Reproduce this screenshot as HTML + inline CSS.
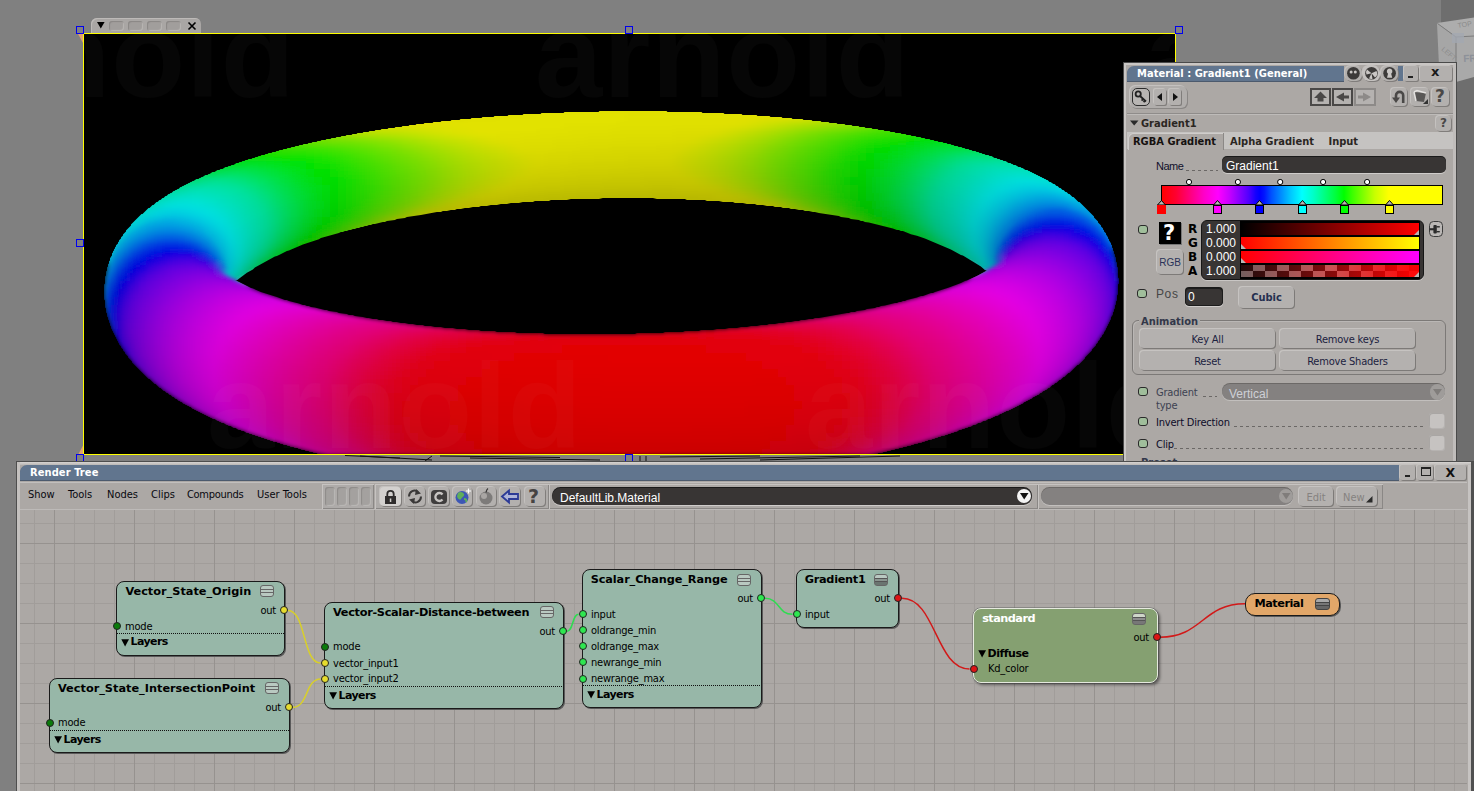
<!DOCTYPE html>
<html><head><meta charset="utf-8"><title>Render Tree</title>
<style>
*{box-sizing:border-box;margin:0;padding:0}
html,body{width:1474px;height:791px;overflow:hidden}
body{position:relative;background:#808080;font-family:"Liberation Sans",sans-serif;font-size:11px;color:#111}
.abs{position:absolute}
.hd{position:absolute;width:8px;height:8px;border:1px solid #0000f0;background:#808080}
/* property panel */
#pp{position:absolute;left:1123px;top:62px;width:334px;height:402px;background:#aca8a5;border:1px solid #4a4a4a;overflow:hidden}
#pp .in{position:absolute;left:0;top:0;right:0;bottom:0;border-left:2px solid #c9c6c4;border-top:2px solid #c9c6c4;border-right:3px solid #c0bdbb}
.ui{font-family:"DejaVu Sans Condensed","DejaVu Sans",sans-serif}
.btn{position:absolute;background:#b4b1af;border-radius:4px;box-shadow:1px 1px 0 #7d7a78,-1px -1px 0 #c6c3c1;text-align:center;color:#1c2140}
.ico{position:absolute;background:#b3b0ae;border-radius:4px;box-shadow:1px 1px 0 #807d7b,-1px -1px 0 #c4c1bf}
.fld{position:absolute;background:#383534;border-radius:5px;color:#fff;box-shadow:0 -1px 0 #1a1a1a,0 1px 0 #cfccca}
.an{position:absolute;width:10px;height:9px;background:#a0be9b;border:1px solid #2a2a2a;border-radius:3px}
.lbl{position:absolute;white-space:nowrap}
.dots{position:absolute;height:1px;background:repeating-linear-gradient(90deg,#6b6866 0 3px,transparent 3px 6px)}
/* render tree */
#rt{position:absolute;left:16px;top:461px;width:1458px;height:330px;background:#aca8a5;border-left:1px solid #505050;border-top:1px solid #505050}
#grid{position:absolute;left:20px;top:510px;width:1447px;height:281px;background-color:#aca8a5;
background-image:linear-gradient(90deg,#96928f 0 1px,transparent 1px),linear-gradient(#96928f 0 1px,transparent 1px),linear-gradient(90deg,#a19d9a 0 1px,transparent 1px),linear-gradient(#a19d9a 0 1px,transparent 1px);
background-size:80px 80px,80px 80px,20px 20px,20px 20px;background-position:34px 33px,34px 33px,14px 13px,14px 13px}
.node{position:absolute;border:1px solid #1a1a1a;border-radius:8px;background:#97b7a8;box-shadow:1px 1px 0 #5a5a5a}
.nt{position:absolute;font:bold 11.3px "DejaVu Sans",sans-serif;color:#000;white-space:nowrap;line-height:14px}
.pl{position:absolute;font:11px "DejaVu Sans Condensed","DejaVu Sans",sans-serif;color:#000;white-space:nowrap;line-height:13px;letter-spacing:-.2px}
.port{position:absolute;width:8px;height:8px;border-radius:50%;border:1px solid #222}
.dl{position:absolute;left:0;right:0;height:1px;background:repeating-linear-gradient(90deg,#111 0 1px,transparent 1px 2px)}
.mi{position:absolute;width:14px;height:12px;border:1px solid #666;border-radius:3px;background:linear-gradient(#b9c9c1 0 3px,#666 3px 4px,#b9c9c1 4px 6px,#666 6px 7px,#b9c9c1 7px)}
.menu span{position:absolute;top:0;font:11px "DejaVu Sans Condensed","DejaVu Sans",sans-serif;color:#08080f;white-space:nowrap}
</style></head><body>
<!-- viewport background pieces -->
<div class="abs" style="left:1441px;top:0;width:33px;height:462px;background:#6e6e6e"></div>
<svg class="abs" style="left:1430px;top:10px" width="44" height="80" viewBox="1430 10 44 80">
<polygon points="1437,23 1474,17.5 1474,40 1456,37" fill="#adadad"/>
<polygon points="1437,23 1456,37 1456,82 1439,66" fill="#a6a6a6"/>
<polygon points="1456,37 1474,36 1474,77 1456,82" fill="#a9a9a9"/>
<path d="M1437.5 23.5L1456 37L1474 36M1456 37V82" stroke="#7c7c7c" stroke-width="1" fill="none"/>
<rect x="1452" y="33" width="12" height="10" fill="#a3a8b0" opacity=".8"/>
<text x="1463.5" y="62" font-family="Liberation Sans,sans-serif" font-size="10" font-weight="bold" fill="#8d9199" transform="rotate(-3 1463 62)">FRONT</text>
<text x="1458" y="28" font-family="Liberation Sans,sans-serif" font-size="7" fill="#8b8b8b" transform="rotate(-9 1458 28)">TOP</text>
<text x="1441" y="50" font-family="Liberation Sans,sans-serif" font-size="7" fill="#8b8b8b" transform="rotate(40 1441 50)">LEFT</text>
</svg>
<!-- region tab -->
<div class="abs" style="left:91px;top:18px;width:110px;height:16px;background:#a9a6a4;border-radius:6px 6px 0 0;box-shadow:inset 1px 1px 0 #bdbab8"></div>
<svg class="abs" style="left:96px;top:21px" width="10" height="8"><polygon points="1,1 8.6,1 4.8,7.4" fill="#000"/></svg>
<div class="abs" style="left:109px;top:21px;width:15px;height:10px;border-radius:3px;background:#a19e9c;box-shadow:inset 1px 1px 1px #8a8785,inset -1px -1px 1px #b9b6b4"></div>
<div class="abs" style="left:128px;top:21px;width:15px;height:10px;border-radius:3px;background:#a19e9c;box-shadow:inset 1px 1px 1px #8a8785,inset -1px -1px 1px #b9b6b4"></div>
<div class="abs" style="left:147px;top:21px;width:15px;height:10px;border-radius:3px;background:#a19e9c;box-shadow:inset 1px 1px 1px #8a8785,inset -1px -1px 1px #b9b6b4"></div>
<div class="abs" style="left:166px;top:21px;width:15px;height:10px;border-radius:3px;background:#a19e9c;box-shadow:inset 1px 1px 1px #8a8785,inset -1px -1px 1px #b9b6b4"></div>
<svg class="abs" style="left:187px;top:21px" width="10" height="10"><path d="M1.5 1.5L8.5 8.5M8.5 1.5L1.5 8.5" stroke="#000" stroke-width="1.6"/></svg>
<!-- render region -->
<div class="abs" style="left:83px;top:33px;width:1093px;height:422px;background:#000;border:1px solid #ffff00"></div>
<svg class="abs" style="left:84px;top:34px" width="1091" height="420" viewBox="84 34 1091 420"><defs><clipPath id="tc"><path clip-rule="evenodd" d="M869.5 456.0L326.5 456.0L325.5 455.0L321.5 455.0L320.5 454.0L317.5 454.0L316.5 453.0L313.5 453.0L312.5 452.0L309.5 452.0L308.5 451.0L305.5 451.0L304.5 450.0L301.5 450.0L300.5 449.0L298.5 449.0L297.5 448.0L294.5 448.0L293.5 447.0L290.5 447.0L289.5 446.0L287.5 446.0L286.5 445.0L283.5 445.0L282.5 444.0L280.5 444.0L279.5 443.0L277.5 443.0L276.5 442.0L273.5 442.0L272.5 441.0L270.5 441.0L269.5 440.0L267.5 440.0L266.5 439.0L264.5 439.0L263.5 438.0L261.5 438.0L260.5 437.0L258.5 437.0L257.5 436.0L255.5 436.0L254.5 435.0L252.5 435.0L251.5 434.0L249.5 434.0L248.5 433.0L246.5 433.0L243.5 431.0L241.5 431.0L240.5 430.0L238.5 430.0L235.5 428.0L233.5 428.0L230.5 426.0L228.5 426.0L227.5 425.0L226.5 425.0L223.5 423.0L221.5 423.0L220.5 422.0L219.5 422.0L218.5 421.0L217.5 421.0L214.5 419.0L212.5 419.0L211.5 418.0L210.5 418.0L209.5 417.0L208.5 417.0L207.5 416.0L206.5 416.0L205.5 415.0L204.5 415.0L203.5 414.0L202.5 414.0L201.5 413.0L200.5 413.0L199.5 412.0L198.5 412.0L197.5 411.0L196.5 411.0L195.5 410.0L194.5 410.0L193.5 409.0L192.5 409.0L190.5 407.0L189.5 407.0L188.5 406.0L187.5 406.0L186.5 405.0L185.5 405.0L184.5 404.0L183.5 404.0L181.5 402.0L180.5 402.0L179.5 401.0L178.5 401.0L176.5 399.0L175.5 399.0L173.5 397.0L172.5 397.0L170.5 395.0L169.5 395.0L167.5 393.0L166.5 393.0L164.5 391.0L163.5 391.0L160.5 388.0L159.5 388.0L155.5 384.0L154.5 384.0L149.5 379.0L148.5 379.0L132 362.5L132 361.5L128 357.5L128 356.5L125 353.5L125 352.5L123 350.5L123 349.5L121 347.5L121 346.5L119 344.5L119 343.5L118 342.5L118 341.5L117 340.5L117 339.5L116 338.5L116 337.5L115 336.5L115 335.5L114 334.5L114 333.5L113 332.5L113 331.5L112 330.5L112 329.5L111 328.5L111 326.5L110 325.5L110 323.5L109 322.5L109 320.5L108 319.5L108 317.5L107 316.5L107 313.5L106 312.5L106 308.5L105 307.5L105 300.5L104 299.5L104 284.5L105 283.5L105 276.5L106 275.5L106 271.5L107 270.5L107 267.5L108 266.5L108 264.5L109 263.5L109 261.5L110 260.5L110 258.5L112 255.5L112 253.5L113 252.5L113 251.5L114 250.5L114 249.5L115 248.5L115 247.5L116 246.5L116 245.5L118 243.5L118 242.5L119 241.5L119 240.5L121 238.5L121 237.5L123 235.5L123 234.5L126 231.5L126 230.5L131 225.5L131 224.5L141.5 214.0L142.5 214.0L148.5 208.0L149.5 208.0L152.5 205.0L153.5 205.0L156.5 202.0L157.5 202.0L159.5 200.0L160.5 200.0L162.5 198.0L163.5 198.0L165.5 196.0L166.5 196.0L168.5 194.0L169.5 194.0L170.5 193.0L171.5 193.0L173.5 191.0L174.5 191.0L175.5 190.0L176.5 190.0L177.5 189.0L178.5 189.0L180.5 187.0L181.5 187.0L182.5 186.0L183.5 186.0L184.5 185.0L185.5 185.0L186.5 184.0L187.5 184.0L188.5 183.0L189.5 183.0L190.5 182.0L191.5 182.0L192.5 181.0L193.5 181.0L196.5 179.0L198.5 179.0L199.5 178.0L200.5 178.0L201.5 177.0L202.5 177.0L205.5 175.0L207.5 175.0L208.5 174.0L209.5 174.0L212.5 172.0L214.5 172.0L217.5 170.0L219.5 170.0L220.5 169.0L222.5 169.0L225.5 167.0L227.5 167.0L228.5 166.0L230.5 166.0L231.5 165.0L233.5 165.0L236.5 163.0L238.5 163.0L239.5 162.0L241.5 162.0L242.5 161.0L244.5 161.0L245.5 160.0L247.5 160.0L248.5 159.0L251.5 159.0L252.5 158.0L254.5 158.0L255.5 157.0L257.5 157.0L258.5 156.0L260.5 156.0L261.5 155.0L264.5 155.0L265.5 154.0L267.5 154.0L268.5 153.0L271.5 153.0L272.5 152.0L275.5 152.0L276.5 151.0L278.5 151.0L279.5 150.0L282.5 150.0L283.5 149.0L286.5 149.0L287.5 148.0L290.5 148.0L291.5 147.0L294.5 147.0L295.5 146.0L298.5 146.0L299.5 145.0L302.5 145.0L303.5 144.0L307.5 144.0L308.5 143.0L311.5 143.0L312.5 142.0L316.5 142.0L317.5 141.0L320.5 141.0L321.5 140.0L325.5 140.0L326.5 139.0L330.5 139.0L331.5 138.0L335.5 138.0L336.5 137.0L340.5 137.0L341.5 136.0L345.5 136.0L346.5 135.0L351.5 135.0L352.5 134.0L356.5 134.0L357.5 133.0L362.5 133.0L363.5 132.0L368.5 132.0L369.5 131.0L374.5 131.0L375.5 130.0L380.5 130.0L381.5 129.0L387.5 129.0L388.5 128.0L394.5 128.0L395.5 127.0L401.5 127.0L402.5 126.0L408.5 126.0L409.5 125.0L415.5 125.0L416.5 124.0L423.5 124.0L424.5 123.0L432.5 123.0L433.5 122.0L440.5 122.0L441.5 121.0L450.5 121.0L451.5 120.0L459.5 120.0L460.5 119.0L470.5 119.0L471.5 118.0L481.5 118.0L482.5 117.0L493.5 117.0L494.5 116.0L507.5 116.0L508.5 115.0L522.5 115.0L523.5 114.0L540.5 114.0L541.5 113.0L563.5 113.0L564.5 112.0L598.5 112.0L599.5 111.0L666.5 111.0L667.5 112.0L701.5 112.0L702.5 113.0L723.5 113.0L724.5 114.0L741.5 114.0L742.5 115.0L756.5 115.0L757.5 116.0L769.5 116.0L770.5 117.0L781.5 117.0L782.5 118.0L791.5 118.0L792.5 119.0L802.5 119.0L803.5 120.0L811.5 120.0L812.5 121.0L820.5 121.0L821.5 122.0L828.5 122.0L829.5 123.0L836.5 123.0L837.5 124.0L844.5 124.0L845.5 125.0L851.5 125.0L852.5 126.0L858.5 126.0L859.5 127.0L864.5 127.0L865.5 128.0L871.5 128.0L872.5 129.0L877.5 129.0L878.5 130.0L883.5 130.0L884.5 131.0L889.5 131.0L890.5 132.0L894.5 132.0L895.5 133.0L900.5 133.0L901.5 134.0L905.5 134.0L906.5 135.0L910.5 135.0L911.5 136.0L915.5 136.0L916.5 137.0L920.5 137.0L921.5 138.0L924.5 138.0L925.5 139.0L929.5 139.0L930.5 140.0L933.5 140.0L934.5 141.0L937.5 141.0L938.5 142.0L942.5 142.0L943.5 143.0L946.5 143.0L947.5 144.0L950.5 144.0L951.5 145.0L953.5 145.0L954.5 146.0L957.5 146.0L958.5 147.0L961.5 147.0L962.5 148.0L964.5 148.0L965.5 149.0L968.5 149.0L969.5 150.0L971.5 150.0L972.5 151.0L975.5 151.0L976.5 152.0L978.5 152.0L979.5 153.0L981.5 153.0L982.5 154.0L984.5 154.0L985.5 155.0L988.5 155.0L989.5 156.0L991.5 156.0L994.5 158.0L996.5 158.0L997.5 159.0L999.5 159.0L1000.5 160.0L1002.5 160.0L1003.5 161.0L1005.5 161.0L1008.5 163.0L1010.5 163.0L1011.5 164.0L1012.5 164.0L1013.5 165.0L1015.5 165.0L1018.5 167.0L1020.5 167.0L1021.5 168.0L1022.5 168.0L1025.5 170.0L1027.5 170.0L1028.5 171.0L1029.5 171.0L1030.5 172.0L1031.5 172.0L1032.5 173.0L1033.5 173.0L1034.5 174.0L1035.5 174.0L1036.5 175.0L1037.5 175.0L1038.5 176.0L1039.5 176.0L1040.5 177.0L1041.5 177.0L1042.5 178.0L1043.5 178.0L1044.5 179.0L1045.5 179.0L1046.5 180.0L1047.5 180.0L1049.5 182.0L1050.5 182.0L1053.5 184.0L1054.5 184.0L1056.5 186.0L1057.5 186.0L1059.5 188.0L1060.5 188.0L1062.5 190.0L1063.5 190.0L1065.5 192.0L1066.5 192.0L1068.5 194.0L1069.5 194.0L1072.5 197.0L1073.5 197.0L1078.5 202.0L1079.5 202.0L1094 216.5L1094 217.5L1098 221.5L1098 222.5L1101 225.5L1101 226.5L1103 228.5L1103 229.5L1104 230.5L1104 231.5L1106 233.5L1106 234.5L1108 237.5L1108 238.5L1109 239.5L1109 240.5L1111 243.5L1111 244.5L1112 245.5L1112 247.5L1113 248.5L1113 250.5L1114 251.5L1114 253.5L1115 254.5L1115 256.5L1116 257.5L1116 261.5L1117 262.5L1117 266.5L1118 267.5L1118 277.5L1119 278.5L1119 283.5L1118 284.5L1118 294.5L1117 295.5L1117 300.5L1116 301.5L1116 304.5L1115 305.5L1115 308.5L1114 309.5L1114 311.5L1113 312.5L1113 314.5L1111 317.5L1111 319.5L1110 320.5L1110 321.5L1109 322.5L1109 323.5L1108 324.5L1108 325.5L1107 326.5L1107 327.5L1106 328.5L1106 329.5L1104 332.5L1104 333.5L1102 335.5L1102 336.5L1100 338.5L1100 339.5L1098 341.5L1098 342.5L1096 344.5L1096 345.5L1092 349.5L1092 350.5L1085 357.5L1085 358.5L1078.5 365.0L1077.5 365.0L1069.5 373.0L1068.5 373.0L1064.5 377.0L1063.5 377.0L1060.5 380.0L1059.5 380.0L1056.5 383.0L1055.5 383.0L1053.5 385.0L1052.5 385.0L1049.5 388.0L1048.5 388.0L1046.5 390.0L1045.5 390.0L1044.5 391.0L1043.5 391.0L1041.5 393.0L1040.5 393.0L1038.5 395.0L1037.5 395.0L1036.5 396.0L1035.5 396.0L1034.5 397.0L1033.5 397.0L1031.5 399.0L1030.5 399.0L1029.5 400.0L1028.5 400.0L1027.5 401.0L1026.5 401.0L1025.5 402.0L1024.5 402.0L1022.5 404.0L1021.5 404.0L1020.5 405.0L1019.5 405.0L1018.5 406.0L1017.5 406.0L1016.5 407.0L1015.5 407.0L1014.5 408.0L1013.5 408.0L1012.5 409.0L1011.5 409.0L1010.5 410.0L1009.5 410.0L1008.5 411.0L1006.5 411.0L1005.5 412.0L1004.5 412.0L1003.5 413.0L1002.5 413.0L1001.5 414.0L1000.5 414.0L997.5 416.0L995.5 416.0L994.5 417.0L993.5 417.0L992.5 418.0L991.5 418.0L990.5 419.0L988.5 419.0L985.5 421.0L983.5 421.0L980.5 423.0L978.5 423.0L975.5 425.0L973.5 425.0L970.5 427.0L968.5 427.0L967.5 428.0L965.5 428.0L964.5 429.0L962.5 429.0L961.5 430.0L959.5 430.0L956.5 432.0L954.5 432.0L953.5 433.0L951.5 433.0L950.5 434.0L948.5 434.0L947.5 435.0L945.5 435.0L944.5 436.0L941.5 436.0L940.5 437.0L938.5 437.0L937.5 438.0L935.5 438.0L934.5 439.0L932.5 439.0L931.5 440.0L928.5 440.0L927.5 441.0L925.5 441.0L924.5 442.0L922.5 442.0L921.5 443.0L918.5 443.0L917.5 444.0L914.5 444.0L913.5 445.0L911.5 445.0L910.5 446.0L907.5 446.0L906.5 447.0L903.5 447.0L902.5 448.0L899.5 448.0L898.5 449.0L895.5 449.0L894.5 450.0L891.5 450.0L890.5 451.0L887.5 451.0L886.5 452.0L883.5 452.0L882.5 453.0L878.5 453.0L877.5 454.0L874.5 454.0L873.5 455.0L870.5 455.0L869.5 456.0ZM232.9 279.0L234.9 280.0L236.9 280.3L246.9 272.7L252.9 269.4L254.9 267.6L274.9 256.6L276.9 256.1L286.9 251.1L288.9 250.6L302.9 244.6L318.9 239.2L320.9 238.1L338.9 233.0L340.9 232.0L342.9 232.0L344.9 231.0L346.9 231.0L348.9 230.0L350.9 230.0L352.9 229.0L354.9 229.0L356.9 228.0L358.9 228.0L360.9 227.0L362.9 227.0L364.9 226.0L366.9 226.0L368.9 225.0L370.9 225.0L372.9 224.0L374.9 224.0L382.9 222.0L384.9 222.0L386.9 221.0L394.9 220.0L396.9 219.0L404.9 218.0L406.9 217.0L420.9 215.0L436.9 212.0L440.9 212.0L442.9 211.0L446.9 211.0L450.9 210.0L454.9 210.0L456.9 209.0L460.9 209.0L464.9 208.0L468.9 208.0L472.9 207.0L478.9 207.0L480.9 206.0L486.9 206.0L490.9 205.0L496.9 205.0L500.9 204.0L506.9 204.0L510.9 203.0L518.9 203.0L522.9 202.0L532.9 202.0L534.9 201.0L548.9 201.0L550.9 200.0L566.9 200.0L570.9 199.0L598.9 199.0L602.9 198.0L652.9 198.0L656.9 199.0L684.9 199.0L686.9 200.0L704.9 200.0L706.9 201.0L718.9 201.0L722.9 202.0L732.9 202.0L734.9 203.0L742.9 203.0L746.9 204.0L754.9 204.0L756.9 205.0L762.9 205.0L766.9 206.0L772.9 206.0L774.9 207.0L780.9 207.0L782.9 208.0L788.9 208.0L790.9 209.0L794.9 209.0L798.9 210.0L802.9 210.0L804.9 211.0L808.9 211.0L812.9 212.0L814.9 212.0L818.9 213.0L838.9 216.0L840.9 217.0L848.9 218.0L850.9 219.0L858.9 220.0L860.9 221.0L862.9 221.0L864.9 222.0L868.9 222.4L892.9 228.4L896.9 230.0L898.9 230.0L900.9 231.0L902.9 231.1L910.9 234.2L916.9 235.7L924.9 238.5L950.9 249.5L960.9 255.0L962.9 255.5L980.9 266.6L984.9 269.9L986.9 270.6L993 266.5L986.9 270.6L976.9 276.0L966.9 280.6L964.9 281.0L960.9 283.0L948.9 287.6L934.9 292.0L932.9 293.0L930.9 293.0L922.9 296.0L920.9 296.0L916.9 297.6L906.9 300.0L904.9 301.0L902.9 301.0L900.9 302.0L898.9 302.0L896.9 303.0L894.9 303.0L884.9 305.6L880.9 306.0L878.9 307.0L876.9 307.0L874.9 308.0L866.9 309.0L864.9 310.0L856.9 311.0L854.9 312.0L850.9 312.0L848.9 313.0L846.9 313.0L818.9 318.0L814.9 318.0L812.9 319.0L808.9 319.0L804.9 320.0L800.9 320.0L798.9 321.0L794.9 321.0L790.9 322.0L786.9 322.0L782.9 323.0L778.9 323.0L774.9 324.0L768.9 324.0L766.9 325.0L760.9 325.0L756.9 326.0L750.9 326.0L746.9 327.0L740.9 327.0L736.9 328.0L728.9 328.0L724.9 329.0L716.9 329.0L712.9 330.0L700.9 330.0L698.9 331.0L684.9 331.0L682.9 332.0L664.9 332.0L662.9 333.0L636.9 333.0L634.9 334.0L544.9 334.0L542.9 333.0L516.9 333.0L514.9 332.0L496.9 332.0L494.9 331.0L480.9 331.0L478.9 330.0L468.9 330.0L464.9 329.0L456.9 329.0L452.9 328.0L444.9 328.0L440.9 327.0L434.9 327.0L430.9 326.0L424.9 326.0L422.9 325.0L416.9 325.0L412.9 324.0L408.9 324.0L404.9 323.0L400.9 323.0L396.9 322.0L392.9 322.0L390.9 321.0L386.9 321.0L382.9 320.0L378.9 320.0L376.9 319.0L372.9 319.0L368.9 318.0L366.9 318.0L362.9 317.0L354.9 316.0L352.9 315.0L348.9 315.0L346.9 314.0L338.9 313.0L336.9 312.0L328.9 311.0L326.9 310.0L324.9 310.0L314.9 307.4L310.9 307.0L308.9 306.0L306.9 306.0L304.9 305.0L302.9 305.0L298.9 303.4L288.9 301.0L286.9 300.0L284.9 300.0L276.9 297.0L260.9 292.0L252.9 288.4L250.9 288.0L232.9 279.0Z"/></clipPath><filter id="tm" x="-2%" y="-5%" width="104%" height="110%"><feGaussianBlur stdDeviation="2"/></filter><mask id="tf" maskUnits="userSpaceOnUse" x="84" y="34" width="1091" height="420"><path fill="#fff" fill-rule="evenodd" filter="url(#tm)" d="M869.5 456.0L326.5 456.0L325.5 455.0L321.5 455.0L320.5 454.0L317.5 454.0L316.5 453.0L313.5 453.0L312.5 452.0L309.5 452.0L308.5 451.0L305.5 451.0L304.5 450.0L301.5 450.0L300.5 449.0L298.5 449.0L297.5 448.0L294.5 448.0L293.5 447.0L290.5 447.0L289.5 446.0L287.5 446.0L286.5 445.0L283.5 445.0L282.5 444.0L280.5 444.0L279.5 443.0L277.5 443.0L276.5 442.0L273.5 442.0L272.5 441.0L270.5 441.0L269.5 440.0L267.5 440.0L266.5 439.0L264.5 439.0L263.5 438.0L261.5 438.0L260.5 437.0L258.5 437.0L257.5 436.0L255.5 436.0L254.5 435.0L252.5 435.0L251.5 434.0L249.5 434.0L248.5 433.0L246.5 433.0L243.5 431.0L241.5 431.0L240.5 430.0L238.5 430.0L235.5 428.0L233.5 428.0L230.5 426.0L228.5 426.0L227.5 425.0L226.5 425.0L223.5 423.0L221.5 423.0L220.5 422.0L219.5 422.0L218.5 421.0L217.5 421.0L214.5 419.0L212.5 419.0L211.5 418.0L210.5 418.0L209.5 417.0L208.5 417.0L207.5 416.0L206.5 416.0L205.5 415.0L204.5 415.0L203.5 414.0L202.5 414.0L201.5 413.0L200.5 413.0L199.5 412.0L198.5 412.0L197.5 411.0L196.5 411.0L195.5 410.0L194.5 410.0L193.5 409.0L192.5 409.0L190.5 407.0L189.5 407.0L188.5 406.0L187.5 406.0L186.5 405.0L185.5 405.0L184.5 404.0L183.5 404.0L181.5 402.0L180.5 402.0L179.5 401.0L178.5 401.0L176.5 399.0L175.5 399.0L173.5 397.0L172.5 397.0L170.5 395.0L169.5 395.0L167.5 393.0L166.5 393.0L164.5 391.0L163.5 391.0L160.5 388.0L159.5 388.0L155.5 384.0L154.5 384.0L149.5 379.0L148.5 379.0L132 362.5L132 361.5L128 357.5L128 356.5L125 353.5L125 352.5L123 350.5L123 349.5L121 347.5L121 346.5L119 344.5L119 343.5L118 342.5L118 341.5L117 340.5L117 339.5L116 338.5L116 337.5L115 336.5L115 335.5L114 334.5L114 333.5L113 332.5L113 331.5L112 330.5L112 329.5L111 328.5L111 326.5L110 325.5L110 323.5L109 322.5L109 320.5L108 319.5L108 317.5L107 316.5L107 313.5L106 312.5L106 308.5L105 307.5L105 300.5L104 299.5L104 284.5L105 283.5L105 276.5L106 275.5L106 271.5L107 270.5L107 267.5L108 266.5L108 264.5L109 263.5L109 261.5L110 260.5L110 258.5L112 255.5L112 253.5L113 252.5L113 251.5L114 250.5L114 249.5L116 247.5L116 246.5L118 244.5L118 243.5L129.5 232.0L130.5 232.0L132.5 230.0L133.5 230.0L135.5 228.0L136.5 228.0L137.5 227.0L138.5 227.0L141.5 225.0L143.5 225.0L146.5 223.0L149.5 223.0L150.5 222.0L153.5 222.0L154.5 221.0L161.5 221.0L162.5 220.0L169.5 220.0L170.5 221.0L177.5 221.0L178.5 222.0L182.5 222.0L183.5 223.0L185.5 223.0L186.5 224.0L188.5 224.0L191.5 226.0L192.5 226.0L193.5 227.0L195.5 227.0L197.5 229.0L198.5 229.0L199.5 230.0L200.5 230.0L202.5 232.0L203.5 232.0L208.5 237.0L209.5 237.0L211 238.5L211 239.5L216 244.5L216 245.5L218 247.5L218 248.5L220 250.5L220 251.5L222 254.5L222 255.5L223 256.5L223 258.5L224 259.5L224 261.5L225 262.5L225 265.5L226 266.5L226 270.5L225.5 271.0L222.5 268.0L221.5 268.0L220.5 267.0L220 267.5L220 268.5L226.5 275.0L227.5 275.0L229.5 277.0L230.5 277.0L232.5 279.0L233.5 279.0L234.5 280.0L235.5 280.0L236.5 281.0L237.5 281.0L238.5 282.0L239.5 282.0L240.5 283.0L241.5 283.0L242.5 284.0L243.5 284.0L244.5 285.0L245.5 285.0L246.5 286.0L247.5 286.0L248.5 287.0L249.5 287.0L250.5 288.0L252.5 288.0L255.5 290.0L257.5 290.0L260.5 292.0L262.5 292.0L263.5 293.0L265.5 293.0L266.5 294.0L268.5 294.0L269.5 295.0L271.5 295.0L272.5 296.0L274.5 296.0L275.5 297.0L277.5 297.0L278.5 298.0L280.5 298.0L281.5 299.0L283.5 299.0L284.5 300.0L287.5 300.0L288.5 301.0L290.5 301.0L291.5 302.0L294.5 302.0L295.5 303.0L298.5 303.0L299.5 304.0L301.5 304.0L302.5 305.0L305.5 305.0L306.5 306.0L309.5 306.0L310.5 307.0L314.5 307.0L315.5 308.0L318.5 308.0L319.5 309.0L322.5 309.0L323.5 310.0L327.5 310.0L328.5 311.0L332.5 311.0L333.5 312.0L337.5 312.0L338.5 313.0L342.5 313.0L343.5 314.0L347.5 314.0L348.5 315.0L353.5 315.0L354.5 316.0L358.5 316.0L359.5 317.0L364.5 317.0L365.5 318.0L370.5 318.0L371.5 319.0L377.5 319.0L378.5 320.0L384.5 320.0L385.5 321.0L391.5 321.0L392.5 322.0L398.5 322.0L399.5 323.0L406.5 323.0L407.5 324.0L414.5 324.0L415.5 325.0L423.5 325.0L424.5 326.0L432.5 326.0L433.5 327.0L442.5 327.0L443.5 328.0L454.5 328.0L455.5 329.0L466.5 329.0L467.5 330.0L479.5 330.0L480.5 331.0L495.5 331.0L496.5 332.0L515.5 332.0L516.5 333.0L543.5 333.0L544.5 334.0L635.5 334.0L636.5 333.0L663.5 333.0L664.5 332.0L683.5 332.0L684.5 331.0L699.5 331.0L700.5 330.0L714.5 330.0L715.5 329.0L726.5 329.0L727.5 328.0L738.5 328.0L739.5 327.0L748.5 327.0L749.5 326.0L758.5 326.0L759.5 325.0L767.5 325.0L768.5 324.0L776.5 324.0L777.5 323.0L784.5 323.0L785.5 322.0L792.5 322.0L793.5 321.0L799.5 321.0L800.5 320.0L806.5 320.0L807.5 319.0L813.5 319.0L814.5 318.0L820.5 318.0L821.5 317.0L826.5 317.0L827.5 316.0L832.5 316.0L833.5 315.0L838.5 315.0L839.5 314.0L844.5 314.0L845.5 313.0L849.5 313.0L850.5 312.0L855.5 312.0L856.5 311.0L860.5 311.0L861.5 310.0L865.5 310.0L866.5 309.0L870.5 309.0L871.5 308.0L875.5 308.0L876.5 307.0L879.5 307.0L880.5 306.0L884.5 306.0L885.5 305.0L888.5 305.0L889.5 304.0L892.5 304.0L893.5 303.0L897.5 303.0L898.5 302.0L901.5 302.0L902.5 301.0L905.5 301.0L906.5 300.0L908.5 300.0L909.5 299.0L912.5 299.0L913.5 298.0L916.5 298.0L917.5 297.0L919.5 297.0L920.5 296.0L923.5 296.0L924.5 295.0L926.5 295.0L927.5 294.0L929.5 294.0L930.5 293.0L933.5 293.0L934.5 292.0L936.5 292.0L937.5 291.0L939.5 291.0L940.5 290.0L942.5 290.0L943.5 289.0L945.5 289.0L946.5 288.0L948.5 288.0L951.5 286.0L953.5 286.0L954.5 285.0L956.5 285.0L959.5 283.0L961.5 283.0L964.5 281.0L966.5 281.0L967.5 280.0L968.5 280.0L969.5 279.0L970.5 279.0L971.5 278.0L972.5 278.0L973.5 277.0L974.5 277.0L975.5 276.0L977.5 276.0L979.5 274.0L980.5 274.0L981.5 273.0L982.5 273.0L983.5 272.0L984.5 272.0L985.5 271.0L986.5 271.0L988.5 269.0L989.5 269.0L990.5 268.0L991.5 268.0L993.5 266.0L994.5 266.0L1002 258.5L1002 257.5L1001.5 257.0L1000.5 258.0L999.5 258.0L996.5 261.0L996 260.5L996 256.5L997 255.5L997 252.5L998 251.5L998 248.5L1000 245.5L1000 243.5L1002 240.5L1002 239.5L1004 237.5L1004 236.5L1006 234.5L1006 233.5L1009 230.5L1009 229.5L1009.5 229.0L1014.5 224.0L1015.5 224.0L1019.5 220.0L1020.5 220.0L1022.5 218.0L1023.5 218.0L1024.5 217.0L1025.5 217.0L1026.5 216.0L1027.5 216.0L1028.5 215.0L1029.5 215.0L1030.5 214.0L1031.5 214.0L1032.5 213.0L1034.5 213.0L1035.5 212.0L1037.5 212.0L1038.5 211.0L1040.5 211.0L1041.5 210.0L1045.5 210.0L1046.5 209.0L1066.5 209.0L1067.5 210.0L1070.5 210.0L1071.5 211.0L1074.5 211.0L1075.5 212.0L1077.5 212.0L1080.5 214.0L1082.5 214.0L1083.5 215.0L1084.5 215.0L1085.5 216.0L1086.5 216.0L1088.5 218.0L1089.5 218.0L1091.5 220.0L1092.5 220.0L1096.5 224.0L1097.5 224.0L1101 227.5L1101 228.5L1105 232.5L1105 233.5L1107 235.5L1107 236.5L1108 237.5L1108 238.5L1109 239.5L1109 240.5L1110 241.5L1110 242.5L1111 243.5L1111 244.5L1112 245.5L1112 247.5L1113 248.5L1113 250.5L1114 251.5L1114 253.5L1115 254.5L1115 256.5L1116 257.5L1116 261.5L1117 262.5L1117 266.5L1118 267.5L1118 277.5L1119 278.5L1119 283.5L1118 284.5L1118 294.5L1117 295.5L1117 300.5L1116 301.5L1116 304.5L1115 305.5L1115 308.5L1114 309.5L1114 311.5L1113 312.5L1113 314.5L1111 317.5L1111 319.5L1110 320.5L1110 321.5L1109 322.5L1109 323.5L1108 324.5L1108 325.5L1107 326.5L1107 327.5L1106 328.5L1106 329.5L1104 332.5L1104 333.5L1102 335.5L1102 336.5L1100 338.5L1100 339.5L1098 341.5L1098 342.5L1096 344.5L1096 345.5L1092 349.5L1092 350.5L1085 357.5L1085 358.5L1078.5 365.0L1077.5 365.0L1069.5 373.0L1068.5 373.0L1064.5 377.0L1063.5 377.0L1060.5 380.0L1059.5 380.0L1056.5 383.0L1055.5 383.0L1053.5 385.0L1052.5 385.0L1049.5 388.0L1048.5 388.0L1046.5 390.0L1045.5 390.0L1044.5 391.0L1043.5 391.0L1041.5 393.0L1040.5 393.0L1038.5 395.0L1037.5 395.0L1036.5 396.0L1035.5 396.0L1034.5 397.0L1033.5 397.0L1031.5 399.0L1030.5 399.0L1029.5 400.0L1028.5 400.0L1027.5 401.0L1026.5 401.0L1025.5 402.0L1024.5 402.0L1022.5 404.0L1021.5 404.0L1020.5 405.0L1019.5 405.0L1018.5 406.0L1017.5 406.0L1016.5 407.0L1015.5 407.0L1014.5 408.0L1013.5 408.0L1012.5 409.0L1011.5 409.0L1010.5 410.0L1009.5 410.0L1008.5 411.0L1006.5 411.0L1005.5 412.0L1004.5 412.0L1003.5 413.0L1002.5 413.0L1001.5 414.0L1000.5 414.0L997.5 416.0L995.5 416.0L994.5 417.0L993.5 417.0L992.5 418.0L991.5 418.0L990.5 419.0L988.5 419.0L985.5 421.0L983.5 421.0L980.5 423.0L978.5 423.0L975.5 425.0L973.5 425.0L970.5 427.0L968.5 427.0L967.5 428.0L965.5 428.0L964.5 429.0L962.5 429.0L961.5 430.0L959.5 430.0L956.5 432.0L954.5 432.0L953.5 433.0L951.5 433.0L950.5 434.0L948.5 434.0L947.5 435.0L945.5 435.0L944.5 436.0L941.5 436.0L940.5 437.0L938.5 437.0L937.5 438.0L935.5 438.0L934.5 439.0L932.5 439.0L931.5 440.0L928.5 440.0L927.5 441.0L925.5 441.0L924.5 442.0L922.5 442.0L921.5 443.0L918.5 443.0L917.5 444.0L914.5 444.0L913.5 445.0L911.5 445.0L910.5 446.0L907.5 446.0L906.5 447.0L903.5 447.0L902.5 448.0L899.5 448.0L898.5 449.0L895.5 449.0L894.5 450.0L891.5 450.0L890.5 451.0L887.5 451.0L886.5 452.0L883.5 452.0L882.5 453.0L878.5 453.0L877.5 454.0L874.5 454.0L873.5 455.0L870.5 455.0L869.5 456.0Z"/></mask><filter id="tb" x="-2%" y="-5%" width="104%" height="110%"><feGaussianBlur stdDeviation="3.2"/></filter></defs><g clip-path="url(#tc)"><g filter="url(#tb)"><rect x="490" y="97" width="9" height="9" fill="#dfdf00"/><rect x="498" y="97" width="9" height="9" fill="#e0e000"/><rect x="506" y="97" width="9" height="9" fill="#dfdf00"/><rect x="514" y="97" width="9" height="9" fill="#dfdf00"/><rect x="522" y="97" width="9" height="9" fill="#dfdf00"/><rect x="530" y="97" width="9" height="9" fill="#e0e000"/><rect x="538" y="97" width="9" height="9" fill="#dfdf00"/><rect x="546" y="97" width="9" height="9" fill="#e0e000"/><rect x="554" y="97" width="9" height="9" fill="#e0e000"/><rect x="562" y="97" width="9" height="9" fill="#dfdf00"/><rect x="570" y="97" width="9" height="9" fill="#e0e000"/><rect x="578" y="97" width="9" height="9" fill="#e0e000"/><rect x="586" y="97" width="9" height="9" fill="#e1e100"/><rect x="594" y="97" width="9" height="9" fill="#dfdf00"/><rect x="602" y="97" width="9" height="9" fill="#dfdf00"/><rect x="610" y="97" width="9" height="9" fill="#e0e000"/><rect x="618" y="97" width="9" height="9" fill="#e0e000"/><rect x="626" y="97" width="9" height="9" fill="#e0e000"/><rect x="634" y="97" width="9" height="9" fill="#e0e000"/><rect x="642" y="97" width="9" height="9" fill="#e0e000"/><rect x="650" y="97" width="9" height="9" fill="#e0e000"/><rect x="658" y="97" width="9" height="9" fill="#dfdf00"/><rect x="666" y="97" width="9" height="9" fill="#e0e000"/><rect x="674" y="97" width="9" height="9" fill="#e0e000"/><rect x="682" y="97" width="9" height="9" fill="#e0e000"/><rect x="690" y="97" width="9" height="9" fill="#e0e000"/><rect x="698" y="97" width="9" height="9" fill="#dfdf00"/><rect x="706" y="97" width="9" height="9" fill="#e0e000"/><rect x="714" y="97" width="9" height="9" fill="#e0e000"/><rect x="722" y="97" width="9" height="9" fill="#e0e000"/><rect x="730" y="97" width="9" height="9" fill="#e0e000"/><rect x="738" y="97" width="9" height="9" fill="#dfdf00"/><rect x="746" y="97" width="9" height="9" fill="#e0e000"/><rect x="754" y="97" width="9" height="9" fill="#dfdf00"/><rect x="762" y="97" width="9" height="9" fill="#e0e000"/><rect x="410" y="105" width="9" height="9" fill="#dede00"/><rect x="418" y="105" width="9" height="9" fill="#dede00"/><rect x="426" y="105" width="9" height="9" fill="#dfdf00"/><rect x="434" y="105" width="9" height="9" fill="#dfdf00"/><rect x="442" y="105" width="9" height="9" fill="#dfdf00"/><rect x="450" y="105" width="9" height="9" fill="#dfdf00"/><rect x="458" y="105" width="9" height="9" fill="#dfdf00"/><rect x="466" y="105" width="9" height="9" fill="#dfdf00"/><rect x="474" y="105" width="9" height="9" fill="#dfdf00"/><rect x="482" y="105" width="9" height="9" fill="#e0e000"/><rect x="490" y="105" width="9" height="9" fill="#dfdf00"/><rect x="498" y="105" width="9" height="9" fill="#e0e000"/><rect x="506" y="105" width="9" height="9" fill="#dfdf00"/><rect x="514" y="105" width="9" height="9" fill="#e0e000"/><rect x="522" y="105" width="9" height="9" fill="#dfdf00"/><rect x="530" y="105" width="9" height="9" fill="#e0e000"/><rect x="538" y="105" width="9" height="9" fill="#dfdf00"/><rect x="546" y="105" width="9" height="9" fill="#e0e000"/><rect x="554" y="105" width="9" height="9" fill="#e0e000"/><rect x="562" y="105" width="9" height="9" fill="#dfdf00"/><rect x="570" y="105" width="9" height="9" fill="#e0e000"/><rect x="578" y="105" width="9" height="9" fill="#e0e000"/><rect x="586" y="105" width="9" height="9" fill="#e1e100"/><rect x="594" y="105" width="9" height="9" fill="#e0e000"/><rect x="602" y="105" width="9" height="9" fill="#e0e000"/><rect x="610" y="105" width="9" height="9" fill="#e0e000"/><rect x="618" y="105" width="9" height="9" fill="#e0e000"/><rect x="626" y="105" width="9" height="9" fill="#e0e000"/><rect x="634" y="105" width="9" height="9" fill="#e0e000"/><rect x="642" y="105" width="9" height="9" fill="#e0e000"/><rect x="650" y="105" width="9" height="9" fill="#e0e000"/><rect x="658" y="105" width="9" height="9" fill="#e0e000"/><rect x="666" y="105" width="9" height="9" fill="#e0e000"/><rect x="674" y="105" width="9" height="9" fill="#e0e000"/><rect x="682" y="105" width="9" height="9" fill="#e0e000"/><rect x="690" y="105" width="9" height="9" fill="#e0e000"/><rect x="698" y="105" width="9" height="9" fill="#e0e000"/><rect x="706" y="105" width="9" height="9" fill="#e0e000"/><rect x="714" y="105" width="9" height="9" fill="#e0e000"/><rect x="722" y="105" width="9" height="9" fill="#e0e000"/><rect x="730" y="105" width="9" height="9" fill="#e0e000"/><rect x="738" y="105" width="9" height="9" fill="#e0e000"/><rect x="746" y="105" width="9" height="9" fill="#e0e000"/><rect x="754" y="105" width="9" height="9" fill="#e0e000"/><rect x="762" y="105" width="9" height="9" fill="#e0e000"/><rect x="770" y="105" width="9" height="9" fill="#e0e000"/><rect x="778" y="105" width="9" height="9" fill="#e0e000"/><rect x="786" y="105" width="9" height="9" fill="#e0e000"/><rect x="794" y="105" width="9" height="9" fill="#e0e000"/><rect x="802" y="105" width="9" height="9" fill="#dde000"/><rect x="810" y="105" width="9" height="9" fill="#dae000"/><rect x="818" y="105" width="9" height="9" fill="#cee000"/><rect x="826" y="105" width="9" height="9" fill="#c0e000"/><rect x="834" y="105" width="9" height="9" fill="#b4e000"/><rect x="842" y="105" width="9" height="9" fill="#a9e000"/><rect x="362" y="113" width="9" height="9" fill="#d1de00"/><rect x="370" y="113" width="9" height="9" fill="#dcde00"/><rect x="378" y="113" width="9" height="9" fill="#dede00"/><rect x="386" y="113" width="9" height="9" fill="#dfdf00"/><rect x="394" y="113" width="9" height="9" fill="#dfdf00"/><rect x="402" y="113" width="9" height="9" fill="#dfdf00"/><rect x="410" y="113" width="9" height="9" fill="#dfdf00"/><rect x="418" y="113" width="9" height="9" fill="#dfdf00"/><rect x="426" y="113" width="9" height="9" fill="#dfdf00"/><rect x="434" y="113" width="9" height="9" fill="#dfdf00"/><rect x="442" y="113" width="9" height="9" fill="#e0e000"/><rect x="450" y="113" width="9" height="9" fill="#dfdf00"/><rect x="458" y="113" width="9" height="9" fill="#dfdf00"/><rect x="466" y="113" width="9" height="9" fill="#e0e000"/><rect x="474" y="113" width="9" height="9" fill="#e0e000"/><rect x="482" y="113" width="9" height="9" fill="#e0e000"/><rect x="490" y="113" width="9" height="9" fill="#e0e000"/><rect x="498" y="113" width="9" height="9" fill="#e1e100"/><rect x="506" y="113" width="9" height="9" fill="#e1e100"/><rect x="514" y="113" width="9" height="9" fill="#e1e100"/><rect x="522" y="113" width="9" height="9" fill="#e1e100"/><rect x="530" y="113" width="9" height="9" fill="#e1e100"/><rect x="538" y="113" width="9" height="9" fill="#e2e200"/><rect x="546" y="113" width="9" height="9" fill="#e2e200"/><rect x="554" y="113" width="9" height="9" fill="#e2e200"/><rect x="562" y="113" width="9" height="9" fill="#e2e200"/><rect x="570" y="113" width="9" height="9" fill="#e2e200"/><rect x="578" y="113" width="9" height="9" fill="#e2e200"/><rect x="586" y="113" width="9" height="9" fill="#e2e200"/><rect x="594" y="113" width="9" height="9" fill="#e2e200"/><rect x="602" y="113" width="9" height="9" fill="#e2e200"/><rect x="610" y="113" width="9" height="9" fill="#e2e200"/><rect x="618" y="113" width="9" height="9" fill="#e2e200"/><rect x="626" y="113" width="9" height="9" fill="#e1e100"/><rect x="634" y="113" width="9" height="9" fill="#e1e100"/><rect x="642" y="113" width="9" height="9" fill="#e1e100"/><rect x="650" y="113" width="9" height="9" fill="#e1e100"/><rect x="658" y="113" width="9" height="9" fill="#e1e100"/><rect x="666" y="113" width="9" height="9" fill="#e1e100"/><rect x="674" y="113" width="9" height="9" fill="#e1e100"/><rect x="682" y="113" width="9" height="9" fill="#e1e100"/><rect x="690" y="113" width="9" height="9" fill="#e1e100"/><rect x="698" y="113" width="9" height="9" fill="#e1e100"/><rect x="706" y="113" width="9" height="9" fill="#e1e100"/><rect x="714" y="113" width="9" height="9" fill="#e1e100"/><rect x="722" y="113" width="9" height="9" fill="#e1e100"/><rect x="730" y="113" width="9" height="9" fill="#e1e100"/><rect x="738" y="113" width="9" height="9" fill="#e1e100"/><rect x="746" y="113" width="9" height="9" fill="#e1e100"/><rect x="754" y="113" width="9" height="9" fill="#e0e000"/><rect x="762" y="113" width="9" height="9" fill="#e0e000"/><rect x="770" y="113" width="9" height="9" fill="#e0e000"/><rect x="778" y="113" width="9" height="9" fill="#e0e000"/><rect x="786" y="113" width="9" height="9" fill="#dfe000"/><rect x="794" y="113" width="9" height="9" fill="#dfe000"/><rect x="802" y="113" width="9" height="9" fill="#dae000"/><rect x="810" y="113" width="9" height="9" fill="#d4e000"/><rect x="818" y="113" width="9" height="9" fill="#c9e000"/><rect x="826" y="113" width="9" height="9" fill="#bce000"/><rect x="834" y="113" width="9" height="9" fill="#b0e000"/><rect x="842" y="113" width="9" height="9" fill="#a5e000"/><rect x="850" y="113" width="9" height="9" fill="#95e000"/><rect x="858" y="113" width="9" height="9" fill="#87e000"/><rect x="866" y="113" width="9" height="9" fill="#77e000"/><rect x="874" y="113" width="9" height="9" fill="#6de000"/><rect x="882" y="113" width="9" height="9" fill="#5fe000"/><rect x="890" y="113" width="9" height="9" fill="#53e000"/><rect x="314" y="121" width="9" height="9" fill="#86de00"/><rect x="322" y="121" width="9" height="9" fill="#92de00"/><rect x="330" y="121" width="9" height="9" fill="#a0de00"/><rect x="338" y="121" width="9" height="9" fill="#afde00"/><rect x="346" y="121" width="9" height="9" fill="#b8de00"/><rect x="354" y="121" width="9" height="9" fill="#c5de00"/><rect x="362" y="121" width="9" height="9" fill="#cedf00"/><rect x="370" y="121" width="9" height="9" fill="#d7df00"/><rect x="378" y="121" width="9" height="9" fill="#dddf00"/><rect x="386" y="121" width="9" height="9" fill="#dfdf00"/><rect x="394" y="121" width="9" height="9" fill="#dfdf00"/><rect x="402" y="121" width="9" height="9" fill="#e0e000"/><rect x="410" y="121" width="9" height="9" fill="#e0e000"/><rect x="418" y="121" width="9" height="9" fill="#e1e100"/><rect x="426" y="121" width="9" height="9" fill="#e1e100"/><rect x="434" y="121" width="9" height="9" fill="#e1e100"/><rect x="442" y="121" width="9" height="9" fill="#e2e200"/><rect x="450" y="121" width="9" height="9" fill="#e2e200"/><rect x="458" y="121" width="9" height="9" fill="#e2e200"/><rect x="466" y="121" width="9" height="9" fill="#e2e200"/><rect x="474" y="121" width="9" height="9" fill="#e2e200"/><rect x="482" y="121" width="9" height="9" fill="#e2e200"/><rect x="490" y="121" width="9" height="9" fill="#e2e200"/><rect x="498" y="121" width="9" height="9" fill="#e2e200"/><rect x="506" y="121" width="9" height="9" fill="#e2e200"/><rect x="514" y="121" width="9" height="9" fill="#e2e200"/><rect x="522" y="121" width="9" height="9" fill="#e2e200"/><rect x="530" y="121" width="9" height="9" fill="#e2e200"/><rect x="538" y="121" width="9" height="9" fill="#e2e200"/><rect x="546" y="121" width="9" height="9" fill="#e2e200"/><rect x="554" y="121" width="9" height="9" fill="#e2e200"/><rect x="562" y="121" width="9" height="9" fill="#e1e100"/><rect x="570" y="121" width="9" height="9" fill="#e1e100"/><rect x="578" y="121" width="9" height="9" fill="#e1e100"/><rect x="586" y="121" width="9" height="9" fill="#e1e100"/><rect x="594" y="121" width="9" height="9" fill="#e1e100"/><rect x="602" y="121" width="9" height="9" fill="#e1e100"/><rect x="610" y="121" width="9" height="9" fill="#e1e100"/><rect x="618" y="121" width="9" height="9" fill="#e0e000"/><rect x="626" y="121" width="9" height="9" fill="#e0e000"/><rect x="634" y="121" width="9" height="9" fill="#e0e000"/><rect x="642" y="121" width="9" height="9" fill="#e0e000"/><rect x="650" y="121" width="9" height="9" fill="#e0e000"/><rect x="658" y="121" width="9" height="9" fill="#e0e000"/><rect x="666" y="121" width="9" height="9" fill="#e0e000"/><rect x="674" y="121" width="9" height="9" fill="#e0e000"/><rect x="682" y="121" width="9" height="9" fill="#e0e000"/><rect x="690" y="121" width="9" height="9" fill="#e0e000"/><rect x="698" y="121" width="9" height="9" fill="#e0e000"/><rect x="706" y="121" width="9" height="9" fill="#e0e000"/><rect x="714" y="121" width="9" height="9" fill="#e0e000"/><rect x="722" y="121" width="9" height="9" fill="#e0e000"/><rect x="730" y="121" width="9" height="9" fill="#dfe000"/><rect x="738" y="121" width="9" height="9" fill="#dde000"/><rect x="746" y="121" width="9" height="9" fill="#d9e000"/><rect x="754" y="121" width="9" height="9" fill="#d4e000"/><rect x="762" y="121" width="9" height="9" fill="#cee000"/><rect x="770" y="121" width="9" height="9" fill="#c8e000"/><rect x="778" y="121" width="9" height="9" fill="#c1e000"/><rect x="786" y="121" width="9" height="9" fill="#bae000"/><rect x="794" y="121" width="9" height="9" fill="#b3e000"/><rect x="802" y="121" width="9" height="9" fill="#ade000"/><rect x="810" y="121" width="9" height="9" fill="#a7e000"/><rect x="818" y="121" width="9" height="9" fill="#a2e000"/><rect x="826" y="121" width="9" height="9" fill="#9be000"/><rect x="834" y="121" width="9" height="9" fill="#95e000"/><rect x="842" y="121" width="9" height="9" fill="#8fe000"/><rect x="850" y="121" width="9" height="9" fill="#87e000"/><rect x="858" y="121" width="9" height="9" fill="#7ee000"/><rect x="866" y="121" width="9" height="9" fill="#72e000"/><rect x="874" y="121" width="9" height="9" fill="#66e000"/><rect x="882" y="121" width="9" height="9" fill="#5ae000"/><rect x="890" y="121" width="9" height="9" fill="#4fe000"/><rect x="898" y="121" width="9" height="9" fill="#42e000"/><rect x="906" y="121" width="9" height="9" fill="#34e000"/><rect x="914" y="121" width="9" height="9" fill="#28e000"/><rect x="922" y="121" width="9" height="9" fill="#1ae000"/><rect x="930" y="121" width="9" height="9" fill="#0ce000"/><rect x="282" y="129" width="9" height="9" fill="#4ede00"/><rect x="290" y="129" width="9" height="9" fill="#5cde00"/><rect x="298" y="129" width="9" height="9" fill="#69de00"/><rect x="306" y="129" width="9" height="9" fill="#73de00"/><rect x="314" y="129" width="9" height="9" fill="#81de00"/><rect x="322" y="129" width="9" height="9" fill="#8ede00"/><rect x="330" y="129" width="9" height="9" fill="#9ade00"/><rect x="338" y="129" width="9" height="9" fill="#a7df00"/><rect x="346" y="129" width="9" height="9" fill="#aedf00"/><rect x="354" y="129" width="9" height="9" fill="#b3e000"/><rect x="362" y="129" width="9" height="9" fill="#b7e000"/><rect x="370" y="129" width="9" height="9" fill="#b9e100"/><rect x="378" y="129" width="9" height="9" fill="#bae200"/><rect x="386" y="129" width="9" height="9" fill="#bce200"/><rect x="394" y="129" width="9" height="9" fill="#bfe200"/><rect x="402" y="129" width="9" height="9" fill="#c2e300"/><rect x="410" y="129" width="9" height="9" fill="#c6e300"/><rect x="418" y="129" width="9" height="9" fill="#cae300"/><rect x="426" y="129" width="9" height="9" fill="#cfe300"/><rect x="434" y="129" width="9" height="9" fill="#d3e300"/><rect x="442" y="129" width="9" height="9" fill="#d7e300"/><rect x="450" y="129" width="9" height="9" fill="#dbe200"/><rect x="458" y="129" width="9" height="9" fill="#dee200"/><rect x="466" y="129" width="9" height="9" fill="#e0e200"/><rect x="474" y="129" width="9" height="9" fill="#e2e200"/><rect x="482" y="129" width="9" height="9" fill="#e2e200"/><rect x="490" y="129" width="9" height="9" fill="#e2e200"/><rect x="498" y="129" width="9" height="9" fill="#e1e100"/><rect x="506" y="129" width="9" height="9" fill="#e1e100"/><rect x="514" y="129" width="9" height="9" fill="#e1e100"/><rect x="522" y="129" width="9" height="9" fill="#e1e100"/><rect x="530" y="129" width="9" height="9" fill="#e1e100"/><rect x="538" y="129" width="9" height="9" fill="#e0e000"/><rect x="546" y="129" width="9" height="9" fill="#e0e000"/><rect x="554" y="129" width="9" height="9" fill="#e0e000"/><rect x="562" y="129" width="9" height="9" fill="#e0e000"/><rect x="570" y="129" width="9" height="9" fill="#dfdf00"/><rect x="578" y="129" width="9" height="9" fill="#dfdf00"/><rect x="586" y="129" width="9" height="9" fill="#dfdf00"/><rect x="594" y="129" width="9" height="9" fill="#dfdf00"/><rect x="602" y="129" width="9" height="9" fill="#dfdf00"/><rect x="610" y="129" width="9" height="9" fill="#dede00"/><rect x="618" y="129" width="9" height="9" fill="#dede00"/><rect x="626" y="129" width="9" height="9" fill="#dede00"/><rect x="634" y="129" width="9" height="9" fill="#dede00"/><rect x="642" y="129" width="9" height="9" fill="#dede00"/><rect x="650" y="129" width="9" height="9" fill="#dede00"/><rect x="658" y="129" width="9" height="9" fill="#dede00"/><rect x="666" y="129" width="9" height="9" fill="#dede00"/><rect x="674" y="129" width="9" height="9" fill="#dddd00"/><rect x="682" y="129" width="9" height="9" fill="#dddd00"/><rect x="690" y="129" width="9" height="9" fill="#dddd00"/><rect x="698" y="129" width="9" height="9" fill="#dddd00"/><rect x="706" y="129" width="9" height="9" fill="#dcdd00"/><rect x="714" y="129" width="9" height="9" fill="#d9dd00"/><rect x="722" y="129" width="9" height="9" fill="#d3dd00"/><rect x="730" y="129" width="9" height="9" fill="#cddd00"/><rect x="738" y="129" width="9" height="9" fill="#c6dd00"/><rect x="746" y="129" width="9" height="9" fill="#bfdd00"/><rect x="754" y="129" width="9" height="9" fill="#b8dd00"/><rect x="762" y="129" width="9" height="9" fill="#b0dd00"/><rect x="770" y="129" width="9" height="9" fill="#a8dd00"/><rect x="778" y="129" width="9" height="9" fill="#9fde00"/><rect x="786" y="129" width="9" height="9" fill="#96de00"/><rect x="794" y="129" width="9" height="9" fill="#8cde00"/><rect x="802" y="129" width="9" height="9" fill="#83de00"/><rect x="810" y="129" width="9" height="9" fill="#7ade00"/><rect x="818" y="129" width="9" height="9" fill="#71de00"/><rect x="826" y="129" width="9" height="9" fill="#69df00"/><rect x="834" y="129" width="9" height="9" fill="#62df00"/><rect x="842" y="129" width="9" height="9" fill="#5adf00"/><rect x="850" y="129" width="9" height="9" fill="#53df00"/><rect x="858" y="129" width="9" height="9" fill="#4ce000"/><rect x="866" y="129" width="9" height="9" fill="#46e000"/><rect x="874" y="129" width="9" height="9" fill="#42e000"/><rect x="882" y="129" width="9" height="9" fill="#3ee000"/><rect x="890" y="129" width="9" height="9" fill="#39e000"/><rect x="898" y="129" width="9" height="9" fill="#34e000"/><rect x="906" y="129" width="9" height="9" fill="#2ce000"/><rect x="914" y="129" width="9" height="9" fill="#22e000"/><rect x="922" y="129" width="9" height="9" fill="#15e000"/><rect x="930" y="129" width="9" height="9" fill="#09e000"/><rect x="938" y="129" width="9" height="9" fill="#00e003"/><rect x="946" y="129" width="9" height="9" fill="#00e00b"/><rect x="954" y="129" width="9" height="9" fill="#00e11c"/><rect x="962" y="129" width="9" height="9" fill="#00e12a"/><rect x="258" y="137" width="9" height="9" fill="#28dd00"/><rect x="266" y="137" width="9" height="9" fill="#31de00"/><rect x="274" y="137" width="9" height="9" fill="#40dd00"/><rect x="282" y="137" width="9" height="9" fill="#4bde00"/><rect x="290" y="137" width="9" height="9" fill="#57de00"/><rect x="298" y="137" width="9" height="9" fill="#64de00"/><rect x="306" y="137" width="9" height="9" fill="#6adf00"/><rect x="314" y="137" width="9" height="9" fill="#6fdf00"/><rect x="322" y="137" width="9" height="9" fill="#71e000"/><rect x="330" y="137" width="9" height="9" fill="#73e100"/><rect x="338" y="137" width="9" height="9" fill="#73e200"/><rect x="346" y="137" width="9" height="9" fill="#75e200"/><rect x="354" y="137" width="9" height="9" fill="#79e300"/><rect x="362" y="137" width="9" height="9" fill="#7ee300"/><rect x="370" y="137" width="9" height="9" fill="#83e300"/><rect x="378" y="137" width="9" height="9" fill="#8ae300"/><rect x="386" y="137" width="9" height="9" fill="#90e300"/><rect x="394" y="137" width="9" height="9" fill="#98e300"/><rect x="402" y="137" width="9" height="9" fill="#9fe300"/><rect x="410" y="137" width="9" height="9" fill="#a6e200"/><rect x="418" y="137" width="9" height="9" fill="#ace200"/><rect x="426" y="137" width="9" height="9" fill="#b3e200"/><rect x="434" y="137" width="9" height="9" fill="#b9e200"/><rect x="442" y="137" width="9" height="9" fill="#bfe100"/><rect x="450" y="137" width="9" height="9" fill="#c4e100"/><rect x="458" y="137" width="9" height="9" fill="#c9e100"/><rect x="466" y="137" width="9" height="9" fill="#cee100"/><rect x="474" y="137" width="9" height="9" fill="#d3e000"/><rect x="482" y="137" width="9" height="9" fill="#d8e000"/><rect x="490" y="137" width="9" height="9" fill="#dce000"/><rect x="498" y="137" width="9" height="9" fill="#dedf00"/><rect x="506" y="137" width="9" height="9" fill="#dfdf00"/><rect x="514" y="137" width="9" height="9" fill="#dfdf00"/><rect x="522" y="137" width="9" height="9" fill="#dede00"/><rect x="530" y="137" width="9" height="9" fill="#dede00"/><rect x="538" y="137" width="9" height="9" fill="#dede00"/><rect x="546" y="137" width="9" height="9" fill="#dede00"/><rect x="554" y="137" width="9" height="9" fill="#dddd00"/><rect x="562" y="137" width="9" height="9" fill="#dddd00"/><rect x="570" y="137" width="9" height="9" fill="#dddd00"/><rect x="578" y="137" width="9" height="9" fill="#dddd00"/><rect x="586" y="137" width="9" height="9" fill="#dcdc00"/><rect x="594" y="137" width="9" height="9" fill="#dcdc00"/><rect x="602" y="137" width="9" height="9" fill="#dcdc00"/><rect x="610" y="137" width="9" height="9" fill="#dcdc00"/><rect x="618" y="137" width="9" height="9" fill="#dcdc00"/><rect x="626" y="137" width="9" height="9" fill="#dbdb00"/><rect x="634" y="137" width="9" height="9" fill="#dbdb00"/><rect x="642" y="137" width="9" height="9" fill="#dbdb00"/><rect x="650" y="137" width="9" height="9" fill="#dbdb00"/><rect x="658" y="137" width="9" height="9" fill="#dbdb00"/><rect x="666" y="137" width="9" height="9" fill="#dbdb00"/><rect x="674" y="137" width="9" height="9" fill="#dada00"/><rect x="682" y="137" width="9" height="9" fill="#dada00"/><rect x="690" y="137" width="9" height="9" fill="#d8da00"/><rect x="698" y="137" width="9" height="9" fill="#d3da00"/><rect x="706" y="137" width="9" height="9" fill="#cdda00"/><rect x="714" y="137" width="9" height="9" fill="#c7da00"/><rect x="722" y="137" width="9" height="9" fill="#c1da00"/><rect x="730" y="137" width="9" height="9" fill="#bbda00"/><rect x="738" y="137" width="9" height="9" fill="#b4da00"/><rect x="746" y="137" width="9" height="9" fill="#acda00"/><rect x="754" y="137" width="9" height="9" fill="#a4da00"/><rect x="762" y="137" width="9" height="9" fill="#9bda00"/><rect x="770" y="137" width="9" height="9" fill="#91db00"/><rect x="778" y="137" width="9" height="9" fill="#87db00"/><rect x="786" y="137" width="9" height="9" fill="#7ddb00"/><rect x="794" y="137" width="9" height="9" fill="#74db00"/><rect x="802" y="137" width="9" height="9" fill="#6bdb00"/><rect x="810" y="137" width="9" height="9" fill="#63db00"/><rect x="818" y="137" width="9" height="9" fill="#5adc00"/><rect x="826" y="137" width="9" height="9" fill="#50dc00"/><rect x="834" y="137" width="9" height="9" fill="#47dc00"/><rect x="842" y="137" width="9" height="9" fill="#3edc00"/><rect x="850" y="137" width="9" height="9" fill="#35dd00"/><rect x="858" y="137" width="9" height="9" fill="#2cdd00"/><rect x="866" y="137" width="9" height="9" fill="#23dd00"/><rect x="874" y="137" width="9" height="9" fill="#1bde00"/><rect x="882" y="137" width="9" height="9" fill="#13de00"/><rect x="890" y="137" width="9" height="9" fill="#0cdf00"/><rect x="898" y="137" width="9" height="9" fill="#07df02"/><rect x="906" y="137" width="9" height="9" fill="#05e004"/><rect x="914" y="137" width="9" height="9" fill="#05e007"/><rect x="922" y="137" width="9" height="9" fill="#04e00a"/><rect x="930" y="137" width="9" height="9" fill="#02e00a"/><rect x="938" y="137" width="9" height="9" fill="#00e10c"/><rect x="946" y="137" width="9" height="9" fill="#00e011"/><rect x="954" y="137" width="9" height="9" fill="#00e122"/><rect x="962" y="137" width="9" height="9" fill="#00e12f"/><rect x="970" y="137" width="9" height="9" fill="#00e13e"/><rect x="978" y="137" width="9" height="9" fill="#00e14c"/><rect x="986" y="137" width="9" height="9" fill="#00e15b"/><rect x="234" y="145" width="9" height="9" fill="#02dd01"/><rect x="242" y="145" width="9" height="9" fill="#0bdd00"/><rect x="250" y="145" width="9" height="9" fill="#14dd00"/><rect x="258" y="145" width="9" height="9" fill="#24dd00"/><rect x="266" y="145" width="9" height="9" fill="#2dde00"/><rect x="274" y="145" width="9" height="9" fill="#34de00"/><rect x="282" y="145" width="9" height="9" fill="#37df00"/><rect x="290" y="145" width="9" height="9" fill="#38e000"/><rect x="298" y="145" width="9" height="9" fill="#37e100"/><rect x="306" y="145" width="9" height="9" fill="#38e200"/><rect x="314" y="145" width="9" height="9" fill="#3be300"/><rect x="322" y="145" width="9" height="9" fill="#40e300"/><rect x="330" y="145" width="9" height="9" fill="#45e300"/><rect x="338" y="145" width="9" height="9" fill="#4be300"/><rect x="346" y="145" width="9" height="9" fill="#52e300"/><rect x="354" y="145" width="9" height="9" fill="#59e300"/><rect x="362" y="145" width="9" height="9" fill="#60e200"/><rect x="370" y="145" width="9" height="9" fill="#67e200"/><rect x="378" y="145" width="9" height="9" fill="#6fe200"/><rect x="386" y="145" width="9" height="9" fill="#76e200"/><rect x="394" y="145" width="9" height="9" fill="#7de100"/><rect x="402" y="145" width="9" height="9" fill="#85e100"/><rect x="410" y="145" width="9" height="9" fill="#8ee100"/><rect x="418" y="145" width="9" height="9" fill="#96e000"/><rect x="426" y="145" width="9" height="9" fill="#9ee000"/><rect x="434" y="145" width="9" height="9" fill="#a5e000"/><rect x="442" y="145" width="9" height="9" fill="#acdf00"/><rect x="450" y="145" width="9" height="9" fill="#b3df00"/><rect x="458" y="145" width="9" height="9" fill="#b9df00"/><rect x="466" y="145" width="9" height="9" fill="#bfde00"/><rect x="474" y="145" width="9" height="9" fill="#c4de00"/><rect x="482" y="145" width="9" height="9" fill="#c9dd00"/><rect x="490" y="145" width="9" height="9" fill="#cddd00"/><rect x="498" y="145" width="9" height="9" fill="#d1dd00"/><rect x="506" y="145" width="9" height="9" fill="#d6dc00"/><rect x="514" y="145" width="9" height="9" fill="#dadc00"/><rect x="522" y="145" width="9" height="9" fill="#dbdc00"/><rect x="530" y="145" width="9" height="9" fill="#dbdb00"/><rect x="538" y="145" width="9" height="9" fill="#dbdb00"/><rect x="546" y="145" width="9" height="9" fill="#dbdb00"/><rect x="554" y="145" width="9" height="9" fill="#dada00"/><rect x="562" y="145" width="9" height="9" fill="#dada00"/><rect x="570" y="145" width="9" height="9" fill="#dada00"/><rect x="578" y="145" width="9" height="9" fill="#d9d900"/><rect x="586" y="145" width="9" height="9" fill="#d9d900"/><rect x="594" y="145" width="9" height="9" fill="#d9d900"/><rect x="602" y="145" width="9" height="9" fill="#d9d900"/><rect x="610" y="145" width="9" height="9" fill="#d8d800"/><rect x="618" y="145" width="9" height="9" fill="#d8d800"/><rect x="626" y="145" width="9" height="9" fill="#d8d800"/><rect x="634" y="145" width="9" height="9" fill="#d8d800"/><rect x="642" y="145" width="9" height="9" fill="#d8d800"/><rect x="650" y="145" width="9" height="9" fill="#d8d800"/><rect x="658" y="145" width="9" height="9" fill="#d7d700"/><rect x="666" y="145" width="9" height="9" fill="#d7d700"/><rect x="674" y="145" width="9" height="9" fill="#d6d700"/><rect x="682" y="145" width="9" height="9" fill="#d2d700"/><rect x="690" y="145" width="9" height="9" fill="#ccd700"/><rect x="698" y="145" width="9" height="9" fill="#c7d700"/><rect x="706" y="145" width="9" height="9" fill="#c1d700"/><rect x="714" y="145" width="9" height="9" fill="#bbd700"/><rect x="722" y="145" width="9" height="9" fill="#b5d700"/><rect x="730" y="145" width="9" height="9" fill="#aed700"/><rect x="738" y="145" width="9" height="9" fill="#a6d700"/><rect x="746" y="145" width="9" height="9" fill="#9ed700"/><rect x="754" y="145" width="9" height="9" fill="#95d700"/><rect x="762" y="145" width="9" height="9" fill="#8bd700"/><rect x="770" y="145" width="9" height="9" fill="#81d700"/><rect x="778" y="145" width="9" height="9" fill="#77d700"/><rect x="786" y="145" width="9" height="9" fill="#6ed800"/><rect x="794" y="145" width="9" height="9" fill="#65d800"/><rect x="802" y="145" width="9" height="9" fill="#5cd800"/><rect x="810" y="145" width="9" height="9" fill="#53d800"/><rect x="818" y="145" width="9" height="9" fill="#49d800"/><rect x="826" y="145" width="9" height="9" fill="#3fd900"/><rect x="834" y="145" width="9" height="9" fill="#35d900"/><rect x="842" y="145" width="9" height="9" fill="#2cd900"/><rect x="850" y="145" width="9" height="9" fill="#22da00"/><rect x="858" y="145" width="9" height="9" fill="#18da00"/><rect x="866" y="145" width="9" height="9" fill="#0fda00"/><rect x="874" y="145" width="9" height="9" fill="#06db00"/><rect x="882" y="145" width="9" height="9" fill="#01db04"/><rect x="890" y="145" width="9" height="9" fill="#00dc0a"/><rect x="898" y="145" width="9" height="9" fill="#00dc13"/><rect x="906" y="145" width="9" height="9" fill="#00dd1b"/><rect x="914" y="145" width="9" height="9" fill="#00dd24"/><rect x="922" y="145" width="9" height="9" fill="#00de2c"/><rect x="930" y="145" width="9" height="9" fill="#00df34"/><rect x="938" y="145" width="9" height="9" fill="#00df3a"/><rect x="946" y="145" width="9" height="9" fill="#00e03e"/><rect x="954" y="145" width="9" height="9" fill="#00e040"/><rect x="962" y="145" width="9" height="9" fill="#00e142"/><rect x="970" y="145" width="9" height="9" fill="#00e147"/><rect x="978" y="145" width="9" height="9" fill="#00e154"/><rect x="986" y="145" width="9" height="9" fill="#00e15d"/><rect x="994" y="145" width="9" height="9" fill="#00e173"/><rect x="1002" y="145" width="9" height="9" fill="#00e185"/><rect x="1010" y="145" width="9" height="9" fill="#00e193"/><rect x="210" y="153" width="9" height="9" fill="#00dc28"/><rect x="218" y="153" width="9" height="9" fill="#00dd1d"/><rect x="226" y="153" width="9" height="9" fill="#00dd13"/><rect x="234" y="153" width="9" height="9" fill="#00dc03"/><rect x="242" y="153" width="9" height="9" fill="#07dd01"/><rect x="250" y="153" width="9" height="9" fill="#09de03"/><rect x="258" y="153" width="9" height="9" fill="#0cdf04"/><rect x="266" y="153" width="9" height="9" fill="#09e104"/><rect x="274" y="153" width="9" height="9" fill="#07e203"/><rect x="282" y="153" width="9" height="9" fill="#07e202"/><rect x="290" y="153" width="9" height="9" fill="#0ae300"/><rect x="298" y="153" width="9" height="9" fill="#0fe300"/><rect x="306" y="153" width="9" height="9" fill="#15e300"/><rect x="314" y="153" width="9" height="9" fill="#1ce300"/><rect x="322" y="153" width="9" height="9" fill="#23e300"/><rect x="330" y="153" width="9" height="9" fill="#2be200"/><rect x="338" y="153" width="9" height="9" fill="#33e200"/><rect x="346" y="153" width="9" height="9" fill="#3be200"/><rect x="354" y="153" width="9" height="9" fill="#44e100"/><rect x="362" y="153" width="9" height="9" fill="#4ce100"/><rect x="370" y="153" width="9" height="9" fill="#55e100"/><rect x="378" y="153" width="9" height="9" fill="#5de000"/><rect x="386" y="153" width="9" height="9" fill="#65e000"/><rect x="394" y="153" width="9" height="9" fill="#6ddf00"/><rect x="402" y="153" width="9" height="9" fill="#75df00"/><rect x="410" y="153" width="9" height="9" fill="#7ddf00"/><rect x="418" y="153" width="9" height="9" fill="#85de00"/><rect x="426" y="153" width="9" height="9" fill="#8ede00"/><rect x="434" y="153" width="9" height="9" fill="#97dd00"/><rect x="442" y="153" width="9" height="9" fill="#9fdd00"/><rect x="450" y="153" width="9" height="9" fill="#a6dc00"/><rect x="458" y="153" width="9" height="9" fill="#addc00"/><rect x="466" y="153" width="9" height="9" fill="#b3db00"/><rect x="474" y="153" width="9" height="9" fill="#b9db00"/><rect x="482" y="153" width="9" height="9" fill="#beda00"/><rect x="490" y="153" width="9" height="9" fill="#c3da00"/><rect x="498" y="153" width="9" height="9" fill="#c8da00"/><rect x="506" y="153" width="9" height="9" fill="#ccd900"/><rect x="514" y="153" width="9" height="9" fill="#d0d900"/><rect x="522" y="153" width="9" height="9" fill="#d4d800"/><rect x="530" y="153" width="9" height="9" fill="#d7d800"/><rect x="538" y="153" width="9" height="9" fill="#d8d800"/><rect x="546" y="153" width="9" height="9" fill="#d7d700"/><rect x="554" y="153" width="9" height="9" fill="#d7d700"/><rect x="562" y="153" width="9" height="9" fill="#d7d700"/><rect x="570" y="153" width="9" height="9" fill="#d6d600"/><rect x="578" y="153" width="9" height="9" fill="#d6d600"/><rect x="586" y="153" width="9" height="9" fill="#d6d600"/><rect x="594" y="153" width="9" height="9" fill="#d5d500"/><rect x="602" y="153" width="9" height="9" fill="#d5d500"/><rect x="610" y="153" width="9" height="9" fill="#d5d500"/><rect x="618" y="153" width="9" height="9" fill="#d5d500"/><rect x="626" y="153" width="9" height="9" fill="#d4d400"/><rect x="634" y="153" width="9" height="9" fill="#d4d400"/><rect x="642" y="153" width="9" height="9" fill="#d4d400"/><rect x="650" y="153" width="9" height="9" fill="#d4d400"/><rect x="658" y="153" width="9" height="9" fill="#d4d400"/><rect x="666" y="153" width="9" height="9" fill="#d3d400"/><rect x="674" y="153" width="9" height="9" fill="#cfd300"/><rect x="682" y="153" width="9" height="9" fill="#cad300"/><rect x="690" y="153" width="9" height="9" fill="#c4d300"/><rect x="698" y="153" width="9" height="9" fill="#bfd300"/><rect x="706" y="153" width="9" height="9" fill="#bad300"/><rect x="714" y="153" width="9" height="9" fill="#b3d300"/><rect x="722" y="153" width="9" height="9" fill="#acd300"/><rect x="730" y="153" width="9" height="9" fill="#a5d300"/><rect x="738" y="153" width="9" height="9" fill="#9dd300"/><rect x="746" y="153" width="9" height="9" fill="#94d300"/><rect x="754" y="153" width="9" height="9" fill="#8bd300"/><rect x="762" y="153" width="9" height="9" fill="#81d400"/><rect x="770" y="153" width="9" height="9" fill="#76d400"/><rect x="778" y="153" width="9" height="9" fill="#6ed400"/><rect x="786" y="153" width="9" height="9" fill="#65d400"/><rect x="794" y="153" width="9" height="9" fill="#5bd400"/><rect x="802" y="153" width="9" height="9" fill="#52d400"/><rect x="810" y="153" width="9" height="9" fill="#48d500"/><rect x="818" y="153" width="9" height="9" fill="#3ed500"/><rect x="826" y="153" width="9" height="9" fill="#34d500"/><rect x="834" y="153" width="9" height="9" fill="#29d600"/><rect x="842" y="153" width="9" height="9" fill="#1fd600"/><rect x="850" y="153" width="9" height="9" fill="#15d600"/><rect x="858" y="153" width="9" height="9" fill="#0bd700"/><rect x="866" y="153" width="9" height="9" fill="#03d701"/><rect x="874" y="153" width="9" height="9" fill="#00d807"/><rect x="882" y="153" width="9" height="9" fill="#00d810"/><rect x="890" y="153" width="9" height="9" fill="#00d91a"/><rect x="898" y="153" width="9" height="9" fill="#00d924"/><rect x="906" y="153" width="9" height="9" fill="#00da2f"/><rect x="914" y="153" width="9" height="9" fill="#00da3a"/><rect x="922" y="153" width="9" height="9" fill="#00db45"/><rect x="930" y="153" width="9" height="9" fill="#00dc50"/><rect x="938" y="153" width="9" height="9" fill="#00dd5b"/><rect x="946" y="153" width="9" height="9" fill="#00dd66"/><rect x="954" y="153" width="9" height="9" fill="#00de70"/><rect x="962" y="153" width="9" height="9" fill="#00df78"/><rect x="970" y="153" width="9" height="9" fill="#00e07d"/><rect x="978" y="153" width="9" height="9" fill="#00e07e"/><rect x="986" y="153" width="9" height="9" fill="#00e17a"/><rect x="994" y="153" width="9" height="9" fill="#00e182"/><rect x="1002" y="153" width="9" height="9" fill="#00e189"/><rect x="1010" y="153" width="9" height="9" fill="#00e19b"/><rect x="1018" y="153" width="9" height="9" fill="#00e1a4"/><rect x="1026" y="153" width="9" height="9" fill="#00e1ac"/><rect x="194" y="161" width="9" height="9" fill="#00dc4d"/><rect x="202" y="161" width="9" height="9" fill="#00dc3c"/><rect x="210" y="161" width="9" height="9" fill="#00dc2c"/><rect x="218" y="161" width="9" height="9" fill="#00dd25"/><rect x="226" y="161" width="9" height="9" fill="#00de22"/><rect x="234" y="161" width="9" height="9" fill="#00df23"/><rect x="242" y="161" width="9" height="9" fill="#00e128"/><rect x="250" y="161" width="9" height="9" fill="#00e229"/><rect x="258" y="161" width="9" height="9" fill="#00e226"/><rect x="266" y="161" width="9" height="9" fill="#00e322"/><rect x="274" y="161" width="9" height="9" fill="#00e31c"/><rect x="282" y="161" width="9" height="9" fill="#00e315"/><rect x="290" y="161" width="9" height="9" fill="#00e20e"/><rect x="298" y="161" width="9" height="9" fill="#00e207"/><rect x="306" y="161" width="9" height="9" fill="#02e202"/><rect x="314" y="161" width="9" height="9" fill="#08e200"/><rect x="322" y="161" width="9" height="9" fill="#10e100"/><rect x="330" y="161" width="9" height="9" fill="#19e100"/><rect x="338" y="161" width="9" height="9" fill="#22e000"/><rect x="346" y="161" width="9" height="9" fill="#2be000"/><rect x="354" y="161" width="9" height="9" fill="#35df00"/><rect x="362" y="161" width="9" height="9" fill="#3edf00"/><rect x="370" y="161" width="9" height="9" fill="#47de00"/><rect x="378" y="161" width="9" height="9" fill="#50de00"/><rect x="386" y="161" width="9" height="9" fill="#59dd00"/><rect x="394" y="161" width="9" height="9" fill="#62dd00"/><rect x="402" y="161" width="9" height="9" fill="#6adc00"/><rect x="410" y="161" width="9" height="9" fill="#72dc00"/><rect x="418" y="161" width="9" height="9" fill="#7adb00"/><rect x="426" y="161" width="9" height="9" fill="#84db00"/><rect x="434" y="161" width="9" height="9" fill="#8dda00"/><rect x="442" y="161" width="9" height="9" fill="#96da00"/><rect x="450" y="161" width="9" height="9" fill="#9ed900"/><rect x="458" y="161" width="9" height="9" fill="#a5d900"/><rect x="466" y="161" width="9" height="9" fill="#acd800"/><rect x="474" y="161" width="9" height="9" fill="#b2d800"/><rect x="482" y="161" width="9" height="9" fill="#b8d700"/><rect x="490" y="161" width="9" height="9" fill="#bdd600"/><rect x="498" y="161" width="9" height="9" fill="#c2d600"/><rect x="506" y="161" width="9" height="9" fill="#c6d600"/><rect x="514" y="161" width="9" height="9" fill="#cbd500"/><rect x="522" y="161" width="9" height="9" fill="#cfd500"/><rect x="530" y="161" width="9" height="9" fill="#d3d400"/><rect x="538" y="161" width="9" height="9" fill="#d4d400"/><rect x="546" y="161" width="9" height="9" fill="#d3d300"/><rect x="554" y="161" width="9" height="9" fill="#d3d300"/><rect x="562" y="161" width="9" height="9" fill="#d3d300"/><rect x="570" y="161" width="9" height="9" fill="#d2d200"/><rect x="578" y="161" width="9" height="9" fill="#d2d200"/><rect x="586" y="161" width="9" height="9" fill="#d2d200"/><rect x="594" y="161" width="9" height="9" fill="#d1d100"/><rect x="602" y="161" width="9" height="9" fill="#d1d100"/><rect x="610" y="161" width="9" height="9" fill="#d1d100"/><rect x="618" y="161" width="9" height="9" fill="#d1d100"/><rect x="626" y="161" width="9" height="9" fill="#d0d000"/><rect x="634" y="161" width="9" height="9" fill="#d0d000"/><rect x="642" y="161" width="9" height="9" fill="#d0d000"/><rect x="650" y="161" width="9" height="9" fill="#d0d000"/><rect x="658" y="161" width="9" height="9" fill="#d0d000"/><rect x="666" y="161" width="9" height="9" fill="#cfd000"/><rect x="674" y="161" width="9" height="9" fill="#cbcf00"/><rect x="682" y="161" width="9" height="9" fill="#c6cf00"/><rect x="690" y="161" width="9" height="9" fill="#c0cf00"/><rect x="698" y="161" width="9" height="9" fill="#bbcf00"/><rect x="706" y="161" width="9" height="9" fill="#b5cf00"/><rect x="714" y="161" width="9" height="9" fill="#afcf00"/><rect x="722" y="161" width="9" height="9" fill="#a8cf00"/><rect x="730" y="161" width="9" height="9" fill="#a0cf00"/><rect x="738" y="161" width="9" height="9" fill="#98cf00"/><rect x="746" y="161" width="9" height="9" fill="#8fd000"/><rect x="754" y="161" width="9" height="9" fill="#85d000"/><rect x="762" y="161" width="9" height="9" fill="#7bd000"/><rect x="770" y="161" width="9" height="9" fill="#71d000"/><rect x="778" y="161" width="9" height="9" fill="#68d000"/><rect x="786" y="161" width="9" height="9" fill="#5fd000"/><rect x="794" y="161" width="9" height="9" fill="#55d000"/><rect x="802" y="161" width="9" height="9" fill="#4bd100"/><rect x="810" y="161" width="9" height="9" fill="#41d100"/><rect x="818" y="161" width="9" height="9" fill="#37d100"/><rect x="826" y="161" width="9" height="9" fill="#2cd200"/><rect x="834" y="161" width="9" height="9" fill="#21d200"/><rect x="842" y="161" width="9" height="9" fill="#17d200"/><rect x="850" y="161" width="9" height="9" fill="#0dd300"/><rect x="858" y="161" width="9" height="9" fill="#03d300"/><rect x="866" y="161" width="9" height="9" fill="#00d406"/><rect x="874" y="161" width="9" height="9" fill="#00d410"/><rect x="882" y="161" width="9" height="9" fill="#00d51a"/><rect x="890" y="161" width="9" height="9" fill="#00d525"/><rect x="898" y="161" width="9" height="9" fill="#00d631"/><rect x="906" y="161" width="9" height="9" fill="#00d63d"/><rect x="914" y="161" width="9" height="9" fill="#00d74a"/><rect x="922" y="161" width="9" height="9" fill="#00d858"/><rect x="930" y="161" width="9" height="9" fill="#00d965"/><rect x="938" y="161" width="9" height="9" fill="#00d973"/><rect x="946" y="161" width="9" height="9" fill="#00da80"/><rect x="954" y="161" width="9" height="9" fill="#00db8d"/><rect x="962" y="161" width="9" height="9" fill="#00dc96"/><rect x="970" y="161" width="9" height="9" fill="#00dd9e"/><rect x="978" y="161" width="9" height="9" fill="#00dea3"/><rect x="986" y="161" width="9" height="9" fill="#00dfa8"/><rect x="994" y="161" width="9" height="9" fill="#00e0aa"/><rect x="1002" y="161" width="9" height="9" fill="#00e1a9"/><rect x="1010" y="161" width="9" height="9" fill="#00e1a7"/><rect x="1018" y="161" width="9" height="9" fill="#00e1a9"/><rect x="1026" y="161" width="9" height="9" fill="#00e1af"/><rect x="1034" y="161" width="9" height="9" fill="#00e1bb"/><rect x="1042" y="161" width="9" height="9" fill="#00e1c4"/><rect x="178" y="169" width="9" height="9" fill="#00db74"/><rect x="186" y="169" width="9" height="9" fill="#00db61"/><rect x="194" y="169" width="9" height="9" fill="#00dc56"/><rect x="202" y="169" width="9" height="9" fill="#00dd4b"/><rect x="210" y="169" width="9" height="9" fill="#00de4c"/><rect x="218" y="169" width="9" height="9" fill="#00e057"/><rect x="226" y="169" width="9" height="9" fill="#00e15c"/><rect x="234" y="169" width="9" height="9" fill="#00e25b"/><rect x="242" y="169" width="9" height="9" fill="#00e256"/><rect x="250" y="169" width="9" height="9" fill="#00e24f"/><rect x="258" y="169" width="9" height="9" fill="#00e246"/><rect x="266" y="169" width="9" height="9" fill="#00e23d"/><rect x="274" y="169" width="9" height="9" fill="#00e234"/><rect x="282" y="169" width="9" height="9" fill="#00e22a"/><rect x="290" y="169" width="9" height="9" fill="#00e120"/><rect x="298" y="169" width="9" height="9" fill="#00e117"/><rect x="306" y="169" width="9" height="9" fill="#00e00e"/><rect x="314" y="169" width="9" height="9" fill="#00e005"/><rect x="322" y="169" width="9" height="9" fill="#04df00"/><rect x="330" y="169" width="9" height="9" fill="#0ddf00"/><rect x="338" y="169" width="9" height="9" fill="#16de00"/><rect x="346" y="169" width="9" height="9" fill="#20de00"/><rect x="354" y="169" width="9" height="9" fill="#2add00"/><rect x="362" y="169" width="9" height="9" fill="#34dc00"/><rect x="370" y="169" width="9" height="9" fill="#3edc00"/><rect x="378" y="169" width="9" height="9" fill="#48db00"/><rect x="386" y="169" width="9" height="9" fill="#51db00"/><rect x="394" y="169" width="9" height="9" fill="#5bda00"/><rect x="402" y="169" width="9" height="9" fill="#64d900"/><rect x="410" y="169" width="9" height="9" fill="#6cd900"/><rect x="418" y="169" width="9" height="9" fill="#75d800"/><rect x="426" y="169" width="9" height="9" fill="#7ed700"/><rect x="434" y="169" width="9" height="9" fill="#87d700"/><rect x="442" y="169" width="9" height="9" fill="#91d600"/><rect x="450" y="169" width="9" height="9" fill="#99d500"/><rect x="458" y="169" width="9" height="9" fill="#a1d500"/><rect x="466" y="169" width="9" height="9" fill="#a8d400"/><rect x="474" y="169" width="9" height="9" fill="#afd400"/><rect x="482" y="169" width="9" height="9" fill="#b5d300"/><rect x="490" y="169" width="9" height="9" fill="#bbd200"/><rect x="498" y="169" width="9" height="9" fill="#c0d200"/><rect x="506" y="169" width="9" height="9" fill="#c4d100"/><rect x="514" y="169" width="9" height="9" fill="#c9d100"/><rect x="522" y="169" width="9" height="9" fill="#ced000"/><rect x="530" y="169" width="9" height="9" fill="#d0d000"/><rect x="538" y="169" width="9" height="9" fill="#cfcf00"/><rect x="546" y="169" width="9" height="9" fill="#cfcf00"/><rect x="554" y="169" width="9" height="9" fill="#cfcf00"/><rect x="562" y="169" width="9" height="9" fill="#cece00"/><rect x="570" y="169" width="9" height="9" fill="#cece00"/><rect x="578" y="169" width="9" height="9" fill="#cdcd00"/><rect x="586" y="169" width="9" height="9" fill="#cdcd00"/><rect x="594" y="169" width="9" height="9" fill="#cdcd00"/><rect x="602" y="169" width="9" height="9" fill="#cdcd00"/><rect x="610" y="169" width="9" height="9" fill="#cccc00"/><rect x="618" y="169" width="9" height="9" fill="#cccc00"/><rect x="626" y="169" width="9" height="9" fill="#cccc00"/><rect x="634" y="169" width="9" height="9" fill="#cccc00"/><rect x="642" y="169" width="9" height="9" fill="#cbcb00"/><rect x="650" y="169" width="9" height="9" fill="#cbcb00"/><rect x="658" y="169" width="9" height="9" fill="#cbcb00"/><rect x="666" y="169" width="9" height="9" fill="#cbcb00"/><rect x="674" y="169" width="9" height="9" fill="#cacb00"/><rect x="682" y="169" width="9" height="9" fill="#c6cb00"/><rect x="690" y="169" width="9" height="9" fill="#c0cb00"/><rect x="698" y="169" width="9" height="9" fill="#bbcb00"/><rect x="706" y="169" width="9" height="9" fill="#b5cb00"/><rect x="714" y="169" width="9" height="9" fill="#aecb00"/><rect x="722" y="169" width="9" height="9" fill="#a7cb00"/><rect x="730" y="169" width="9" height="9" fill="#9fcb00"/><rect x="738" y="169" width="9" height="9" fill="#97cb00"/><rect x="746" y="169" width="9" height="9" fill="#8ecb00"/><rect x="754" y="169" width="9" height="9" fill="#84cc00"/><rect x="762" y="169" width="9" height="9" fill="#79cc00"/><rect x="770" y="169" width="9" height="9" fill="#6fcc00"/><rect x="778" y="169" width="9" height="9" fill="#66cc00"/><rect x="786" y="169" width="9" height="9" fill="#5ccc00"/><rect x="794" y="169" width="9" height="9" fill="#52cd00"/><rect x="802" y="169" width="9" height="9" fill="#48cd00"/><rect x="810" y="169" width="9" height="9" fill="#3dcd00"/><rect x="818" y="169" width="9" height="9" fill="#33cd00"/><rect x="826" y="169" width="9" height="9" fill="#28ce00"/><rect x="834" y="169" width="9" height="9" fill="#1dce00"/><rect x="842" y="169" width="9" height="9" fill="#12cf00"/><rect x="850" y="169" width="9" height="9" fill="#08cf00"/><rect x="858" y="169" width="9" height="9" fill="#00cf02"/><rect x="866" y="169" width="9" height="9" fill="#00d00c"/><rect x="874" y="169" width="9" height="9" fill="#00d116"/><rect x="882" y="169" width="9" height="9" fill="#00d121"/><rect x="890" y="169" width="9" height="9" fill="#00d22e"/><rect x="898" y="169" width="9" height="9" fill="#00d23b"/><rect x="906" y="169" width="9" height="9" fill="#00d348"/><rect x="914" y="169" width="9" height="9" fill="#00d457"/><rect x="922" y="169" width="9" height="9" fill="#00d566"/><rect x="930" y="169" width="9" height="9" fill="#00d575"/><rect x="938" y="169" width="9" height="9" fill="#00d684"/><rect x="946" y="169" width="9" height="9" fill="#00d791"/><rect x="954" y="169" width="9" height="9" fill="#00d89b"/><rect x="962" y="169" width="9" height="9" fill="#00d9a3"/><rect x="970" y="169" width="9" height="9" fill="#00daab"/><rect x="978" y="169" width="9" height="9" fill="#00dbb2"/><rect x="986" y="169" width="9" height="9" fill="#00dcb9"/><rect x="994" y="169" width="9" height="9" fill="#00debf"/><rect x="1002" y="169" width="9" height="9" fill="#00dfc3"/><rect x="1010" y="169" width="9" height="9" fill="#00e0c6"/><rect x="1018" y="169" width="9" height="9" fill="#00e1c6"/><rect x="1026" y="169" width="9" height="9" fill="#00e1c1"/><rect x="1034" y="169" width="9" height="9" fill="#00e1c1"/><rect x="1042" y="169" width="9" height="9" fill="#00e1c7"/><rect x="1050" y="169" width="9" height="9" fill="#00e1ce"/><rect x="1058" y="169" width="9" height="9" fill="#00e1d3"/><rect x="162" y="177" width="9" height="9" fill="#00da97"/><rect x="170" y="177" width="9" height="9" fill="#00db88"/><rect x="178" y="177" width="9" height="9" fill="#00db79"/><rect x="186" y="177" width="9" height="9" fill="#00dc74"/><rect x="194" y="177" width="9" height="9" fill="#00de7d"/><rect x="202" y="177" width="9" height="9" fill="#00e08b"/><rect x="210" y="177" width="9" height="9" fill="#00e18f"/><rect x="218" y="177" width="9" height="9" fill="#00e28e"/><rect x="226" y="177" width="9" height="9" fill="#00e289"/><rect x="234" y="177" width="9" height="9" fill="#00e281"/><rect x="242" y="177" width="9" height="9" fill="#00e277"/><rect x="250" y="177" width="9" height="9" fill="#00e26c"/><rect x="258" y="177" width="9" height="9" fill="#00e260"/><rect x="266" y="177" width="9" height="9" fill="#00e154"/><rect x="274" y="177" width="9" height="9" fill="#00e147"/><rect x="282" y="177" width="9" height="9" fill="#00e03b"/><rect x="290" y="177" width="9" height="9" fill="#00e02f"/><rect x="298" y="177" width="9" height="9" fill="#00df24"/><rect x="306" y="177" width="9" height="9" fill="#00de19"/><rect x="314" y="177" width="9" height="9" fill="#00de0e"/><rect x="322" y="177" width="9" height="9" fill="#00dd05"/><rect x="330" y="177" width="9" height="9" fill="#04dc00"/><rect x="338" y="177" width="9" height="9" fill="#0edc00"/><rect x="346" y="177" width="9" height="9" fill="#19db00"/><rect x="354" y="177" width="9" height="9" fill="#23da00"/><rect x="362" y="177" width="9" height="9" fill="#2ed900"/><rect x="370" y="177" width="9" height="9" fill="#38d900"/><rect x="378" y="177" width="9" height="9" fill="#43d800"/><rect x="386" y="177" width="9" height="9" fill="#4dd700"/><rect x="394" y="177" width="9" height="9" fill="#57d600"/><rect x="402" y="177" width="9" height="9" fill="#60d600"/><rect x="410" y="177" width="9" height="9" fill="#6ad500"/><rect x="418" y="177" width="9" height="9" fill="#72d400"/><rect x="426" y="177" width="9" height="9" fill="#7cd300"/><rect x="434" y="177" width="9" height="9" fill="#86d300"/><rect x="442" y="177" width="9" height="9" fill="#90d200"/><rect x="450" y="177" width="9" height="9" fill="#99d100"/><rect x="458" y="177" width="9" height="9" fill="#a1d100"/><rect x="466" y="177" width="9" height="9" fill="#a9d000"/><rect x="474" y="177" width="9" height="9" fill="#b0cf00"/><rect x="482" y="177" width="9" height="9" fill="#b6ce00"/><rect x="490" y="177" width="9" height="9" fill="#bcce00"/><rect x="498" y="177" width="9" height="9" fill="#c1cd00"/><rect x="506" y="177" width="9" height="9" fill="#c7cd00"/><rect x="514" y="177" width="9" height="9" fill="#cbcc00"/><rect x="522" y="177" width="9" height="9" fill="#cbcc00"/><rect x="530" y="177" width="9" height="9" fill="#cbcb00"/><rect x="538" y="177" width="9" height="9" fill="#caca00"/><rect x="546" y="177" width="9" height="9" fill="#caca00"/><rect x="554" y="177" width="9" height="9" fill="#caca00"/><rect x="562" y="177" width="9" height="9" fill="#c9c900"/><rect x="570" y="177" width="9" height="9" fill="#c9c900"/><rect x="578" y="177" width="9" height="9" fill="#c8c800"/><rect x="586" y="177" width="9" height="9" fill="#c8c800"/><rect x="594" y="177" width="9" height="9" fill="#c8c800"/><rect x="602" y="177" width="9" height="9" fill="#c7c700"/><rect x="610" y="177" width="9" height="9" fill="#c7c700"/><rect x="618" y="177" width="9" height="9" fill="#c7c700"/><rect x="626" y="177" width="9" height="9" fill="#c7c700"/><rect x="634" y="177" width="9" height="9" fill="#c7c700"/><rect x="642" y="177" width="9" height="9" fill="#c6c600"/><rect x="650" y="177" width="9" height="9" fill="#c6c600"/><rect x="658" y="177" width="9" height="9" fill="#c6c600"/><rect x="666" y="177" width="9" height="9" fill="#c6c600"/><rect x="674" y="177" width="9" height="9" fill="#c6c600"/><rect x="682" y="177" width="9" height="9" fill="#c6c600"/><rect x="690" y="177" width="9" height="9" fill="#c4c600"/><rect x="698" y="177" width="9" height="9" fill="#bfc600"/><rect x="706" y="177" width="9" height="9" fill="#b8c600"/><rect x="714" y="177" width="9" height="9" fill="#b2c600"/><rect x="722" y="177" width="9" height="9" fill="#abc600"/><rect x="730" y="177" width="9" height="9" fill="#a3c700"/><rect x="738" y="177" width="9" height="9" fill="#9ac700"/><rect x="746" y="177" width="9" height="9" fill="#91c700"/><rect x="754" y="177" width="9" height="9" fill="#87c700"/><rect x="762" y="177" width="9" height="9" fill="#7cc700"/><rect x="770" y="177" width="9" height="9" fill="#71c800"/><rect x="778" y="177" width="9" height="9" fill="#67c800"/><rect x="786" y="177" width="9" height="9" fill="#5dc800"/><rect x="794" y="177" width="9" height="9" fill="#53c800"/><rect x="802" y="177" width="9" height="9" fill="#48c900"/><rect x="810" y="177" width="9" height="9" fill="#3dc900"/><rect x="818" y="177" width="9" height="9" fill="#32c900"/><rect x="826" y="177" width="9" height="9" fill="#27ca00"/><rect x="834" y="177" width="9" height="9" fill="#1cca00"/><rect x="842" y="177" width="9" height="9" fill="#11cb00"/><rect x="850" y="177" width="9" height="9" fill="#06cb00"/><rect x="858" y="177" width="9" height="9" fill="#00cc04"/><rect x="866" y="177" width="9" height="9" fill="#00cc0e"/><rect x="874" y="177" width="9" height="9" fill="#00cd1a"/><rect x="882" y="177" width="9" height="9" fill="#00cd26"/><rect x="890" y="177" width="9" height="9" fill="#00ce33"/><rect x="898" y="177" width="9" height="9" fill="#00cf41"/><rect x="906" y="177" width="9" height="9" fill="#00cf50"/><rect x="914" y="177" width="9" height="9" fill="#00d05f"/><rect x="922" y="177" width="9" height="9" fill="#00d16f"/><rect x="930" y="177" width="9" height="9" fill="#00d280"/><rect x="938" y="177" width="9" height="9" fill="#00d38f"/><rect x="946" y="177" width="9" height="9" fill="#00d499"/><rect x="954" y="177" width="9" height="9" fill="#00d5a2"/><rect x="962" y="177" width="9" height="9" fill="#00d6ab"/><rect x="970" y="177" width="9" height="9" fill="#00d7b4"/><rect x="978" y="177" width="9" height="9" fill="#00d8bc"/><rect x="986" y="177" width="9" height="9" fill="#00dac4"/><rect x="994" y="177" width="9" height="9" fill="#00dbcc"/><rect x="1002" y="177" width="9" height="9" fill="#00dcd3"/><rect x="1010" y="177" width="9" height="9" fill="#00ddd8"/><rect x="1018" y="177" width="9" height="9" fill="#00dedb"/><rect x="1026" y="177" width="9" height="9" fill="#00dedd"/><rect x="1034" y="177" width="9" height="9" fill="#00dfdb"/><rect x="1042" y="177" width="9" height="9" fill="#00e0d5"/><rect x="1050" y="177" width="9" height="9" fill="#00e1d4"/><rect x="1058" y="177" width="9" height="9" fill="#00e1db"/><rect x="1066" y="177" width="9" height="9" fill="#00dee1"/><rect x="154" y="185" width="9" height="9" fill="#00daa5"/><rect x="162" y="185" width="9" height="9" fill="#00da9d"/><rect x="170" y="185" width="9" height="9" fill="#00db99"/><rect x="178" y="185" width="9" height="9" fill="#00dd9d"/><rect x="186" y="185" width="9" height="9" fill="#00e0ab"/><rect x="194" y="185" width="9" height="9" fill="#00e1af"/><rect x="202" y="185" width="9" height="9" fill="#00e2af"/><rect x="210" y="185" width="9" height="9" fill="#00e2ac"/><rect x="218" y="185" width="9" height="9" fill="#00e2a8"/><rect x="226" y="185" width="9" height="9" fill="#00e2a3"/><rect x="234" y="185" width="9" height="9" fill="#00e29b"/><rect x="242" y="185" width="9" height="9" fill="#00e191"/><rect x="250" y="185" width="9" height="9" fill="#00e183"/><rect x="258" y="185" width="9" height="9" fill="#00e075"/><rect x="266" y="185" width="9" height="9" fill="#00e066"/><rect x="274" y="185" width="9" height="9" fill="#00df57"/><rect x="282" y="185" width="9" height="9" fill="#00de49"/><rect x="290" y="185" width="9" height="9" fill="#00dd3b"/><rect x="298" y="185" width="9" height="9" fill="#00dd2e"/><rect x="306" y="185" width="9" height="9" fill="#00dc21"/><rect x="314" y="185" width="9" height="9" fill="#00db15"/><rect x="322" y="185" width="9" height="9" fill="#00da0a"/><rect x="330" y="185" width="9" height="9" fill="#01d902"/><rect x="338" y="185" width="9" height="9" fill="#0ad900"/><rect x="346" y="185" width="9" height="9" fill="#15d800"/><rect x="354" y="185" width="9" height="9" fill="#20d700"/><rect x="362" y="185" width="9" height="9" fill="#2bd600"/><rect x="370" y="185" width="9" height="9" fill="#36d500"/><rect x="378" y="185" width="9" height="9" fill="#41d400"/><rect x="386" y="185" width="9" height="9" fill="#4cd300"/><rect x="394" y="185" width="9" height="9" fill="#57d200"/><rect x="402" y="185" width="9" height="9" fill="#61d100"/><rect x="410" y="185" width="9" height="9" fill="#6bd100"/><rect x="418" y="185" width="9" height="9" fill="#74d000"/><rect x="426" y="185" width="9" height="9" fill="#7fcf00"/><rect x="434" y="185" width="9" height="9" fill="#8ace00"/><rect x="442" y="185" width="9" height="9" fill="#94cd00"/><rect x="450" y="185" width="9" height="9" fill="#9dcc00"/><rect x="458" y="185" width="9" height="9" fill="#a6cc00"/><rect x="466" y="185" width="9" height="9" fill="#aecb00"/><rect x="474" y="185" width="9" height="9" fill="#b5ca00"/><rect x="482" y="185" width="9" height="9" fill="#bbc900"/><rect x="490" y="185" width="9" height="9" fill="#c2c900"/><rect x="498" y="185" width="9" height="9" fill="#c6c800"/><rect x="506" y="185" width="9" height="9" fill="#c7c700"/><rect x="514" y="185" width="9" height="9" fill="#c6c600"/><rect x="522" y="185" width="9" height="9" fill="#c6c600"/><rect x="530" y="185" width="9" height="9" fill="#c5c500"/><rect x="538" y="185" width="9" height="9" fill="#c5c500"/><rect x="546" y="185" width="9" height="9" fill="#c4c400"/><rect x="554" y="185" width="9" height="9" fill="#c4c400"/><rect x="562" y="185" width="9" height="9" fill="#c3c300"/><rect x="570" y="185" width="9" height="9" fill="#c3c300"/><rect x="578" y="185" width="9" height="9" fill="#c2c200"/><rect x="586" y="185" width="9" height="9" fill="#c2c200"/><rect x="594" y="185" width="9" height="9" fill="#c2c200"/><rect x="602" y="185" width="9" height="9" fill="#c1c100"/><rect x="610" y="185" width="9" height="9" fill="#c1c100"/><rect x="618" y="185" width="9" height="9" fill="#c1c100"/><rect x="626" y="185" width="9" height="9" fill="#c1c100"/><rect x="634" y="185" width="9" height="9" fill="#c1c100"/><rect x="642" y="185" width="9" height="9" fill="#c1c100"/><rect x="650" y="185" width="9" height="9" fill="#c0c000"/><rect x="658" y="185" width="9" height="9" fill="#c0c000"/><rect x="666" y="185" width="9" height="9" fill="#c0c000"/><rect x="674" y="185" width="9" height="9" fill="#c1c100"/><rect x="682" y="185" width="9" height="9" fill="#c1c100"/><rect x="690" y="185" width="9" height="9" fill="#c1c100"/><rect x="698" y="185" width="9" height="9" fill="#c1c100"/><rect x="706" y="185" width="9" height="9" fill="#bfc100"/><rect x="714" y="185" width="9" height="9" fill="#bbc100"/><rect x="722" y="185" width="9" height="9" fill="#b3c100"/><rect x="730" y="185" width="9" height="9" fill="#abc200"/><rect x="738" y="185" width="9" height="9" fill="#a3c200"/><rect x="746" y="185" width="9" height="9" fill="#9ac200"/><rect x="754" y="185" width="9" height="9" fill="#8fc200"/><rect x="762" y="185" width="9" height="9" fill="#84c300"/><rect x="770" y="185" width="9" height="9" fill="#79c300"/><rect x="778" y="185" width="9" height="9" fill="#6dc300"/><rect x="786" y="185" width="9" height="9" fill="#62c400"/><rect x="794" y="185" width="9" height="9" fill="#57c400"/><rect x="802" y="185" width="9" height="9" fill="#4cc400"/><rect x="810" y="185" width="9" height="9" fill="#41c500"/><rect x="818" y="185" width="9" height="9" fill="#35c500"/><rect x="826" y="185" width="9" height="9" fill="#29c600"/><rect x="834" y="185" width="9" height="9" fill="#1ec600"/><rect x="842" y="185" width="9" height="9" fill="#12c700"/><rect x="850" y="185" width="9" height="9" fill="#07c700"/><rect x="858" y="185" width="9" height="9" fill="#00c804"/><rect x="866" y="185" width="9" height="9" fill="#00c80f"/><rect x="874" y="185" width="9" height="9" fill="#00c91a"/><rect x="882" y="185" width="9" height="9" fill="#00ca27"/><rect x="890" y="185" width="9" height="9" fill="#00ca35"/><rect x="898" y="185" width="9" height="9" fill="#00cb44"/><rect x="906" y="185" width="9" height="9" fill="#00cc54"/><rect x="914" y="185" width="9" height="9" fill="#00cd65"/><rect x="922" y="185" width="9" height="9" fill="#00ce76"/><rect x="930" y="185" width="9" height="9" fill="#00ce87"/><rect x="938" y="185" width="9" height="9" fill="#00cf94"/><rect x="946" y="185" width="9" height="9" fill="#00d19d"/><rect x="954" y="185" width="9" height="9" fill="#00d2a7"/><rect x="962" y="185" width="9" height="9" fill="#00d3b1"/><rect x="970" y="185" width="9" height="9" fill="#00d4bb"/><rect x="978" y="185" width="9" height="9" fill="#00d5c4"/><rect x="986" y="185" width="9" height="9" fill="#00d7cd"/><rect x="994" y="185" width="9" height="9" fill="#00d8d5"/><rect x="1002" y="185" width="9" height="9" fill="#00d5da"/><rect x="1010" y="185" width="9" height="9" fill="#00d1db"/><rect x="1018" y="185" width="9" height="9" fill="#00cddd"/><rect x="1026" y="185" width="9" height="9" fill="#00cade"/><rect x="1034" y="185" width="9" height="9" fill="#00c9e0"/><rect x="1042" y="185" width="9" height="9" fill="#00cbe1"/><rect x="1050" y="185" width="9" height="9" fill="#00d1e1"/><rect x="1058" y="185" width="9" height="9" fill="#00dae1"/><rect x="1066" y="185" width="9" height="9" fill="#00dbe1"/><rect x="1074" y="185" width="9" height="9" fill="#00d6e1"/><rect x="138" y="193" width="9" height="9" fill="#00d8b6"/><rect x="146" y="193" width="9" height="9" fill="#00d9b1"/><rect x="154" y="193" width="9" height="9" fill="#00daac"/><rect x="162" y="193" width="9" height="9" fill="#00dcb1"/><rect x="170" y="193" width="9" height="9" fill="#00dfbf"/><rect x="178" y="193" width="9" height="9" fill="#00e1c6"/><rect x="186" y="193" width="9" height="9" fill="#00e1c8"/><rect x="194" y="193" width="9" height="9" fill="#00e2c7"/><rect x="202" y="193" width="9" height="9" fill="#00e2c3"/><rect x="210" y="193" width="9" height="9" fill="#00e2be"/><rect x="218" y="193" width="9" height="9" fill="#00e1b8"/><rect x="226" y="193" width="9" height="9" fill="#00e1b1"/><rect x="234" y="193" width="9" height="9" fill="#00e0a9"/><rect x="242" y="193" width="9" height="9" fill="#00e0a0"/><rect x="250" y="193" width="9" height="9" fill="#00df95"/><rect x="258" y="193" width="9" height="9" fill="#00de85"/><rect x="266" y="193" width="9" height="9" fill="#00de74"/><rect x="274" y="193" width="9" height="9" fill="#00dd64"/><rect x="282" y="193" width="9" height="9" fill="#00dc53"/><rect x="290" y="193" width="9" height="9" fill="#00db43"/><rect x="298" y="193" width="9" height="9" fill="#00da34"/><rect x="306" y="193" width="9" height="9" fill="#00d926"/><rect x="314" y="193" width="9" height="9" fill="#00d819"/><rect x="322" y="193" width="9" height="9" fill="#00d70d"/><rect x="330" y="193" width="9" height="9" fill="#00d603"/><rect x="338" y="193" width="9" height="9" fill="#08d500"/><rect x="346" y="193" width="9" height="9" fill="#14d400"/><rect x="354" y="193" width="9" height="9" fill="#20d300"/><rect x="362" y="193" width="9" height="9" fill="#2cd200"/><rect x="370" y="193" width="9" height="9" fill="#38d100"/><rect x="378" y="193" width="9" height="9" fill="#44d000"/><rect x="386" y="193" width="9" height="9" fill="#4fcf00"/><rect x="394" y="193" width="9" height="9" fill="#5ace00"/><rect x="402" y="193" width="9" height="9" fill="#65cd00"/><rect x="410" y="193" width="9" height="9" fill="#70cc00"/><rect x="418" y="193" width="9" height="9" fill="#7ccb00"/><rect x="426" y="193" width="9" height="9" fill="#88ca00"/><rect x="434" y="193" width="9" height="9" fill="#93c900"/><rect x="442" y="193" width="9" height="9" fill="#9ec800"/><rect x="450" y="193" width="9" height="9" fill="#a7c700"/><rect x="458" y="193" width="9" height="9" fill="#b0c600"/><rect x="466" y="193" width="9" height="9" fill="#b8c500"/><rect x="474" y="193" width="9" height="9" fill="#bfc400"/><rect x="482" y="193" width="9" height="9" fill="#c2c300"/><rect x="490" y="193" width="9" height="9" fill="#c2c200"/><rect x="498" y="193" width="9" height="9" fill="#c1c100"/><rect x="506" y="193" width="9" height="9" fill="#c0c000"/><rect x="514" y="193" width="9" height="9" fill="#bfbf00"/><rect x="522" y="193" width="9" height="9" fill="#bebe00"/><rect x="530" y="193" width="9" height="9" fill="#bebe00"/><rect x="538" y="193" width="9" height="9" fill="#bdbd00"/><rect x="546" y="193" width="9" height="9" fill="#bcbc00"/><rect x="554" y="193" width="9" height="9" fill="#bcbc00"/><rect x="562" y="193" width="9" height="9" fill="#bbbb00"/><rect x="570" y="193" width="9" height="9" fill="#bbbb00"/><rect x="578" y="193" width="9" height="9" fill="#baba00"/><rect x="586" y="193" width="9" height="9" fill="#baba00"/><rect x="594" y="193" width="9" height="9" fill="#b9b900"/><rect x="602" y="193" width="9" height="9" fill="#baba00"/><rect x="610" y="193" width="9" height="9" fill="#baba00"/><rect x="618" y="193" width="9" height="9" fill="#b9b900"/><rect x="626" y="193" width="9" height="9" fill="#b9b900"/><rect x="634" y="193" width="9" height="9" fill="#b9b900"/><rect x="642" y="193" width="9" height="9" fill="#b9b900"/><rect x="650" y="193" width="9" height="9" fill="#b9b900"/><rect x="658" y="193" width="9" height="9" fill="#b9b900"/><rect x="666" y="193" width="9" height="9" fill="#b9b900"/><rect x="674" y="193" width="9" height="9" fill="#b9b900"/><rect x="682" y="193" width="9" height="9" fill="#b9b900"/><rect x="690" y="193" width="9" height="9" fill="#b9b900"/><rect x="698" y="193" width="9" height="9" fill="#baba00"/><rect x="706" y="193" width="9" height="9" fill="#baba00"/><rect x="714" y="193" width="9" height="9" fill="#bbbb00"/><rect x="722" y="193" width="9" height="9" fill="#bbbb00"/><rect x="730" y="193" width="9" height="9" fill="#b8bb00"/><rect x="738" y="193" width="9" height="9" fill="#b3bc00"/><rect x="746" y="193" width="9" height="9" fill="#aabc00"/><rect x="754" y="193" width="9" height="9" fill="#a0bd00"/><rect x="762" y="193" width="9" height="9" fill="#94bd00"/><rect x="770" y="193" width="9" height="9" fill="#88be00"/><rect x="778" y="193" width="9" height="9" fill="#7bbe00"/><rect x="786" y="193" width="9" height="9" fill="#6dbf00"/><rect x="794" y="193" width="9" height="9" fill="#61bf00"/><rect x="802" y="193" width="9" height="9" fill="#55c000"/><rect x="810" y="193" width="9" height="9" fill="#49c000"/><rect x="818" y="193" width="9" height="9" fill="#3dc100"/><rect x="826" y="193" width="9" height="9" fill="#30c100"/><rect x="834" y="193" width="9" height="9" fill="#23c200"/><rect x="842" y="193" width="9" height="9" fill="#17c300"/><rect x="850" y="193" width="9" height="9" fill="#0bc300"/><rect x="858" y="193" width="9" height="9" fill="#01c402"/><rect x="866" y="193" width="9" height="9" fill="#00c40c"/><rect x="874" y="193" width="9" height="9" fill="#00c518"/><rect x="882" y="193" width="9" height="9" fill="#00c626"/><rect x="890" y="193" width="9" height="9" fill="#00c734"/><rect x="898" y="193" width="9" height="9" fill="#00c744"/><rect x="906" y="193" width="9" height="9" fill="#00c855"/><rect x="914" y="193" width="9" height="9" fill="#00c966"/><rect x="922" y="193" width="9" height="9" fill="#00ca79"/><rect x="930" y="193" width="9" height="9" fill="#00cb8a"/><rect x="938" y="193" width="9" height="9" fill="#00cc95"/><rect x="946" y="193" width="9" height="9" fill="#00cda0"/><rect x="954" y="193" width="9" height="9" fill="#00ceaa"/><rect x="962" y="193" width="9" height="9" fill="#00d0b5"/><rect x="970" y="193" width="9" height="9" fill="#00d1bf"/><rect x="978" y="193" width="9" height="9" fill="#00d3ca"/><rect x="986" y="193" width="9" height="9" fill="#00d3d3"/><rect x="994" y="193" width="9" height="9" fill="#00cdd6"/><rect x="1002" y="193" width="9" height="9" fill="#00c6d7"/><rect x="1010" y="193" width="9" height="9" fill="#00bfd9"/><rect x="1018" y="193" width="9" height="9" fill="#00b7db"/><rect x="1026" y="193" width="9" height="9" fill="#00b0dd"/><rect x="1034" y="193" width="9" height="9" fill="#00abde"/><rect x="1042" y="193" width="9" height="9" fill="#00a9e0"/><rect x="1050" y="193" width="9" height="9" fill="#00abe1"/><rect x="1058" y="193" width="9" height="9" fill="#00b3e2"/><rect x="1066" y="193" width="9" height="9" fill="#00c4e1"/><rect x="1074" y="193" width="9" height="9" fill="#00cde1"/><rect x="1082" y="193" width="9" height="9" fill="#00c6e1"/><rect x="130" y="201" width="9" height="9" fill="#00d7c1"/><rect x="138" y="201" width="9" height="9" fill="#00d8be"/><rect x="146" y="201" width="9" height="9" fill="#00d9bb"/><rect x="154" y="201" width="9" height="9" fill="#00ddc9"/><rect x="162" y="201" width="9" height="9" fill="#00dfd6"/><rect x="170" y="201" width="9" height="9" fill="#00e0db"/><rect x="178" y="201" width="9" height="9" fill="#00e0dd"/><rect x="186" y="201" width="9" height="9" fill="#00e1dc"/><rect x="194" y="201" width="9" height="9" fill="#00e2d9"/><rect x="202" y="201" width="9" height="9" fill="#00e1d4"/><rect x="210" y="201" width="9" height="9" fill="#00e1cd"/><rect x="218" y="201" width="9" height="9" fill="#00e0c5"/><rect x="226" y="201" width="9" height="9" fill="#00e0bc"/><rect x="234" y="201" width="9" height="9" fill="#00dfb3"/><rect x="242" y="201" width="9" height="9" fill="#00dea9"/><rect x="250" y="201" width="9" height="9" fill="#00dd9e"/><rect x="258" y="201" width="9" height="9" fill="#00dc92"/><rect x="266" y="201" width="9" height="9" fill="#00db7f"/><rect x="274" y="201" width="9" height="9" fill="#00da6c"/><rect x="282" y="201" width="9" height="9" fill="#00d95a"/><rect x="290" y="201" width="9" height="9" fill="#00d848"/><rect x="298" y="201" width="9" height="9" fill="#00d738"/><rect x="306" y="201" width="9" height="9" fill="#00d628"/><rect x="314" y="201" width="9" height="9" fill="#00d51a"/><rect x="322" y="201" width="9" height="9" fill="#00d30d"/><rect x="330" y="201" width="9" height="9" fill="#01d202"/><rect x="338" y="201" width="9" height="9" fill="#0ad100"/><rect x="346" y="201" width="9" height="9" fill="#17d000"/><rect x="354" y="201" width="9" height="9" fill="#24cf00"/><rect x="362" y="201" width="9" height="9" fill="#31cd00"/><rect x="370" y="201" width="9" height="9" fill="#3ecc00"/><rect x="378" y="201" width="9" height="9" fill="#4bcb00"/><rect x="386" y="201" width="9" height="9" fill="#57ca00"/><rect x="394" y="201" width="9" height="9" fill="#63c800"/><rect x="402" y="201" width="9" height="9" fill="#70c700"/><rect x="410" y="201" width="9" height="9" fill="#7dc600"/><rect x="418" y="201" width="9" height="9" fill="#8bc400"/><rect x="426" y="201" width="9" height="9" fill="#98c300"/><rect x="434" y="201" width="9" height="9" fill="#a4c200"/><rect x="442" y="201" width="9" height="9" fill="#afc000"/><rect x="450" y="201" width="9" height="9" fill="#b7bf00"/><rect x="458" y="201" width="9" height="9" fill="#bcbd00"/><rect x="466" y="201" width="9" height="9" fill="#bcbc00"/><rect x="474" y="201" width="9" height="9" fill="#bbbb00"/><rect x="482" y="201" width="9" height="9" fill="#baba00"/><rect x="490" y="201" width="9" height="9" fill="#b9b900"/><rect x="498" y="201" width="9" height="9" fill="#b9b900"/><rect x="506" y="201" width="9" height="9" fill="#b8b800"/><rect x="514" y="201" width="9" height="9" fill="#b7b700"/><rect x="522" y="201" width="9" height="9" fill="#b8b800"/><rect x="530" y="201" width="9" height="9" fill="#b7b700"/><rect x="538" y="201" width="9" height="9" fill="#b8b800"/><rect x="546" y="201" width="9" height="9" fill="#b6b600"/><rect x="554" y="201" width="9" height="9" fill="#b8b800"/><rect x="562" y="201" width="9" height="9" fill="#b6b600"/><rect x="570" y="201" width="9" height="9" fill="#b8b800"/><rect x="578" y="201" width="9" height="9" fill="#b7b700"/><rect x="586" y="201" width="9" height="9" fill="#b7b700"/><rect x="594" y="201" width="9" height="9" fill="#b6b600"/><rect x="602" y="201" width="9" height="9" fill="#b7b700"/><rect x="610" y="201" width="9" height="9" fill="#b8b800"/><rect x="618" y="201" width="9" height="9" fill="#b8b800"/><rect x="626" y="201" width="9" height="9" fill="#b7b700"/><rect x="634" y="201" width="9" height="9" fill="#b7b700"/><rect x="642" y="201" width="9" height="9" fill="#b8b800"/><rect x="650" y="201" width="9" height="9" fill="#b6b600"/><rect x="658" y="201" width="9" height="9" fill="#b6b600"/><rect x="666" y="201" width="9" height="9" fill="#b6b600"/><rect x="674" y="201" width="9" height="9" fill="#b7b700"/><rect x="682" y="201" width="9" height="9" fill="#b5b500"/><rect x="690" y="201" width="9" height="9" fill="#b6b600"/><rect x="698" y="201" width="9" height="9" fill="#b6b600"/><rect x="706" y="201" width="9" height="9" fill="#b6b600"/><rect x="714" y="201" width="9" height="9" fill="#b6b600"/><rect x="722" y="201" width="9" height="9" fill="#b6b600"/><rect x="730" y="201" width="9" height="9" fill="#b6b600"/><rect x="738" y="201" width="9" height="9" fill="#b6b600"/><rect x="746" y="201" width="9" height="9" fill="#b6b600"/><rect x="754" y="201" width="9" height="9" fill="#b4b600"/><rect x="762" y="201" width="9" height="9" fill="#b0b700"/><rect x="770" y="201" width="9" height="9" fill="#a7b700"/><rect x="778" y="201" width="9" height="9" fill="#9ab800"/><rect x="786" y="201" width="9" height="9" fill="#8ab900"/><rect x="794" y="201" width="9" height="9" fill="#79b900"/><rect x="802" y="201" width="9" height="9" fill="#68ba00"/><rect x="810" y="201" width="9" height="9" fill="#5abb00"/><rect x="818" y="201" width="9" height="9" fill="#4bbc00"/><rect x="826" y="201" width="9" height="9" fill="#3dbc00"/><rect x="834" y="201" width="9" height="9" fill="#2fbd00"/><rect x="842" y="201" width="9" height="9" fill="#21be00"/><rect x="850" y="201" width="9" height="9" fill="#13bf00"/><rect x="858" y="201" width="9" height="9" fill="#06bf00"/><rect x="866" y="201" width="9" height="9" fill="#00c006"/><rect x="874" y="201" width="9" height="9" fill="#00c113"/><rect x="882" y="201" width="9" height="9" fill="#00c221"/><rect x="890" y="201" width="9" height="9" fill="#00c330"/><rect x="898" y="201" width="9" height="9" fill="#00c340"/><rect x="906" y="201" width="9" height="9" fill="#00c452"/><rect x="914" y="201" width="9" height="9" fill="#00c565"/><rect x="922" y="201" width="9" height="9" fill="#00c678"/><rect x="930" y="201" width="9" height="9" fill="#00c78a"/><rect x="938" y="201" width="9" height="9" fill="#00c895"/><rect x="946" y="201" width="9" height="9" fill="#00caa0"/><rect x="954" y="201" width="9" height="9" fill="#00cbac"/><rect x="962" y="201" width="9" height="9" fill="#00ccb7"/><rect x="970" y="201" width="9" height="9" fill="#00cec3"/><rect x="978" y="201" width="9" height="9" fill="#00cfcd"/><rect x="986" y="201" width="9" height="9" fill="#00c9d1"/><rect x="994" y="201" width="9" height="9" fill="#00c0d3"/><rect x="1002" y="201" width="9" height="9" fill="#00b6d5"/><rect x="1010" y="201" width="9" height="9" fill="#00a9d7"/><rect x="1018" y="201" width="9" height="9" fill="#009dd9"/><rect x="1026" y="201" width="9" height="9" fill="#0093db"/><rect x="1034" y="201" width="9" height="9" fill="#008bdd"/><rect x="1042" y="201" width="9" height="9" fill="#0087df"/><rect x="1050" y="201" width="9" height="9" fill="#0086e0"/><rect x="1058" y="201" width="9" height="9" fill="#008ae1"/><rect x="1066" y="201" width="9" height="9" fill="#0093e2"/><rect x="1074" y="201" width="9" height="9" fill="#00a9e2"/><rect x="1082" y="201" width="9" height="9" fill="#00b8e1"/><rect x="1090" y="201" width="9" height="9" fill="#00aee0"/><rect x="122" y="209" width="9" height="9" fill="#00d6cd"/><rect x="130" y="209" width="9" height="9" fill="#00d7c8"/><rect x="138" y="209" width="9" height="9" fill="#00d8c9"/><rect x="146" y="209" width="9" height="9" fill="#00d8d8"/><rect x="154" y="209" width="9" height="9" fill="#00d3df"/><rect x="162" y="209" width="9" height="9" fill="#00d0e0"/><rect x="170" y="209" width="9" height="9" fill="#00cee1"/><rect x="178" y="209" width="9" height="9" fill="#00d0e1"/><rect x="186" y="209" width="9" height="9" fill="#00d4e1"/><rect x="194" y="209" width="9" height="9" fill="#00d9e1"/><rect x="202" y="209" width="9" height="9" fill="#00dedf"/><rect x="210" y="209" width="9" height="9" fill="#00e0da"/><rect x="218" y="209" width="9" height="9" fill="#00dfd0"/><rect x="226" y="209" width="9" height="9" fill="#00dec6"/><rect x="234" y="209" width="9" height="9" fill="#00ddbb"/><rect x="242" y="209" width="9" height="9" fill="#00dcaf"/><rect x="250" y="209" width="9" height="9" fill="#00dba4"/><rect x="258" y="209" width="9" height="9" fill="#00da98"/><rect x="266" y="209" width="9" height="9" fill="#00d886"/><rect x="274" y="209" width="9" height="9" fill="#00d771"/><rect x="282" y="209" width="9" height="9" fill="#00d65d"/><rect x="290" y="209" width="9" height="9" fill="#00d54a"/><rect x="298" y="209" width="9" height="9" fill="#00d338"/><rect x="306" y="209" width="9" height="9" fill="#00d227"/><rect x="314" y="209" width="9" height="9" fill="#00d118"/><rect x="322" y="209" width="9" height="9" fill="#00cf0a"/><rect x="330" y="209" width="9" height="9" fill="#03ce01"/><rect x="338" y="209" width="9" height="9" fill="#10cc00"/><rect x="346" y="209" width="9" height="9" fill="#1ecb00"/><rect x="354" y="209" width="9" height="9" fill="#2dc900"/><rect x="362" y="209" width="9" height="9" fill="#3bc800"/><rect x="370" y="209" width="9" height="9" fill="#4ac600"/><rect x="378" y="209" width="9" height="9" fill="#58c500"/><rect x="386" y="209" width="9" height="9" fill="#67c300"/><rect x="394" y="209" width="9" height="9" fill="#77c100"/><rect x="402" y="209" width="9" height="9" fill="#8abf00"/><rect x="410" y="209" width="9" height="9" fill="#9bbd00"/><rect x="418" y="209" width="9" height="9" fill="#a9bc00"/><rect x="426" y="209" width="9" height="9" fill="#b3ba00"/><rect x="434" y="209" width="9" height="9" fill="#b8b900"/><rect x="442" y="209" width="9" height="9" fill="#b8b800"/><rect x="450" y="209" width="9" height="9" fill="#b8b800"/><rect x="458" y="209" width="9" height="9" fill="#b8b800"/><rect x="466" y="209" width="9" height="9" fill="#b8b800"/><rect x="474" y="209" width="9" height="9" fill="#b7b700"/><rect x="482" y="209" width="9" height="9" fill="#b7b700"/><rect x="490" y="209" width="9" height="9" fill="#b7b700"/><rect x="498" y="209" width="9" height="9" fill="#b7b700"/><rect x="506" y="209" width="9" height="9" fill="#b7b700"/><rect x="514" y="209" width="9" height="9" fill="#b7b700"/><rect x="522" y="209" width="9" height="9" fill="#b7b700"/><rect x="530" y="209" width="9" height="9" fill="#b6b600"/><rect x="538" y="209" width="9" height="9" fill="#b8b800"/><rect x="546" y="209" width="9" height="9" fill="#b6b600"/><rect x="554" y="209" width="9" height="9" fill="#b8b800"/><rect x="562" y="209" width="9" height="9" fill="#b6b600"/><rect x="570" y="209" width="9" height="9" fill="#b7b700"/><rect x="578" y="209" width="9" height="9" fill="#b7b700"/><rect x="586" y="209" width="9" height="9" fill="#b7b700"/><rect x="594" y="209" width="9" height="9" fill="#b6b600"/><rect x="650" y="209" width="9" height="9" fill="#b5b500"/><rect x="658" y="209" width="9" height="9" fill="#b6b600"/><rect x="666" y="209" width="9" height="9" fill="#b6b600"/><rect x="674" y="209" width="9" height="9" fill="#b7b700"/><rect x="682" y="209" width="9" height="9" fill="#b5b500"/><rect x="690" y="209" width="9" height="9" fill="#b6b600"/><rect x="698" y="209" width="9" height="9" fill="#b6b600"/><rect x="706" y="209" width="9" height="9" fill="#b6b600"/><rect x="714" y="209" width="9" height="9" fill="#b5b500"/><rect x="722" y="209" width="9" height="9" fill="#b6b600"/><rect x="730" y="209" width="9" height="9" fill="#b5b500"/><rect x="738" y="209" width="9" height="9" fill="#b5b500"/><rect x="746" y="209" width="9" height="9" fill="#b5b500"/><rect x="754" y="209" width="9" height="9" fill="#b5b500"/><rect x="762" y="209" width="9" height="9" fill="#b5b500"/><rect x="770" y="209" width="9" height="9" fill="#b4b500"/><rect x="778" y="209" width="9" height="9" fill="#aeb500"/><rect x="786" y="209" width="9" height="9" fill="#a3b500"/><rect x="794" y="209" width="9" height="9" fill="#99b500"/><rect x="802" y="209" width="9" height="9" fill="#8cb500"/><rect x="810" y="209" width="9" height="9" fill="#7db500"/><rect x="818" y="209" width="9" height="9" fill="#6cb600"/><rect x="826" y="209" width="9" height="9" fill="#5ab700"/><rect x="834" y="209" width="9" height="9" fill="#49b800"/><rect x="842" y="209" width="9" height="9" fill="#36b900"/><rect x="850" y="209" width="9" height="9" fill="#24ba00"/><rect x="858" y="209" width="9" height="9" fill="#14bb00"/><rect x="866" y="209" width="9" height="9" fill="#06bc01"/><rect x="874" y="209" width="9" height="9" fill="#00bd09"/><rect x="882" y="209" width="9" height="9" fill="#00bd17"/><rect x="890" y="209" width="9" height="9" fill="#00be27"/><rect x="898" y="209" width="9" height="9" fill="#00bf39"/><rect x="906" y="209" width="9" height="9" fill="#00c04b"/><rect x="914" y="209" width="9" height="9" fill="#00c15f"/><rect x="922" y="209" width="9" height="9" fill="#00c274"/><rect x="930" y="209" width="9" height="9" fill="#00c487"/><rect x="938" y="209" width="9" height="9" fill="#00c593"/><rect x="946" y="209" width="9" height="9" fill="#00c69f"/><rect x="954" y="209" width="9" height="9" fill="#00c8ac"/><rect x="962" y="209" width="9" height="9" fill="#00c9b8"/><rect x="970" y="209" width="9" height="9" fill="#00cbc4"/><rect x="978" y="209" width="9" height="9" fill="#00c8cc"/><rect x="986" y="209" width="9" height="9" fill="#00bece"/><rect x="994" y="209" width="9" height="9" fill="#00b2d1"/><rect x="1002" y="209" width="9" height="9" fill="#00a2d3"/><rect x="1010" y="209" width="9" height="9" fill="#0092d5"/><rect x="1018" y="209" width="9" height="9" fill="#0083d8"/><rect x="1026" y="209" width="9" height="9" fill="#0073da"/><rect x="1034" y="209" width="9" height="9" fill="#0064dc"/><rect x="1042" y="209" width="9" height="9" fill="#005ade"/><rect x="1050" y="209" width="9" height="9" fill="#0057e0"/><rect x="1058" y="209" width="9" height="9" fill="#005fe1"/><rect x="1066" y="209" width="9" height="9" fill="#0078e2"/><rect x="1074" y="209" width="9" height="9" fill="#007fe2"/><rect x="1082" y="209" width="9" height="9" fill="#0092e2"/><rect x="1090" y="209" width="9" height="9" fill="#00a7e0"/><rect x="1098" y="209" width="9" height="9" fill="#00a2df"/><rect x="114" y="217" width="9" height="9" fill="#00d4d3"/><rect x="122" y="217" width="9" height="9" fill="#00d4ce"/><rect x="130" y="217" width="9" height="9" fill="#00d5d0"/><rect x="138" y="217" width="9" height="9" fill="#00cbdb"/><rect x="146" y="217" width="9" height="9" fill="#00c0de"/><rect x="154" y="217" width="9" height="9" fill="#00bbe0"/><rect x="162" y="217" width="9" height="9" fill="#00b3e1"/><rect x="170" y="217" width="9" height="9" fill="#00b1e1"/><rect x="178" y="217" width="9" height="9" fill="#00b5e1"/><rect x="186" y="217" width="9" height="9" fill="#00bce1"/><rect x="194" y="217" width="9" height="9" fill="#00c5e1"/><rect x="202" y="217" width="9" height="9" fill="#00cfe0"/><rect x="210" y="217" width="9" height="9" fill="#00d8df"/><rect x="218" y="217" width="9" height="9" fill="#00ddda"/><rect x="226" y="217" width="9" height="9" fill="#00dcce"/><rect x="234" y="217" width="9" height="9" fill="#00dbc1"/><rect x="242" y="217" width="9" height="9" fill="#00dab4"/><rect x="250" y="217" width="9" height="9" fill="#00d8a7"/><rect x="258" y="217" width="9" height="9" fill="#00d79a"/><rect x="266" y="217" width="9" height="9" fill="#00d589"/><rect x="274" y="217" width="9" height="9" fill="#00d472"/><rect x="282" y="217" width="9" height="9" fill="#00d25c"/><rect x="290" y="217" width="9" height="9" fill="#00d147"/><rect x="298" y="217" width="9" height="9" fill="#00cf33"/><rect x="306" y="217" width="9" height="9" fill="#00ce21"/><rect x="314" y="217" width="9" height="9" fill="#00cc11"/><rect x="322" y="217" width="9" height="9" fill="#01ca04"/><rect x="330" y="217" width="9" height="9" fill="#0cc800"/><rect x="338" y="217" width="9" height="9" fill="#1cc700"/><rect x="346" y="217" width="9" height="9" fill="#2dc500"/><rect x="354" y="217" width="9" height="9" fill="#3ec300"/><rect x="362" y="217" width="9" height="9" fill="#51c000"/><rect x="370" y="217" width="9" height="9" fill="#66be00"/><rect x="378" y="217" width="9" height="9" fill="#7abc00"/><rect x="386" y="217" width="9" height="9" fill="#8dba00"/><rect x="394" y="217" width="9" height="9" fill="#9eb800"/><rect x="402" y="217" width="9" height="9" fill="#a7b800"/><rect x="410" y="217" width="9" height="9" fill="#b0b800"/><rect x="418" y="217" width="9" height="9" fill="#b7b800"/><rect x="426" y="217" width="9" height="9" fill="#b8b800"/><rect x="434" y="217" width="9" height="9" fill="#b8b800"/><rect x="442" y="217" width="9" height="9" fill="#b7b700"/><rect x="450" y="217" width="9" height="9" fill="#b7b700"/><rect x="458" y="217" width="9" height="9" fill="#b7b700"/><rect x="466" y="217" width="9" height="9" fill="#b7b700"/><rect x="474" y="217" width="9" height="9" fill="#b7b700"/><rect x="770" y="217" width="9" height="9" fill="#b4b500"/><rect x="778" y="217" width="9" height="9" fill="#afb500"/><rect x="786" y="217" width="9" height="9" fill="#a5b500"/><rect x="794" y="217" width="9" height="9" fill="#9cb400"/><rect x="802" y="217" width="9" height="9" fill="#90b400"/><rect x="810" y="217" width="9" height="9" fill="#85b400"/><rect x="818" y="217" width="9" height="9" fill="#78b400"/><rect x="826" y="217" width="9" height="9" fill="#69b400"/><rect x="834" y="217" width="9" height="9" fill="#5eb400"/><rect x="842" y="217" width="9" height="9" fill="#52b400"/><rect x="850" y="217" width="9" height="9" fill="#44b500"/><rect x="858" y="217" width="9" height="9" fill="#33b500"/><rect x="866" y="217" width="9" height="9" fill="#1fb600"/><rect x="874" y="217" width="9" height="9" fill="#0cb700"/><rect x="882" y="217" width="9" height="9" fill="#01b908"/><rect x="890" y="217" width="9" height="9" fill="#00ba18"/><rect x="898" y="217" width="9" height="9" fill="#00bb2a"/><rect x="906" y="217" width="9" height="9" fill="#00bc3f"/><rect x="914" y="217" width="9" height="9" fill="#00bd54"/><rect x="922" y="217" width="9" height="9" fill="#00bf6a"/><rect x="930" y="217" width="9" height="9" fill="#00c080"/><rect x="938" y="217" width="9" height="9" fill="#00c18f"/><rect x="946" y="217" width="9" height="9" fill="#00c39c"/><rect x="954" y="217" width="9" height="9" fill="#00c4a9"/><rect x="962" y="217" width="9" height="9" fill="#00c6b7"/><rect x="970" y="217" width="9" height="9" fill="#00c7c4"/><rect x="978" y="217" width="9" height="9" fill="#00c0c9"/><rect x="986" y="217" width="9" height="9" fill="#00b4cc"/><rect x="994" y="217" width="9" height="9" fill="#00a2ce"/><rect x="1002" y="217" width="9" height="9" fill="#008ed1"/><rect x="1010" y="217" width="9" height="9" fill="#0079d3"/><rect x="1018" y="217" width="9" height="9" fill="#0063d6"/><rect x="1026" y="217" width="9" height="9" fill="#0044d9"/><rect x="1034" y="217" width="9" height="9" fill="#0031dc"/><rect x="1042" y="217" width="9" height="9" fill="#0026de"/><rect x="1050" y="217" width="9" height="9" fill="#0021df"/><rect x="1058" y="217" width="9" height="9" fill="#001ee1"/><rect x="1066" y="217" width="9" height="9" fill="#001de1"/><rect x="1074" y="217" width="9" height="9" fill="#015be2"/><rect x="1082" y="217" width="9" height="9" fill="#007ce2"/><rect x="1090" y="217" width="9" height="9" fill="#0087e1"/><rect x="1098" y="217" width="9" height="9" fill="#0096df"/><rect x="1106" y="217" width="9" height="9" fill="#0092de"/><rect x="106" y="225" width="9" height="9" fill="#00cad3"/><rect x="114" y="225" width="9" height="9" fill="#00cfd3"/><rect x="122" y="225" width="9" height="9" fill="#00cfd5"/><rect x="130" y="225" width="9" height="9" fill="#00c1da"/><rect x="138" y="225" width="9" height="9" fill="#00bbdc"/><rect x="146" y="225" width="9" height="9" fill="#00a2df"/><rect x="154" y="225" width="9" height="9" fill="#008de0"/><rect x="162" y="225" width="9" height="9" fill="#008ce1"/><rect x="170" y="225" width="9" height="9" fill="#008fe1"/><rect x="178" y="225" width="9" height="9" fill="#0094e1"/><rect x="186" y="225" width="9" height="9" fill="#009de1"/><rect x="194" y="225" width="9" height="9" fill="#00aae0"/><rect x="202" y="225" width="9" height="9" fill="#00badf"/><rect x="210" y="225" width="9" height="9" fill="#00c9dd"/><rect x="218" y="225" width="9" height="9" fill="#00d5dc"/><rect x="226" y="225" width="9" height="9" fill="#00dad4"/><rect x="234" y="225" width="9" height="9" fill="#00d9c6"/><rect x="242" y="225" width="9" height="9" fill="#00d7b7"/><rect x="250" y="225" width="9" height="9" fill="#00d5a8"/><rect x="258" y="225" width="9" height="9" fill="#00d49a"/><rect x="266" y="225" width="9" height="9" fill="#00d287"/><rect x="274" y="225" width="9" height="9" fill="#00d06e"/><rect x="282" y="225" width="9" height="9" fill="#00ce56"/><rect x="290" y="225" width="9" height="9" fill="#00cc3f"/><rect x="298" y="225" width="9" height="9" fill="#00ca2a"/><rect x="306" y="225" width="9" height="9" fill="#00c817"/><rect x="314" y="225" width="9" height="9" fill="#01c606"/><rect x="322" y="225" width="9" height="9" fill="#0cc400"/><rect x="330" y="225" width="9" height="9" fill="#20c100"/><rect x="338" y="225" width="9" height="9" fill="#37be00"/><rect x="346" y="225" width="9" height="9" fill="#4ebb00"/><rect x="354" y="225" width="9" height="9" fill="#63b900"/><rect x="362" y="225" width="9" height="9" fill="#73b800"/><rect x="370" y="225" width="9" height="9" fill="#7fb800"/><rect x="378" y="225" width="9" height="9" fill="#8bb800"/><rect x="386" y="225" width="9" height="9" fill="#97b800"/><rect x="394" y="225" width="9" height="9" fill="#a2b700"/><rect x="402" y="225" width="9" height="9" fill="#a9b700"/><rect x="410" y="225" width="9" height="9" fill="#b0b800"/><rect x="418" y="225" width="9" height="9" fill="#b7b700"/><rect x="426" y="225" width="9" height="9" fill="#b7b700"/><rect x="818" y="225" width="9" height="9" fill="#78b400"/><rect x="826" y="225" width="9" height="9" fill="#69b400"/><rect x="834" y="225" width="9" height="9" fill="#5db400"/><rect x="842" y="225" width="9" height="9" fill="#54b400"/><rect x="850" y="225" width="9" height="9" fill="#47b400"/><rect x="858" y="225" width="9" height="9" fill="#3cb400"/><rect x="866" y="225" width="9" height="9" fill="#2eb400"/><rect x="874" y="225" width="9" height="9" fill="#24b400"/><rect x="882" y="225" width="9" height="9" fill="#15b400"/><rect x="890" y="225" width="9" height="9" fill="#06b503"/><rect x="898" y="225" width="9" height="9" fill="#00b610"/><rect x="906" y="225" width="9" height="9" fill="#00b727"/><rect x="914" y="225" width="9" height="9" fill="#00b940"/><rect x="922" y="225" width="9" height="9" fill="#00ba5a"/><rect x="930" y="225" width="9" height="9" fill="#00bc74"/><rect x="938" y="225" width="9" height="9" fill="#00bd88"/><rect x="946" y="225" width="9" height="9" fill="#00bf96"/><rect x="954" y="225" width="9" height="9" fill="#00c0a5"/><rect x="962" y="225" width="9" height="9" fill="#00c2b4"/><rect x="970" y="225" width="9" height="9" fill="#00c3c2"/><rect x="978" y="225" width="9" height="9" fill="#00b9c6"/><rect x="986" y="225" width="9" height="9" fill="#00a9c9"/><rect x="994" y="225" width="9" height="9" fill="#0092cc"/><rect x="1002" y="225" width="9" height="9" fill="#0079cf"/><rect x="1010" y="225" width="9" height="9" fill="#006dd1"/><rect x="1018" y="225" width="9" height="9" fill="#004ad6"/><rect x="1026" y="225" width="9" height="9" fill="#0018d9"/><rect x="1074" y="225" width="9" height="9" fill="#1402e2"/><rect x="1082" y="225" width="9" height="9" fill="#0c56e2"/><rect x="1090" y="225" width="9" height="9" fill="#007ee0"/><rect x="1098" y="225" width="9" height="9" fill="#0085df"/><rect x="1106" y="225" width="9" height="9" fill="#0084de"/><rect x="1114" y="225" width="9" height="9" fill="#0082de"/><rect x="106" y="233" width="9" height="9" fill="#00c3d2"/><rect x="114" y="233" width="9" height="9" fill="#00c7d3"/><rect x="122" y="233" width="9" height="9" fill="#00bed6"/><rect x="130" y="233" width="9" height="9" fill="#00bbd9"/><rect x="138" y="233" width="9" height="9" fill="#0080dd"/><rect x="146" y="233" width="9" height="9" fill="#0062e0"/><rect x="178" y="233" width="9" height="9" fill="#0068e1"/><rect x="186" y="233" width="9" height="9" fill="#0077e0"/><rect x="194" y="233" width="9" height="9" fill="#0092e0"/><rect x="202" y="233" width="9" height="9" fill="#00a9de"/><rect x="210" y="233" width="9" height="9" fill="#00b5dc"/><rect x="218" y="233" width="9" height="9" fill="#00c8da"/><rect x="226" y="233" width="9" height="9" fill="#00d6d7"/><rect x="234" y="233" width="9" height="9" fill="#00d6c9"/><rect x="242" y="233" width="9" height="9" fill="#00d4b8"/><rect x="250" y="233" width="9" height="9" fill="#00d2a7"/><rect x="258" y="233" width="9" height="9" fill="#00d096"/><rect x="266" y="233" width="9" height="9" fill="#00ce81"/><rect x="274" y="233" width="9" height="9" fill="#00cc64"/><rect x="282" y="233" width="9" height="9" fill="#00c949"/><rect x="290" y="233" width="9" height="9" fill="#00c730"/><rect x="298" y="233" width="9" height="9" fill="#00c418"/><rect x="306" y="233" width="9" height="9" fill="#04c106"/><rect x="314" y="233" width="9" height="9" fill="#16be00"/><rect x="322" y="233" width="9" height="9" fill="#2fbb00"/><rect x="330" y="233" width="9" height="9" fill="#40b900"/><rect x="338" y="233" width="9" height="9" fill="#4db900"/><rect x="346" y="233" width="9" height="9" fill="#5cb800"/><rect x="354" y="233" width="9" height="9" fill="#6bb700"/><rect x="362" y="233" width="9" height="9" fill="#75b800"/><rect x="370" y="233" width="9" height="9" fill="#7db800"/><rect x="378" y="233" width="9" height="9" fill="#8ab800"/><rect x="866" y="233" width="9" height="9" fill="#2cb400"/><rect x="874" y="233" width="9" height="9" fill="#22b400"/><rect x="882" y="233" width="9" height="9" fill="#15b400"/><rect x="890" y="233" width="9" height="9" fill="#0bb400"/><rect x="898" y="233" width="9" height="9" fill="#01b404"/><rect x="906" y="233" width="9" height="9" fill="#00b40b"/><rect x="914" y="233" width="9" height="9" fill="#00b420"/><rect x="922" y="233" width="9" height="9" fill="#00b539"/><rect x="930" y="233" width="9" height="9" fill="#00b758"/><rect x="938" y="233" width="9" height="9" fill="#00b978"/><rect x="946" y="233" width="9" height="9" fill="#00bb8d"/><rect x="954" y="233" width="9" height="9" fill="#00bc9d"/><rect x="962" y="233" width="9" height="9" fill="#00beae"/><rect x="970" y="233" width="9" height="9" fill="#00bfbe"/><rect x="978" y="233" width="9" height="9" fill="#00b4c3"/><rect x="986" y="233" width="9" height="9" fill="#00a0c6"/><rect x="994" y="233" width="9" height="9" fill="#0083c9"/><rect x="1002" y="233" width="9" height="9" fill="#006bcc"/><rect x="1010" y="233" width="9" height="9" fill="#0069cf"/><rect x="1090" y="233" width="9" height="9" fill="#0d6be0"/><rect x="1098" y="233" width="9" height="9" fill="#0082de"/><rect x="1106" y="233" width="9" height="9" fill="#0082de"/><rect x="1114" y="233" width="9" height="9" fill="#0082de"/><rect x="98" y="241" width="9" height="9" fill="#00bcd1"/><rect x="106" y="241" width="9" height="9" fill="#00bdd1"/><rect x="114" y="241" width="9" height="9" fill="#00bed2"/><rect x="122" y="241" width="9" height="9" fill="#00bcd4"/><rect x="130" y="241" width="9" height="9" fill="#0078da"/><rect x="194" y="241" width="9" height="9" fill="#0075e0"/><rect x="202" y="241" width="9" height="9" fill="#00a6dc"/><rect x="210" y="241" width="9" height="9" fill="#00a6db"/><rect x="218" y="241" width="9" height="9" fill="#00b9d9"/><rect x="226" y="241" width="9" height="9" fill="#00ced6"/><rect x="234" y="241" width="9" height="9" fill="#00d4ca"/><rect x="242" y="241" width="9" height="9" fill="#00d1b6"/><rect x="250" y="241" width="9" height="9" fill="#00cea3"/><rect x="258" y="241" width="9" height="9" fill="#00cc8f"/><rect x="266" y="241" width="9" height="9" fill="#00c972"/><rect x="274" y="241" width="9" height="9" fill="#00c651"/><rect x="282" y="241" width="9" height="9" fill="#00c331"/><rect x="290" y="241" width="9" height="9" fill="#01be12"/><rect x="298" y="241" width="9" height="9" fill="#08bb02"/><rect x="306" y="241" width="9" height="9" fill="#1ab900"/><rect x="314" y="241" width="9" height="9" fill="#27b900"/><rect x="322" y="241" width="9" height="9" fill="#35b900"/><rect x="330" y="241" width="9" height="9" fill="#3fb900"/><rect x="338" y="241" width="9" height="9" fill="#4bb900"/><rect x="346" y="241" width="9" height="9" fill="#58b800"/><rect x="890" y="241" width="9" height="9" fill="#09b400"/><rect x="898" y="241" width="9" height="9" fill="#00b406"/><rect x="906" y="241" width="9" height="9" fill="#00b30d"/><rect x="914" y="241" width="9" height="9" fill="#00b41f"/><rect x="922" y="241" width="9" height="9" fill="#00b42c"/><rect x="930" y="241" width="9" height="9" fill="#00b439"/><rect x="938" y="241" width="9" height="9" fill="#00b451"/><rect x="946" y="241" width="9" height="9" fill="#00b674"/><rect x="954" y="241" width="9" height="9" fill="#00b88f"/><rect x="962" y="241" width="9" height="9" fill="#00baa4"/><rect x="970" y="241" width="9" height="9" fill="#00bcb8"/><rect x="978" y="241" width="9" height="9" fill="#00b2c0"/><rect x="986" y="241" width="9" height="9" fill="#0098c3"/><rect x="994" y="241" width="9" height="9" fill="#0075c7"/><rect x="1002" y="241" width="9" height="9" fill="#006ac9"/><rect x="1010" y="241" width="9" height="9" fill="#0069cb"/><rect x="1098" y="241" width="9" height="9" fill="#0280de"/><rect x="1106" y="241" width="9" height="9" fill="#0082de"/><rect x="98" y="249" width="9" height="9" fill="#00bcd1"/><rect x="106" y="249" width="9" height="9" fill="#00bcd1"/><rect x="114" y="249" width="9" height="9" fill="#00bcd1"/><rect x="122" y="249" width="9" height="9" fill="#00a0d3"/><rect x="202" y="249" width="9" height="9" fill="#00a4da"/><rect x="210" y="249" width="9" height="9" fill="#00a3d9"/><rect x="218" y="249" width="9" height="9" fill="#00aad7"/><rect x="226" y="249" width="9" height="9" fill="#00c6d4"/><rect x="234" y="249" width="9" height="9" fill="#00d0c8"/><rect x="242" y="249" width="9" height="9" fill="#00cdb1"/><rect x="250" y="249" width="9" height="9" fill="#00ca99"/><rect x="258" y="249" width="9" height="9" fill="#00c67d"/><rect x="266" y="249" width="9" height="9" fill="#00c253"/><rect x="274" y="249" width="9" height="9" fill="#00be2b"/><rect x="282" y="249" width="9" height="9" fill="#00bb10"/><rect x="290" y="249" width="9" height="9" fill="#01ba03"/><rect x="298" y="249" width="9" height="9" fill="#0aba00"/><rect x="306" y="249" width="9" height="9" fill="#17b900"/><rect x="314" y="249" width="9" height="9" fill="#24b900"/><rect x="922" y="249" width="9" height="9" fill="#00b32e"/><rect x="930" y="249" width="9" height="9" fill="#00b33c"/><rect x="938" y="249" width="9" height="9" fill="#00b34b"/><rect x="946" y="249" width="9" height="9" fill="#00b461"/><rect x="954" y="249" width="9" height="9" fill="#00b475"/><rect x="962" y="249" width="9" height="9" fill="#00b690"/><rect x="970" y="249" width="9" height="9" fill="#00b8ab"/><rect x="978" y="249" width="9" height="9" fill="#00b3bb"/><rect x="986" y="249" width="9" height="9" fill="#0095c0"/><rect x="994" y="249" width="9" height="9" fill="#006ec4"/><rect x="1002" y="249" width="9" height="9" fill="#0069c6"/><rect x="106" y="257" width="9" height="9" fill="#00bcd1"/><rect x="114" y="257" width="9" height="9" fill="#00b9d1"/><rect x="210" y="257" width="9" height="9" fill="#00a2d6"/><rect x="218" y="257" width="9" height="9" fill="#00a3d4"/><rect x="226" y="257" width="9" height="9" fill="#00bfd1"/><rect x="234" y="257" width="9" height="9" fill="#00ccc2"/><rect x="242" y="257" width="9" height="9" fill="#00c8a5"/><rect x="250" y="257" width="9" height="9" fill="#00c382"/><rect x="258" y="257" width="9" height="9" fill="#00be51"/><rect x="266" y="257" width="9" height="9" fill="#00bb32"/><rect x="274" y="257" width="9" height="9" fill="#00bb21"/><rect x="282" y="257" width="9" height="9" fill="#00ba13"/><rect x="290" y="257" width="9" height="9" fill="#00ba06"/><rect x="298" y="257" width="9" height="9" fill="#07b900"/><rect x="938" y="257" width="9" height="9" fill="#00b351"/><rect x="946" y="257" width="9" height="9" fill="#00b369"/><rect x="954" y="257" width="9" height="9" fill="#00b376"/><rect x="962" y="257" width="9" height="9" fill="#00b385"/><rect x="970" y="257" width="9" height="9" fill="#00b495"/><rect x="978" y="257" width="9" height="9" fill="#00b5af"/><rect x="986" y="257" width="9" height="9" fill="#0099bc"/><rect x="994" y="257" width="9" height="9" fill="#0070c1"/><rect x="1002" y="257" width="9" height="9" fill="#006bc1"/><rect x="210" y="265" width="9" height="9" fill="#029ed2"/><rect x="218" y="265" width="9" height="9" fill="#00a1d1"/><rect x="226" y="265" width="9" height="9" fill="#00bbcd"/><rect x="234" y="265" width="9" height="9" fill="#00c7b3"/><rect x="242" y="265" width="9" height="9" fill="#00c089"/><rect x="250" y="265" width="9" height="9" fill="#00bc5e"/><rect x="258" y="265" width="9" height="9" fill="#00bc4b"/><rect x="266" y="265" width="9" height="9" fill="#00bb38"/><rect x="274" y="265" width="9" height="9" fill="#00bb28"/><rect x="962" y="265" width="9" height="9" fill="#6951b5"/><rect x="970" y="265" width="9" height="9" fill="#1e98a2"/><rect x="978" y="265" width="9" height="9" fill="#00b4a6"/><rect x="986" y="265" width="9" height="9" fill="#00abb6"/><rect x="994" y="265" width="9" height="9" fill="#008abc"/><rect x="1002" y="265" width="9" height="9" fill="#4847cc"/><rect x="210" y="273" width="9" height="9" fill="#435dd7"/><rect x="218" y="273" width="9" height="9" fill="#00a8cf"/><rect x="226" y="273" width="9" height="9" fill="#00c1c3"/><rect x="234" y="273" width="9" height="9" fill="#00c09a"/><rect x="242" y="273" width="9" height="9" fill="#03ba83"/><rect x="250" y="273" width="9" height="9" fill="#35818d"/><rect x="258" y="273" width="9" height="9" fill="#546196"/><rect x="970" y="273" width="9" height="9" fill="#c108d9"/><rect x="978" y="273" width="9" height="9" fill="#566ec2"/><rect x="986" y="273" width="9" height="9" fill="#04afb6"/><rect x="994" y="273" width="9" height="9" fill="#5861ca"/><rect x="218" y="281" width="9" height="9" fill="#417ad2"/><rect x="226" y="281" width="9" height="9" fill="#00c3b0"/><rect x="234" y="281" width="9" height="9" fill="#16aba7"/><rect x="242" y="281" width="9" height="9" fill="#8932ca"/><rect x="234" y="289" width="9" height="9" fill="#c506df"/></g><g mask="url(#tf)"><g filter="url(#tb)"><rect x="1034" y="193" width="9" height="9" fill="#00a1dd"/><rect x="1042" y="193" width="9" height="9" fill="#008bdd"/><rect x="1050" y="193" width="9" height="9" fill="#006ee0"/><rect x="1058" y="193" width="9" height="9" fill="#0071e1"/><rect x="1066" y="193" width="9" height="9" fill="#0076e2"/><rect x="1074" y="193" width="9" height="9" fill="#0077e2"/><rect x="162" y="201" width="9" height="9" fill="#00b4e1"/><rect x="1018" y="201" width="9" height="9" fill="#009dd9"/><rect x="1026" y="201" width="9" height="9" fill="#0093db"/><rect x="1034" y="201" width="9" height="9" fill="#008add"/><rect x="1042" y="201" width="9" height="9" fill="#0078de"/><rect x="1050" y="201" width="9" height="9" fill="#006ee0"/><rect x="1058" y="201" width="9" height="9" fill="#0071e1"/><rect x="1066" y="201" width="9" height="9" fill="#0076e2"/><rect x="1074" y="201" width="9" height="9" fill="#0077e2"/><rect x="1082" y="201" width="9" height="9" fill="#0079e2"/><rect x="1090" y="201" width="9" height="9" fill="#007ae2"/><rect x="130" y="209" width="9" height="9" fill="#00b9dc"/><rect x="138" y="209" width="9" height="9" fill="#00b8de"/><rect x="146" y="209" width="9" height="9" fill="#00b7df"/><rect x="154" y="209" width="9" height="9" fill="#00b5e0"/><rect x="162" y="209" width="9" height="9" fill="#00b4e1"/><rect x="170" y="209" width="9" height="9" fill="#00bae1"/><rect x="178" y="209" width="9" height="9" fill="#00c7e1"/><rect x="186" y="209" width="9" height="9" fill="#00d3e1"/><rect x="194" y="209" width="9" height="9" fill="#00d9e1"/><rect x="1010" y="209" width="9" height="9" fill="#0094d5"/><rect x="1018" y="209" width="9" height="9" fill="#0083d8"/><rect x="1026" y="209" width="9" height="9" fill="#0073da"/><rect x="1034" y="209" width="9" height="9" fill="#0064dc"/><rect x="1042" y="209" width="9" height="9" fill="#005ade"/><rect x="1050" y="209" width="9" height="9" fill="#0055e0"/><rect x="1058" y="209" width="9" height="9" fill="#0058e1"/><rect x="1066" y="209" width="9" height="9" fill="#0061e2"/><rect x="1074" y="209" width="9" height="9" fill="#006ee2"/><rect x="1082" y="209" width="9" height="9" fill="#0079e2"/><rect x="1090" y="209" width="9" height="9" fill="#007ae2"/><rect x="1098" y="209" width="9" height="9" fill="#007be1"/><rect x="122" y="217" width="9" height="9" fill="#00b9da"/><rect x="130" y="217" width="9" height="9" fill="#00b9dc"/><rect x="138" y="217" width="9" height="9" fill="#00b8dd"/><rect x="146" y="217" width="9" height="9" fill="#00b5df"/><rect x="154" y="217" width="9" height="9" fill="#00b0e0"/><rect x="162" y="217" width="9" height="9" fill="#00aee1"/><rect x="170" y="217" width="9" height="9" fill="#00ade1"/><rect x="178" y="217" width="9" height="9" fill="#00b5e1"/><rect x="186" y="217" width="9" height="9" fill="#00bce1"/><rect x="194" y="217" width="9" height="9" fill="#00c5e1"/><rect x="202" y="217" width="9" height="9" fill="#00cfe0"/><rect x="1002" y="217" width="9" height="9" fill="#0093d1"/><rect x="1010" y="217" width="9" height="9" fill="#0072d4"/><rect x="1018" y="217" width="9" height="9" fill="#005ed6"/><rect x="1026" y="217" width="9" height="9" fill="#0044d9"/><rect x="1034" y="217" width="9" height="9" fill="#0031dc"/><rect x="1042" y="217" width="9" height="9" fill="#0026de"/><rect x="1050" y="217" width="9" height="9" fill="#0021df"/><rect x="1058" y="217" width="9" height="9" fill="#0023e1"/><rect x="1066" y="217" width="9" height="9" fill="#002ae2"/><rect x="1074" y="217" width="9" height="9" fill="#003ae2"/><rect x="1082" y="217" width="9" height="9" fill="#0054e2"/><rect x="1090" y="217" width="9" height="9" fill="#0072e1"/><rect x="1098" y="217" width="9" height="9" fill="#007ce0"/><rect x="1106" y="217" width="9" height="9" fill="#007ce0"/><rect x="114" y="225" width="9" height="9" fill="#00b6d7"/><rect x="122" y="225" width="9" height="9" fill="#00b9d9"/><rect x="130" y="225" width="9" height="9" fill="#00b5db"/><rect x="138" y="225" width="9" height="9" fill="#00a7dd"/><rect x="146" y="225" width="9" height="9" fill="#009adf"/><rect x="154" y="225" width="9" height="9" fill="#0092e0"/><rect x="162" y="225" width="9" height="9" fill="#008ee1"/><rect x="170" y="225" width="9" height="9" fill="#008fe1"/><rect x="178" y="225" width="9" height="9" fill="#0094e1"/><rect x="186" y="225" width="9" height="9" fill="#009de1"/><rect x="194" y="225" width="9" height="9" fill="#00aae0"/><rect x="202" y="225" width="9" height="9" fill="#00b6df"/><rect x="210" y="225" width="9" height="9" fill="#00cdde"/><rect x="994" y="225" width="9" height="9" fill="#009acc"/><rect x="1002" y="225" width="9" height="9" fill="#006acf"/><rect x="1010" y="225" width="9" height="9" fill="#0052d2"/><rect x="1018" y="225" width="9" height="9" fill="#002ed6"/><rect x="1026" y="225" width="9" height="9" fill="#0113d9"/><rect x="1034" y="225" width="9" height="9" fill="#0607dc"/><rect x="1042" y="225" width="9" height="9" fill="#0d02de"/><rect x="1050" y="225" width="9" height="9" fill="#0f01e0"/><rect x="1058" y="225" width="9" height="9" fill="#0d02e1"/><rect x="1066" y="225" width="9" height="9" fill="#0704e2"/><rect x="1074" y="225" width="9" height="9" fill="#020ce2"/><rect x="1082" y="225" width="9" height="9" fill="#001ee2"/><rect x="1090" y="225" width="9" height="9" fill="#003ee2"/><rect x="1098" y="225" width="9" height="9" fill="#006ee0"/><rect x="1106" y="225" width="9" height="9" fill="#007adf"/><rect x="1114" y="225" width="9" height="9" fill="#007ade"/><rect x="106" y="233" width="9" height="9" fill="#00b8d4"/><rect x="114" y="233" width="9" height="9" fill="#00b6d5"/><rect x="122" y="233" width="9" height="9" fill="#00add8"/><rect x="130" y="233" width="9" height="9" fill="#0096dc"/><rect x="138" y="233" width="9" height="9" fill="#0084de"/><rect x="146" y="233" width="9" height="9" fill="#0074df"/><rect x="154" y="233" width="9" height="9" fill="#0068e0"/><rect x="162" y="233" width="9" height="9" fill="#0062e1"/><rect x="170" y="233" width="9" height="9" fill="#0061e1"/><rect x="178" y="233" width="9" height="9" fill="#0068e1"/><rect x="186" y="233" width="9" height="9" fill="#0076e0"/><rect x="194" y="233" width="9" height="9" fill="#0089df"/><rect x="202" y="233" width="9" height="9" fill="#009dde"/><rect x="210" y="233" width="9" height="9" fill="#00a8dd"/><rect x="218" y="233" width="9" height="9" fill="#00ccda"/><rect x="986" y="233" width="9" height="9" fill="#00a7c7"/><rect x="994" y="233" width="9" height="9" fill="#0070cb"/><rect x="1002" y="233" width="9" height="9" fill="#0056cd"/><rect x="1010" y="233" width="9" height="9" fill="#0023d2"/><rect x="1018" y="233" width="9" height="9" fill="#0d05d7"/><rect x="1026" y="233" width="9" height="9" fill="#2900da"/><rect x="1034" y="233" width="9" height="9" fill="#3d00dd"/><rect x="1042" y="233" width="9" height="9" fill="#4600df"/><rect x="1050" y="233" width="9" height="9" fill="#4800e0"/><rect x="1058" y="233" width="9" height="9" fill="#4200e1"/><rect x="1066" y="233" width="9" height="9" fill="#3600e2"/><rect x="1074" y="233" width="9" height="9" fill="#2400e2"/><rect x="1082" y="233" width="9" height="9" fill="#0f01e2"/><rect x="1090" y="233" width="9" height="9" fill="#010fe2"/><rect x="1098" y="233" width="9" height="9" fill="#0039e0"/><rect x="1106" y="233" width="9" height="9" fill="#006fde"/><rect x="1114" y="233" width="9" height="9" fill="#006ddd"/><rect x="98" y="241" width="9" height="9" fill="#00b7d0"/><rect x="106" y="241" width="9" height="9" fill="#00b8d1"/><rect x="114" y="241" width="9" height="9" fill="#00add4"/><rect x="122" y="241" width="9" height="9" fill="#008cd9"/><rect x="130" y="241" width="9" height="9" fill="#0071dc"/><rect x="138" y="241" width="9" height="9" fill="#0057de"/><rect x="146" y="241" width="9" height="9" fill="#0043df"/><rect x="154" y="241" width="9" height="9" fill="#0034e0"/><rect x="162" y="241" width="9" height="9" fill="#002ce1"/><rect x="170" y="241" width="9" height="9" fill="#0029e1"/><rect x="178" y="241" width="9" height="9" fill="#002de1"/><rect x="186" y="241" width="9" height="9" fill="#003ae0"/><rect x="194" y="241" width="9" height="9" fill="#0055df"/><rect x="202" y="241" width="9" height="9" fill="#0079dd"/><rect x="210" y="241" width="9" height="9" fill="#0099db"/><rect x="218" y="241" width="9" height="9" fill="#00a8d9"/><rect x="226" y="241" width="9" height="9" fill="#00d3d6"/><rect x="986" y="241" width="9" height="9" fill="#0072c7"/><rect x="994" y="241" width="9" height="9" fill="#0063c8"/><rect x="1002" y="241" width="9" height="9" fill="#012bcd"/><rect x="1010" y="241" width="9" height="9" fill="#2302d4"/><rect x="1018" y="241" width="9" height="9" fill="#5100d9"/><rect x="1026" y="241" width="9" height="9" fill="#6300dc"/><rect x="1034" y="241" width="9" height="9" fill="#6900de"/><rect x="1042" y="241" width="9" height="9" fill="#6b00e0"/><rect x="1050" y="241" width="9" height="9" fill="#6900e1"/><rect x="1058" y="241" width="9" height="9" fill="#6600e2"/><rect x="1066" y="241" width="9" height="9" fill="#5f00e2"/><rect x="1074" y="241" width="9" height="9" fill="#5300e3"/><rect x="1082" y="241" width="9" height="9" fill="#3c00e3"/><rect x="1090" y="241" width="9" height="9" fill="#1c00e2"/><rect x="1098" y="241" width="9" height="9" fill="#030ce1"/><rect x="1106" y="241" width="9" height="9" fill="#0048de"/><rect x="1114" y="241" width="9" height="9" fill="#0064dc"/><rect x="1122" y="241" width="9" height="9" fill="#005adc"/><rect x="98" y="249" width="9" height="9" fill="#00aecf"/><rect x="106" y="249" width="9" height="9" fill="#00b0d0"/><rect x="114" y="249" width="9" height="9" fill="#008cd5"/><rect x="122" y="249" width="9" height="9" fill="#0067d9"/><rect x="130" y="249" width="9" height="9" fill="#0045dc"/><rect x="138" y="249" width="9" height="9" fill="#002bdd"/><rect x="146" y="249" width="9" height="9" fill="#0018df"/><rect x="154" y="249" width="9" height="9" fill="#010be0"/><rect x="162" y="249" width="9" height="9" fill="#0605e0"/><rect x="170" y="249" width="9" height="9" fill="#0b03e1"/><rect x="178" y="249" width="9" height="9" fill="#0c03e1"/><rect x="186" y="249" width="9" height="9" fill="#0906e0"/><rect x="194" y="249" width="9" height="9" fill="#0313df"/><rect x="202" y="249" width="9" height="9" fill="#0037de"/><rect x="210" y="249" width="9" height="9" fill="#0075db"/><rect x="218" y="249" width="9" height="9" fill="#009dd8"/><rect x="226" y="249" width="9" height="9" fill="#00abd6"/><rect x="234" y="249" width="9" height="9" fill="#00cdcd"/><rect x="978" y="249" width="9" height="9" fill="#105dc5"/><rect x="986" y="249" width="9" height="9" fill="#0066c4"/><rect x="994" y="249" width="9" height="9" fill="#0050c6"/><rect x="1002" y="249" width="9" height="9" fill="#2f06d0"/><rect x="1010" y="249" width="9" height="9" fill="#6c00d8"/><rect x="1018" y="249" width="9" height="9" fill="#7c00dc"/><rect x="1026" y="249" width="9" height="9" fill="#8100df"/><rect x="1034" y="249" width="9" height="9" fill="#8300e0"/><rect x="1042" y="249" width="9" height="9" fill="#8200e1"/><rect x="1050" y="249" width="9" height="9" fill="#7e00e2"/><rect x="1058" y="249" width="9" height="9" fill="#7900e2"/><rect x="1066" y="249" width="9" height="9" fill="#7200e3"/><rect x="1074" y="249" width="9" height="9" fill="#6a00e3"/><rect x="1082" y="249" width="9" height="9" fill="#5e00e2"/><rect x="1090" y="249" width="9" height="9" fill="#4700e2"/><rect x="1098" y="249" width="9" height="9" fill="#1e00e1"/><rect x="1106" y="249" width="9" height="9" fill="#0119de"/><rect x="1114" y="249" width="9" height="9" fill="#004bdb"/><rect x="1122" y="249" width="9" height="9" fill="#004cda"/><rect x="90" y="257" width="9" height="9" fill="#00a1cd"/><rect x="98" y="257" width="9" height="9" fill="#00a2ce"/><rect x="106" y="257" width="9" height="9" fill="#0099d0"/><rect x="114" y="257" width="9" height="9" fill="#0069d6"/><rect x="122" y="257" width="9" height="9" fill="#003ed9"/><rect x="130" y="257" width="9" height="9" fill="#001fdb"/><rect x="138" y="257" width="9" height="9" fill="#0209dd"/><rect x="146" y="257" width="9" height="9" fill="#0e01de"/><rect x="154" y="257" width="9" height="9" fill="#2000df"/><rect x="162" y="257" width="9" height="9" fill="#3200e0"/><rect x="170" y="257" width="9" height="9" fill="#3f00e0"/><rect x="178" y="257" width="9" height="9" fill="#4700e1"/><rect x="186" y="257" width="9" height="9" fill="#4800e1"/><rect x="194" y="257" width="9" height="9" fill="#3f00e0"/><rect x="202" y="257" width="9" height="9" fill="#2502df"/><rect x="210" y="257" width="9" height="9" fill="#0629dc"/><rect x="218" y="257" width="9" height="9" fill="#0089d6"/><rect x="226" y="257" width="9" height="9" fill="#009ed4"/><rect x="234" y="257" width="9" height="9" fill="#00a0d3"/><rect x="970" y="257" width="9" height="9" fill="#a300d7"/><rect x="978" y="257" width="9" height="9" fill="#8e05d5"/><rect x="986" y="257" width="9" height="9" fill="#492fcd"/><rect x="994" y="257" width="9" height="9" fill="#4027cd"/><rect x="1002" y="257" width="9" height="9" fill="#8900da"/><rect x="1010" y="257" width="9" height="9" fill="#9600dd"/><rect x="1018" y="257" width="9" height="9" fill="#9a00df"/><rect x="1026" y="257" width="9" height="9" fill="#9a00e1"/><rect x="1034" y="257" width="9" height="9" fill="#9900e1"/><rect x="1042" y="257" width="9" height="9" fill="#9500e2"/><rect x="1050" y="257" width="9" height="9" fill="#9000e3"/><rect x="1058" y="257" width="9" height="9" fill="#8a00e3"/><rect x="1066" y="257" width="9" height="9" fill="#8200e3"/><rect x="1074" y="257" width="9" height="9" fill="#7900e3"/><rect x="1082" y="257" width="9" height="9" fill="#6e00e2"/><rect x="1090" y="257" width="9" height="9" fill="#6100e1"/><rect x="1098" y="257" width="9" height="9" fill="#4300e0"/><rect x="1106" y="257" width="9" height="9" fill="#1003de"/><rect x="1114" y="257" width="9" height="9" fill="#0031da"/><rect x="1122" y="257" width="9" height="9" fill="#0038d9"/><rect x="90" y="265" width="9" height="9" fill="#009acb"/><rect x="98" y="265" width="9" height="9" fill="#009bcc"/><rect x="106" y="265" width="9" height="9" fill="#007dd0"/><rect x="114" y="265" width="9" height="9" fill="#0044d5"/><rect x="122" y="265" width="9" height="9" fill="#001dd8"/><rect x="130" y="265" width="9" height="9" fill="#0405da"/><rect x="138" y="265" width="9" height="9" fill="#1900dc"/><rect x="146" y="265" width="9" height="9" fill="#3400dd"/><rect x="154" y="265" width="9" height="9" fill="#4c00de"/><rect x="162" y="265" width="9" height="9" fill="#5a00df"/><rect x="170" y="265" width="9" height="9" fill="#6300e0"/><rect x="178" y="265" width="9" height="9" fill="#6800e0"/><rect x="186" y="265" width="9" height="9" fill="#6c00e1"/><rect x="194" y="265" width="9" height="9" fill="#6e00e1"/><rect x="202" y="265" width="9" height="9" fill="#6c00e0"/><rect x="210" y="265" width="9" height="9" fill="#5a00df"/><rect x="218" y="265" width="9" height="9" fill="#233bd9"/><rect x="226" y="265" width="9" height="9" fill="#147dd4"/><rect x="234" y="265" width="9" height="9" fill="#5531da"/><rect x="242" y="265" width="9" height="9" fill="#8900de"/><rect x="954" y="265" width="9" height="9" fill="#c100d9"/><rect x="962" y="265" width="9" height="9" fill="#b800d9"/><rect x="970" y="265" width="9" height="9" fill="#a900d7"/><rect x="978" y="265" width="9" height="9" fill="#a000d7"/><rect x="986" y="265" width="9" height="9" fill="#9f00d9"/><rect x="994" y="265" width="9" height="9" fill="#aa00dc"/><rect x="1002" y="265" width="9" height="9" fill="#b000df"/><rect x="1010" y="265" width="9" height="9" fill="#b100e0"/><rect x="1018" y="265" width="9" height="9" fill="#b000e1"/><rect x="1026" y="265" width="9" height="9" fill="#ae00e2"/><rect x="1034" y="265" width="9" height="9" fill="#aa00e2"/><rect x="1042" y="265" width="9" height="9" fill="#a500e3"/><rect x="1050" y="265" width="9" height="9" fill="#9f00e3"/><rect x="1058" y="265" width="9" height="9" fill="#9800e3"/><rect x="1066" y="265" width="9" height="9" fill="#9000e3"/><rect x="1074" y="265" width="9" height="9" fill="#8600e2"/><rect x="1082" y="265" width="9" height="9" fill="#7b00e2"/><rect x="1090" y="265" width="9" height="9" fill="#6e00e1"/><rect x="1098" y="265" width="9" height="9" fill="#5c00e0"/><rect x="1106" y="265" width="9" height="9" fill="#2e00dd"/><rect x="1114" y="265" width="9" height="9" fill="#0119d9"/><rect x="1122" y="265" width="9" height="9" fill="#0025d8"/><rect x="90" y="273" width="9" height="9" fill="#008eca"/><rect x="98" y="273" width="9" height="9" fill="#008ccb"/><rect x="106" y="273" width="9" height="9" fill="#005ed0"/><rect x="114" y="273" width="9" height="9" fill="#0027d4"/><rect x="122" y="273" width="9" height="9" fill="#0307d7"/><rect x="130" y="273" width="9" height="9" fill="#1c00d9"/><rect x="138" y="273" width="9" height="9" fill="#3c00db"/><rect x="146" y="273" width="9" height="9" fill="#5500dc"/><rect x="154" y="273" width="9" height="9" fill="#6200dd"/><rect x="162" y="273" width="9" height="9" fill="#6b00de"/><rect x="170" y="273" width="9" height="9" fill="#7400df"/><rect x="178" y="273" width="9" height="9" fill="#7b00e0"/><rect x="186" y="273" width="9" height="9" fill="#8100e0"/><rect x="194" y="273" width="9" height="9" fill="#8600e0"/><rect x="202" y="273" width="9" height="9" fill="#8900e1"/><rect x="210" y="273" width="9" height="9" fill="#8900e0"/><rect x="218" y="273" width="9" height="9" fill="#8400e0"/><rect x="226" y="273" width="9" height="9" fill="#7b00de"/><rect x="234" y="273" width="9" height="9" fill="#8300de"/><rect x="242" y="273" width="9" height="9" fill="#9000de"/><rect x="250" y="273" width="9" height="9" fill="#a000de"/><rect x="258" y="273" width="9" height="9" fill="#aa00de"/><rect x="930" y="273" width="9" height="9" fill="#da00d9"/><rect x="938" y="273" width="9" height="9" fill="#d500da"/><rect x="946" y="273" width="9" height="9" fill="#cc00d9"/><rect x="954" y="273" width="9" height="9" fill="#c500d9"/><rect x="962" y="273" width="9" height="9" fill="#be00d9"/><rect x="970" y="273" width="9" height="9" fill="#ba00da"/><rect x="978" y="273" width="9" height="9" fill="#bf00dc"/><rect x="986" y="273" width="9" height="9" fill="#c500df"/><rect x="994" y="273" width="9" height="9" fill="#c600e0"/><rect x="1002" y="273" width="9" height="9" fill="#c600e1"/><rect x="1010" y="273" width="9" height="9" fill="#c300e2"/><rect x="1018" y="273" width="9" height="9" fill="#c000e2"/><rect x="1026" y="273" width="9" height="9" fill="#bc00e3"/><rect x="1034" y="273" width="9" height="9" fill="#b800e3"/><rect x="1042" y="273" width="9" height="9" fill="#b200e3"/><rect x="1050" y="273" width="9" height="9" fill="#ab00e3"/><rect x="1058" y="273" width="9" height="9" fill="#a400e3"/><rect x="1066" y="273" width="9" height="9" fill="#9b00e2"/><rect x="1074" y="273" width="9" height="9" fill="#9100e2"/><rect x="1082" y="273" width="9" height="9" fill="#8600e1"/><rect x="1090" y="273" width="9" height="9" fill="#7800e0"/><rect x="1098" y="273" width="9" height="9" fill="#6700df"/><rect x="1106" y="273" width="9" height="9" fill="#4800dc"/><rect x="1114" y="273" width="9" height="9" fill="#080bd8"/><rect x="1122" y="273" width="9" height="9" fill="#0019d6"/><rect x="1130" y="273" width="9" height="9" fill="#001cd6"/><rect x="90" y="281" width="9" height="9" fill="#0083c9"/><rect x="98" y="281" width="9" height="9" fill="#0080c9"/><rect x="106" y="281" width="9" height="9" fill="#0044cf"/><rect x="114" y="281" width="9" height="9" fill="#0011d3"/><rect x="122" y="281" width="9" height="9" fill="#1300d6"/><rect x="130" y="281" width="9" height="9" fill="#3800d8"/><rect x="138" y="281" width="9" height="9" fill="#5600da"/><rect x="146" y="281" width="9" height="9" fill="#6300db"/><rect x="154" y="281" width="9" height="9" fill="#6f00dc"/><rect x="162" y="281" width="9" height="9" fill="#7900dd"/><rect x="170" y="281" width="9" height="9" fill="#8200de"/><rect x="178" y="281" width="9" height="9" fill="#8a00df"/><rect x="186" y="281" width="9" height="9" fill="#9100df"/><rect x="194" y="281" width="9" height="9" fill="#9700e0"/><rect x="202" y="281" width="9" height="9" fill="#9d00e0"/><rect x="210" y="281" width="9" height="9" fill="#a100e0"/><rect x="218" y="281" width="9" height="9" fill="#a400e0"/><rect x="226" y="281" width="9" height="9" fill="#a500e0"/><rect x="234" y="281" width="9" height="9" fill="#a000df"/><rect x="242" y="281" width="9" height="9" fill="#9e00df"/><rect x="250" y="281" width="9" height="9" fill="#a600de"/><rect x="258" y="281" width="9" height="9" fill="#b000de"/><rect x="266" y="281" width="9" height="9" fill="#b800de"/><rect x="274" y="281" width="9" height="9" fill="#c000de"/><rect x="282" y="281" width="9" height="9" fill="#ca00de"/><rect x="906" y="281" width="9" height="9" fill="#db00c2"/><rect x="914" y="281" width="9" height="9" fill="#db00c9"/><rect x="922" y="281" width="9" height="9" fill="#da00d1"/><rect x="930" y="281" width="9" height="9" fill="#db00d7"/><rect x="938" y="281" width="9" height="9" fill="#d800da"/><rect x="946" y="281" width="9" height="9" fill="#d200da"/><rect x="954" y="281" width="9" height="9" fill="#d300dc"/><rect x="962" y="281" width="9" height="9" fill="#d600de"/><rect x="970" y="281" width="9" height="9" fill="#d900df"/><rect x="978" y="281" width="9" height="9" fill="#da00e1"/><rect x="986" y="281" width="9" height="9" fill="#d900e1"/><rect x="994" y="281" width="9" height="9" fill="#d700e2"/><rect x="1002" y="281" width="9" height="9" fill="#d400e2"/><rect x="1010" y="281" width="9" height="9" fill="#d100e3"/><rect x="1018" y="281" width="9" height="9" fill="#cd00e3"/><rect x="1026" y="281" width="9" height="9" fill="#c800e3"/><rect x="1034" y="281" width="9" height="9" fill="#c200e3"/><rect x="1042" y="281" width="9" height="9" fill="#bc00e3"/><rect x="1050" y="281" width="9" height="9" fill="#b500e3"/><rect x="1058" y="281" width="9" height="9" fill="#ad00e2"/><rect x="1066" y="281" width="9" height="9" fill="#a400e2"/><rect x="1074" y="281" width="9" height="9" fill="#9a00e1"/><rect x="1082" y="281" width="9" height="9" fill="#8e00e0"/><rect x="1090" y="281" width="9" height="9" fill="#8100df"/><rect x="1098" y="281" width="9" height="9" fill="#7000de"/><rect x="1106" y="281" width="9" height="9" fill="#5700db"/><rect x="1114" y="281" width="9" height="9" fill="#1305d7"/><rect x="1122" y="281" width="9" height="9" fill="#0310d5"/><rect x="1130" y="281" width="9" height="9" fill="#0013d5"/><rect x="90" y="289" width="9" height="9" fill="#0072c8"/><rect x="98" y="289" width="9" height="9" fill="#006fc8"/><rect x="106" y="289" width="9" height="9" fill="#002fce"/><rect x="114" y="289" width="9" height="9" fill="#0505d2"/><rect x="122" y="289" width="9" height="9" fill="#2900d4"/><rect x="130" y="289" width="9" height="9" fill="#4f00d6"/><rect x="138" y="289" width="9" height="9" fill="#6100d8"/><rect x="146" y="289" width="9" height="9" fill="#6d00da"/><rect x="154" y="289" width="9" height="9" fill="#7900db"/><rect x="162" y="289" width="9" height="9" fill="#8300dc"/><rect x="170" y="289" width="9" height="9" fill="#8d00dd"/><rect x="178" y="289" width="9" height="9" fill="#9500de"/><rect x="186" y="289" width="9" height="9" fill="#9d00de"/><rect x="194" y="289" width="9" height="9" fill="#a500df"/><rect x="202" y="289" width="9" height="9" fill="#ab00e0"/><rect x="210" y="289" width="9" height="9" fill="#b100e0"/><rect x="218" y="289" width="9" height="9" fill="#b600e0"/><rect x="226" y="289" width="9" height="9" fill="#ba00e0"/><rect x="234" y="289" width="9" height="9" fill="#bd00e0"/><rect x="242" y="289" width="9" height="9" fill="#bf00e0"/><rect x="250" y="289" width="9" height="9" fill="#be00e0"/><rect x="258" y="289" width="9" height="9" fill="#bd00df"/><rect x="266" y="289" width="9" height="9" fill="#be00de"/><rect x="274" y="289" width="9" height="9" fill="#c400de"/><rect x="282" y="289" width="9" height="9" fill="#cd00de"/><rect x="290" y="289" width="9" height="9" fill="#d300de"/><rect x="298" y="289" width="9" height="9" fill="#d800de"/><rect x="306" y="289" width="9" height="9" fill="#de00db"/><rect x="314" y="289" width="9" height="9" fill="#de00d6"/><rect x="866" y="289" width="9" height="9" fill="#dc009d"/><rect x="874" y="289" width="9" height="9" fill="#db00a5"/><rect x="882" y="289" width="9" height="9" fill="#db00ab"/><rect x="890" y="289" width="9" height="9" fill="#db00b2"/><rect x="898" y="289" width="9" height="9" fill="#dc00b7"/><rect x="906" y="289" width="9" height="9" fill="#db00c0"/><rect x="914" y="289" width="9" height="9" fill="#db00c6"/><rect x="922" y="289" width="9" height="9" fill="#db00cc"/><rect x="930" y="289" width="9" height="9" fill="#dc00ce"/><rect x="938" y="289" width="9" height="9" fill="#de00cf"/><rect x="946" y="289" width="9" height="9" fill="#e000d0"/><rect x="954" y="289" width="9" height="9" fill="#e100d2"/><rect x="962" y="289" width="9" height="9" fill="#e100d4"/><rect x="970" y="289" width="9" height="9" fill="#e200d8"/><rect x="978" y="289" width="9" height="9" fill="#e200dc"/><rect x="986" y="289" width="9" height="9" fill="#e200df"/><rect x="994" y="289" width="9" height="9" fill="#e100e2"/><rect x="1002" y="289" width="9" height="9" fill="#de00e3"/><rect x="1010" y="289" width="9" height="9" fill="#da00e3"/><rect x="1018" y="289" width="9" height="9" fill="#d600e3"/><rect x="1026" y="289" width="9" height="9" fill="#d000e3"/><rect x="1034" y="289" width="9" height="9" fill="#cb00e3"/><rect x="1042" y="289" width="9" height="9" fill="#c400e2"/><rect x="1050" y="289" width="9" height="9" fill="#bd00e2"/><rect x="1058" y="289" width="9" height="9" fill="#b500e2"/><rect x="1066" y="289" width="9" height="9" fill="#ac00e1"/><rect x="1074" y="289" width="9" height="9" fill="#a100e0"/><rect x="1082" y="289" width="9" height="9" fill="#9500df"/><rect x="1090" y="289" width="9" height="9" fill="#8700de"/><rect x="1098" y="289" width="9" height="9" fill="#7600dc"/><rect x="1106" y="289" width="9" height="9" fill="#5e00da"/><rect x="1114" y="289" width="9" height="9" fill="#1a00d5"/><rect x="1122" y="289" width="9" height="9" fill="#0a00d4"/><rect x="90" y="297" width="9" height="9" fill="#006ec6"/><rect x="98" y="297" width="9" height="9" fill="#0064c6"/><rect x="106" y="297" width="9" height="9" fill="#0023cc"/><rect x="114" y="297" width="9" height="9" fill="#1001d0"/><rect x="122" y="297" width="9" height="9" fill="#3d00d3"/><rect x="130" y="297" width="9" height="9" fill="#5a00d5"/><rect x="138" y="297" width="9" height="9" fill="#6900d7"/><rect x="146" y="297" width="9" height="9" fill="#7600d8"/><rect x="154" y="297" width="9" height="9" fill="#8100d9"/><rect x="162" y="297" width="9" height="9" fill="#8c00db"/><rect x="170" y="297" width="9" height="9" fill="#9600dc"/><rect x="178" y="297" width="9" height="9" fill="#9f00dc"/><rect x="186" y="297" width="9" height="9" fill="#a700dd"/><rect x="194" y="297" width="9" height="9" fill="#af00de"/><rect x="202" y="297" width="9" height="9" fill="#b500df"/><rect x="210" y="297" width="9" height="9" fill="#bc00df"/><rect x="218" y="297" width="9" height="9" fill="#c200e0"/><rect x="226" y="297" width="9" height="9" fill="#c700e0"/><rect x="234" y="297" width="9" height="9" fill="#cb00e0"/><rect x="242" y="297" width="9" height="9" fill="#cf00e0"/><rect x="250" y="297" width="9" height="9" fill="#d300e0"/><rect x="258" y="297" width="9" height="9" fill="#d500e0"/><rect x="266" y="297" width="9" height="9" fill="#d700e0"/><rect x="274" y="297" width="9" height="9" fill="#d600e0"/><rect x="282" y="297" width="9" height="9" fill="#d600df"/><rect x="290" y="297" width="9" height="9" fill="#d800de"/><rect x="298" y="297" width="9" height="9" fill="#db00de"/><rect x="306" y="297" width="9" height="9" fill="#de00d9"/><rect x="314" y="297" width="9" height="9" fill="#de00d4"/><rect x="322" y="297" width="9" height="9" fill="#de00cb"/><rect x="330" y="297" width="9" height="9" fill="#de00c5"/><rect x="338" y="297" width="9" height="9" fill="#de00be"/><rect x="346" y="297" width="9" height="9" fill="#de00b6"/><rect x="354" y="297" width="9" height="9" fill="#de00b0"/><rect x="826" y="297" width="9" height="9" fill="#dc0081"/><rect x="834" y="297" width="9" height="9" fill="#dc0086"/><rect x="842" y="297" width="9" height="9" fill="#dc008c"/><rect x="850" y="297" width="9" height="9" fill="#dc0090"/><rect x="858" y="297" width="9" height="9" fill="#dc0096"/><rect x="866" y="297" width="9" height="9" fill="#dc009c"/><rect x="874" y="297" width="9" height="9" fill="#dc00a3"/><rect x="882" y="297" width="9" height="9" fill="#dc00a8"/><rect x="890" y="297" width="9" height="9" fill="#dc00ae"/><rect x="898" y="297" width="9" height="9" fill="#dd00b1"/><rect x="906" y="297" width="9" height="9" fill="#de00b4"/><rect x="914" y="297" width="9" height="9" fill="#df00b4"/><rect x="922" y="297" width="9" height="9" fill="#e000b5"/><rect x="930" y="297" width="9" height="9" fill="#e100b7"/><rect x="938" y="297" width="9" height="9" fill="#e100ba"/><rect x="946" y="297" width="9" height="9" fill="#e200be"/><rect x="954" y="297" width="9" height="9" fill="#e200c2"/><rect x="962" y="297" width="9" height="9" fill="#e200c6"/><rect x="970" y="297" width="9" height="9" fill="#e300cb"/><rect x="978" y="297" width="9" height="9" fill="#e300d0"/><rect x="986" y="297" width="9" height="9" fill="#e300d5"/><rect x="994" y="297" width="9" height="9" fill="#e300da"/><rect x="1002" y="297" width="9" height="9" fill="#e300df"/><rect x="1010" y="297" width="9" height="9" fill="#e100e2"/><rect x="1018" y="297" width="9" height="9" fill="#dc00e3"/><rect x="1026" y="297" width="9" height="9" fill="#d700e2"/><rect x="1034" y="297" width="9" height="9" fill="#d100e2"/><rect x="1042" y="297" width="9" height="9" fill="#ca00e2"/><rect x="1050" y="297" width="9" height="9" fill="#c300e1"/><rect x="1058" y="297" width="9" height="9" fill="#bb00e1"/><rect x="1066" y="297" width="9" height="9" fill="#b100e0"/><rect x="1074" y="297" width="9" height="9" fill="#a700df"/><rect x="1082" y="297" width="9" height="9" fill="#9b00de"/><rect x="1090" y="297" width="9" height="9" fill="#8c00dc"/><rect x="1098" y="297" width="9" height="9" fill="#7a00da"/><rect x="1106" y="297" width="9" height="9" fill="#6100d7"/><rect x="1114" y="297" width="9" height="9" fill="#2100d3"/><rect x="1122" y="297" width="9" height="9" fill="#0f00d2"/><rect x="90" y="305" width="9" height="9" fill="#005fc4"/><rect x="98" y="305" width="9" height="9" fill="#0058c4"/><rect x="106" y="305" width="9" height="9" fill="#001dc9"/><rect x="114" y="305" width="9" height="9" fill="#1b00ce"/><rect x="122" y="305" width="9" height="9" fill="#4a00d1"/><rect x="130" y="305" width="9" height="9" fill="#6000d3"/><rect x="138" y="305" width="9" height="9" fill="#6f00d5"/><rect x="146" y="305" width="9" height="9" fill="#7c00d6"/><rect x="154" y="305" width="9" height="9" fill="#8800d8"/><rect x="162" y="305" width="9" height="9" fill="#9300d9"/><rect x="170" y="305" width="9" height="9" fill="#9d00da"/><rect x="178" y="305" width="9" height="9" fill="#a600db"/><rect x="186" y="305" width="9" height="9" fill="#ae00dc"/><rect x="194" y="305" width="9" height="9" fill="#b600dd"/><rect x="202" y="305" width="9" height="9" fill="#bd00dd"/><rect x="210" y="305" width="9" height="9" fill="#c400de"/><rect x="218" y="305" width="9" height="9" fill="#ca00de"/><rect x="226" y="305" width="9" height="9" fill="#cf00df"/><rect x="234" y="305" width="9" height="9" fill="#d500df"/><rect x="242" y="305" width="9" height="9" fill="#d900e0"/><rect x="250" y="305" width="9" height="9" fill="#dd00e0"/><rect x="258" y="305" width="9" height="9" fill="#df00de"/><rect x="266" y="305" width="9" height="9" fill="#e000db"/><rect x="274" y="305" width="9" height="9" fill="#e100d7"/><rect x="282" y="305" width="9" height="9" fill="#e100d3"/><rect x="290" y="305" width="9" height="9" fill="#e000d0"/><rect x="298" y="305" width="9" height="9" fill="#e000ce"/><rect x="306" y="305" width="9" height="9" fill="#e000cc"/><rect x="314" y="305" width="9" height="9" fill="#df00ca"/><rect x="322" y="305" width="9" height="9" fill="#df00c6"/><rect x="330" y="305" width="9" height="9" fill="#de00c2"/><rect x="338" y="305" width="9" height="9" fill="#de00bc"/><rect x="346" y="305" width="9" height="9" fill="#de00b4"/><rect x="354" y="305" width="9" height="9" fill="#de00ae"/><rect x="362" y="305" width="9" height="9" fill="#de00a5"/><rect x="370" y="305" width="9" height="9" fill="#de009f"/><rect x="378" y="305" width="9" height="9" fill="#de009a"/><rect x="386" y="305" width="9" height="9" fill="#de0095"/><rect x="394" y="305" width="9" height="9" fill="#de008e"/><rect x="402" y="305" width="9" height="9" fill="#de0087"/><rect x="410" y="305" width="9" height="9" fill="#de0081"/><rect x="762" y="305" width="9" height="9" fill="#dd0050"/><rect x="770" y="305" width="9" height="9" fill="#dd0055"/><rect x="778" y="305" width="9" height="9" fill="#dd005c"/><rect x="786" y="305" width="9" height="9" fill="#dd0062"/><rect x="794" y="305" width="9" height="9" fill="#dc006b"/><rect x="802" y="305" width="9" height="9" fill="#dc0071"/><rect x="810" y="305" width="9" height="9" fill="#dc0075"/><rect x="818" y="305" width="9" height="9" fill="#dc007a"/><rect x="826" y="305" width="9" height="9" fill="#dc007f"/><rect x="834" y="305" width="9" height="9" fill="#dc0083"/><rect x="842" y="305" width="9" height="9" fill="#dc0089"/><rect x="850" y="305" width="9" height="9" fill="#dc008d"/><rect x="858" y="305" width="9" height="9" fill="#dd0091"/><rect x="866" y="305" width="9" height="9" fill="#dd0093"/><rect x="874" y="305" width="9" height="9" fill="#de0095"/><rect x="882" y="305" width="9" height="9" fill="#df0096"/><rect x="890" y="305" width="9" height="9" fill="#e00098"/><rect x="898" y="305" width="9" height="9" fill="#e1009a"/><rect x="906" y="305" width="9" height="9" fill="#e1009c"/><rect x="914" y="305" width="9" height="9" fill="#e200a0"/><rect x="922" y="305" width="9" height="9" fill="#e200a3"/><rect x="930" y="305" width="9" height="9" fill="#e200a7"/><rect x="938" y="305" width="9" height="9" fill="#e300ac"/><rect x="946" y="305" width="9" height="9" fill="#e300b0"/><rect x="954" y="305" width="9" height="9" fill="#e300b5"/><rect x="962" y="305" width="9" height="9" fill="#e300ba"/><rect x="970" y="305" width="9" height="9" fill="#e300c0"/><rect x="978" y="305" width="9" height="9" fill="#e300c5"/><rect x="986" y="305" width="9" height="9" fill="#e300cb"/><rect x="994" y="305" width="9" height="9" fill="#e300d1"/><rect x="1002" y="305" width="9" height="9" fill="#e200d7"/><rect x="1010" y="305" width="9" height="9" fill="#e200dd"/><rect x="1018" y="305" width="9" height="9" fill="#e100e1"/><rect x="1026" y="305" width="9" height="9" fill="#dc00e2"/><rect x="1034" y="305" width="9" height="9" fill="#d600e1"/><rect x="1042" y="305" width="9" height="9" fill="#cf00e1"/><rect x="1050" y="305" width="9" height="9" fill="#c800e0"/><rect x="1058" y="305" width="9" height="9" fill="#bf00df"/><rect x="1066" y="305" width="9" height="9" fill="#b500df"/><rect x="1074" y="305" width="9" height="9" fill="#ab00dd"/><rect x="1082" y="305" width="9" height="9" fill="#9e00dc"/><rect x="1090" y="305" width="9" height="9" fill="#8f00db"/><rect x="1098" y="305" width="9" height="9" fill="#7c00d8"/><rect x="1106" y="305" width="9" height="9" fill="#5e00d5"/><rect x="1114" y="305" width="9" height="9" fill="#2800d0"/><rect x="1122" y="305" width="9" height="9" fill="#2000d0"/><rect x="90" y="313" width="9" height="9" fill="#004ec3"/><rect x="98" y="313" width="9" height="9" fill="#0049c3"/><rect x="106" y="313" width="9" height="9" fill="#001fc6"/><rect x="114" y="313" width="9" height="9" fill="#2200cb"/><rect x="122" y="313" width="9" height="9" fill="#5000cf"/><rect x="130" y="313" width="9" height="9" fill="#6400d1"/><rect x="138" y="313" width="9" height="9" fill="#7300d3"/><rect x="146" y="313" width="9" height="9" fill="#8000d5"/><rect x="154" y="313" width="9" height="9" fill="#8d00d6"/><rect x="162" y="313" width="9" height="9" fill="#9800d7"/><rect x="170" y="313" width="9" height="9" fill="#a200d8"/><rect x="178" y="313" width="9" height="9" fill="#ab00d9"/><rect x="186" y="313" width="9" height="9" fill="#b400da"/><rect x="194" y="313" width="9" height="9" fill="#bc00db"/><rect x="202" y="313" width="9" height="9" fill="#c300dc"/><rect x="210" y="313" width="9" height="9" fill="#ca00dd"/><rect x="218" y="313" width="9" height="9" fill="#d000dd"/><rect x="226" y="313" width="9" height="9" fill="#d600de"/><rect x="234" y="313" width="9" height="9" fill="#db00de"/><rect x="242" y="313" width="9" height="9" fill="#de00dd"/><rect x="250" y="313" width="9" height="9" fill="#df00d8"/><rect x="258" y="313" width="9" height="9" fill="#e000d3"/><rect x="266" y="313" width="9" height="9" fill="#e000ce"/><rect x="274" y="313" width="9" height="9" fill="#e000c9"/><rect x="282" y="313" width="9" height="9" fill="#e000c4"/><rect x="290" y="313" width="9" height="9" fill="#e000bf"/><rect x="298" y="313" width="9" height="9" fill="#e100ba"/><rect x="306" y="313" width="9" height="9" fill="#e100b6"/><rect x="314" y="313" width="9" height="9" fill="#e100b2"/><rect x="322" y="313" width="9" height="9" fill="#e100ae"/><rect x="330" y="313" width="9" height="9" fill="#e000ab"/><rect x="338" y="313" width="9" height="9" fill="#e000a9"/><rect x="346" y="313" width="9" height="9" fill="#e000a7"/><rect x="354" y="313" width="9" height="9" fill="#df00a3"/><rect x="362" y="313" width="9" height="9" fill="#df009f"/><rect x="370" y="313" width="9" height="9" fill="#df009b"/><rect x="378" y="313" width="9" height="9" fill="#de0097"/><rect x="386" y="313" width="9" height="9" fill="#de0092"/><rect x="394" y="313" width="9" height="9" fill="#de008b"/><rect x="402" y="313" width="9" height="9" fill="#de0085"/><rect x="410" y="313" width="9" height="9" fill="#de0080"/><rect x="418" y="313" width="9" height="9" fill="#de007a"/><rect x="426" y="313" width="9" height="9" fill="#de0075"/><rect x="434" y="313" width="9" height="9" fill="#de006e"/><rect x="442" y="313" width="9" height="9" fill="#de0069"/><rect x="450" y="313" width="9" height="9" fill="#de0065"/><rect x="458" y="313" width="9" height="9" fill="#de005a"/><rect x="466" y="313" width="9" height="9" fill="#de0056"/><rect x="474" y="313" width="9" height="9" fill="#de004d"/><rect x="482" y="313" width="9" height="9" fill="#de0045"/><rect x="490" y="313" width="9" height="9" fill="#de0042"/><rect x="498" y="313" width="9" height="9" fill="#de003b"/><rect x="506" y="313" width="9" height="9" fill="#de0036"/><rect x="514" y="313" width="9" height="9" fill="#de0038"/><rect x="658" y="313" width="9" height="9" fill="#dd0023"/><rect x="666" y="313" width="9" height="9" fill="#de001f"/><rect x="674" y="313" width="9" height="9" fill="#de0021"/><rect x="682" y="313" width="9" height="9" fill="#dd0026"/><rect x="690" y="313" width="9" height="9" fill="#de0026"/><rect x="698" y="313" width="9" height="9" fill="#dd002c"/><rect x="706" y="313" width="9" height="9" fill="#de002c"/><rect x="714" y="313" width="9" height="9" fill="#dd002f"/><rect x="722" y="313" width="9" height="9" fill="#dd0037"/><rect x="730" y="313" width="9" height="9" fill="#dd0037"/><rect x="738" y="313" width="9" height="9" fill="#dd003c"/><rect x="746" y="313" width="9" height="9" fill="#dd0043"/><rect x="754" y="313" width="9" height="9" fill="#dd0048"/><rect x="762" y="313" width="9" height="9" fill="#dd004e"/><rect x="770" y="313" width="9" height="9" fill="#dd0052"/><rect x="778" y="313" width="9" height="9" fill="#dd0059"/><rect x="786" y="313" width="9" height="9" fill="#dd005f"/><rect x="794" y="313" width="9" height="9" fill="#dd0066"/><rect x="802" y="313" width="9" height="9" fill="#dd006c"/><rect x="810" y="313" width="9" height="9" fill="#dd006f"/><rect x="818" y="313" width="9" height="9" fill="#de0071"/><rect x="826" y="313" width="9" height="9" fill="#de0074"/><rect x="834" y="313" width="9" height="9" fill="#df0075"/><rect x="842" y="313" width="9" height="9" fill="#e00077"/><rect x="850" y="313" width="9" height="9" fill="#e00078"/><rect x="858" y="313" width="9" height="9" fill="#e1007a"/><rect x="866" y="313" width="9" height="9" fill="#e1007c"/><rect x="874" y="313" width="9" height="9" fill="#e2007f"/><rect x="882" y="313" width="9" height="9" fill="#e20082"/><rect x="890" y="313" width="9" height="9" fill="#e20086"/><rect x="898" y="313" width="9" height="9" fill="#e20089"/><rect x="906" y="313" width="9" height="9" fill="#e3008d"/><rect x="914" y="313" width="9" height="9" fill="#e30092"/><rect x="922" y="313" width="9" height="9" fill="#e30096"/><rect x="930" y="313" width="9" height="9" fill="#e3009b"/><rect x="938" y="313" width="9" height="9" fill="#e300a0"/><rect x="946" y="313" width="9" height="9" fill="#e300a5"/><rect x="954" y="313" width="9" height="9" fill="#e300ab"/><rect x="962" y="313" width="9" height="9" fill="#e300b0"/><rect x="970" y="313" width="9" height="9" fill="#e300b6"/><rect x="978" y="313" width="9" height="9" fill="#e200bc"/><rect x="986" y="313" width="9" height="9" fill="#e200c2"/><rect x="994" y="313" width="9" height="9" fill="#e200c9"/><rect x="1002" y="313" width="9" height="9" fill="#e200cf"/><rect x="1010" y="313" width="9" height="9" fill="#e100d5"/><rect x="1018" y="313" width="9" height="9" fill="#e100dc"/><rect x="1026" y="313" width="9" height="9" fill="#df00e0"/><rect x="1034" y="313" width="9" height="9" fill="#d900e0"/><rect x="1042" y="313" width="9" height="9" fill="#d200e0"/><rect x="1050" y="313" width="9" height="9" fill="#cb00df"/><rect x="1058" y="313" width="9" height="9" fill="#c200de"/><rect x="1066" y="313" width="9" height="9" fill="#b800dd"/><rect x="1074" y="313" width="9" height="9" fill="#ad00dc"/><rect x="1082" y="313" width="9" height="9" fill="#a000da"/><rect x="1090" y="313" width="9" height="9" fill="#9000d8"/><rect x="1098" y="313" width="9" height="9" fill="#7b00d6"/><rect x="1106" y="313" width="9" height="9" fill="#5700d1"/><rect x="1114" y="313" width="9" height="9" fill="#3900cf"/><rect x="1122" y="313" width="9" height="9" fill="#3000cf"/><rect x="90" y="321" width="9" height="9" fill="#003ac3"/><rect x="98" y="321" width="9" height="9" fill="#0032c2"/><rect x="106" y="321" width="9" height="9" fill="#0020c3"/><rect x="114" y="321" width="9" height="9" fill="#2200c9"/><rect x="122" y="321" width="9" height="9" fill="#5300cc"/><rect x="130" y="321" width="9" height="9" fill="#6600cf"/><rect x="138" y="321" width="9" height="9" fill="#7600d1"/><rect x="146" y="321" width="9" height="9" fill="#8400d2"/><rect x="154" y="321" width="9" height="9" fill="#9000d4"/><rect x="162" y="321" width="9" height="9" fill="#9b00d5"/><rect x="170" y="321" width="9" height="9" fill="#a600d7"/><rect x="178" y="321" width="9" height="9" fill="#af00d8"/><rect x="186" y="321" width="9" height="9" fill="#b800d9"/><rect x="194" y="321" width="9" height="9" fill="#c000da"/><rect x="202" y="321" width="9" height="9" fill="#c700da"/><rect x="210" y="321" width="9" height="9" fill="#ce00db"/><rect x="218" y="321" width="9" height="9" fill="#d400dc"/><rect x="226" y="321" width="9" height="9" fill="#da00dc"/><rect x="234" y="321" width="9" height="9" fill="#dd00da"/><rect x="242" y="321" width="9" height="9" fill="#de00d4"/><rect x="250" y="321" width="9" height="9" fill="#de00ce"/><rect x="258" y="321" width="9" height="9" fill="#de00c9"/><rect x="266" y="321" width="9" height="9" fill="#df00c3"/><rect x="274" y="321" width="9" height="9" fill="#df00bd"/><rect x="282" y="321" width="9" height="9" fill="#df00b7"/><rect x="290" y="321" width="9" height="9" fill="#e000b2"/><rect x="298" y="321" width="9" height="9" fill="#e000ac"/><rect x="306" y="321" width="9" height="9" fill="#e000a7"/><rect x="314" y="321" width="9" height="9" fill="#e000a2"/><rect x="322" y="321" width="9" height="9" fill="#e1009d"/><rect x="330" y="321" width="9" height="9" fill="#e10098"/><rect x="338" y="321" width="9" height="9" fill="#e10094"/><rect x="346" y="321" width="9" height="9" fill="#e1008f"/><rect x="354" y="321" width="9" height="9" fill="#e1008c"/><rect x="362" y="321" width="9" height="9" fill="#e10088"/><rect x="370" y="321" width="9" height="9" fill="#e10085"/><rect x="378" y="321" width="9" height="9" fill="#e00082"/><rect x="386" y="321" width="9" height="9" fill="#e00080"/><rect x="394" y="321" width="9" height="9" fill="#e0007d"/><rect x="402" y="321" width="9" height="9" fill="#df007a"/><rect x="410" y="321" width="9" height="9" fill="#df0077"/><rect x="418" y="321" width="9" height="9" fill="#df0074"/><rect x="426" y="321" width="9" height="9" fill="#df006f"/><rect x="434" y="321" width="9" height="9" fill="#df006a"/><rect x="442" y="321" width="9" height="9" fill="#df0064"/><rect x="450" y="321" width="9" height="9" fill="#de0063"/><rect x="458" y="321" width="9" height="9" fill="#de0056"/><rect x="466" y="321" width="9" height="9" fill="#de0052"/><rect x="474" y="321" width="9" height="9" fill="#de004d"/><rect x="482" y="321" width="9" height="9" fill="#df0042"/><rect x="490" y="321" width="9" height="9" fill="#de0042"/><rect x="498" y="321" width="9" height="9" fill="#df0037"/><rect x="506" y="321" width="9" height="9" fill="#de0036"/><rect x="514" y="321" width="9" height="9" fill="#de0035"/><rect x="522" y="321" width="9" height="9" fill="#df002a"/><rect x="530" y="321" width="9" height="9" fill="#de002a"/><rect x="538" y="321" width="9" height="9" fill="#de002d"/><rect x="546" y="321" width="9" height="9" fill="#de0022"/><rect x="554" y="321" width="9" height="9" fill="#df001d"/><rect x="562" y="321" width="9" height="9" fill="#df001d"/><rect x="570" y="321" width="9" height="9" fill="#de001c"/><rect x="578" y="321" width="9" height="9" fill="#de001b"/><rect x="586" y="321" width="9" height="9" fill="#de001a"/><rect x="594" y="321" width="9" height="9" fill="#de0019"/><rect x="602" y="321" width="9" height="9" fill="#de0018"/><rect x="610" y="321" width="9" height="9" fill="#de0016"/><rect x="618" y="321" width="9" height="9" fill="#df0015"/><rect x="626" y="321" width="9" height="9" fill="#de0016"/><rect x="634" y="321" width="9" height="9" fill="#dd001f"/><rect x="642" y="321" width="9" height="9" fill="#de001b"/><rect x="650" y="321" width="9" height="9" fill="#de0018"/><rect x="658" y="321" width="9" height="9" fill="#dd0020"/><rect x="666" y="321" width="9" height="9" fill="#de001f"/><rect x="674" y="321" width="9" height="9" fill="#de001e"/><rect x="682" y="321" width="9" height="9" fill="#dd0026"/><rect x="690" y="321" width="9" height="9" fill="#de0023"/><rect x="698" y="321" width="9" height="9" fill="#dd002c"/><rect x="706" y="321" width="9" height="9" fill="#de0029"/><rect x="714" y="321" width="9" height="9" fill="#dd002f"/><rect x="722" y="321" width="9" height="9" fill="#dd0033"/><rect x="730" y="321" width="9" height="9" fill="#de0034"/><rect x="738" y="321" width="9" height="9" fill="#de0039"/><rect x="746" y="321" width="9" height="9" fill="#de003d"/><rect x="754" y="321" width="9" height="9" fill="#de003f"/><rect x="762" y="321" width="9" height="9" fill="#de0041"/><rect x="770" y="321" width="9" height="9" fill="#df0043"/><rect x="778" y="321" width="9" height="9" fill="#df0045"/><rect x="786" y="321" width="9" height="9" fill="#e00047"/><rect x="794" y="321" width="9" height="9" fill="#e00048"/><rect x="802" y="321" width="9" height="9" fill="#e10049"/><rect x="810" y="321" width="9" height="9" fill="#e1004c"/><rect x="818" y="321" width="9" height="9" fill="#e1004f"/><rect x="826" y="321" width="9" height="9" fill="#e20052"/><rect x="834" y="321" width="9" height="9" fill="#e20056"/><rect x="842" y="321" width="9" height="9" fill="#e2005a"/><rect x="850" y="321" width="9" height="9" fill="#e2005f"/><rect x="858" y="321" width="9" height="9" fill="#e20065"/><rect x="866" y="321" width="9" height="9" fill="#e2006a"/><rect x="874" y="321" width="9" height="9" fill="#e30070"/><rect x="882" y="321" width="9" height="9" fill="#e30075"/><rect x="890" y="321" width="9" height="9" fill="#e30079"/><rect x="898" y="321" width="9" height="9" fill="#e3007d"/><rect x="906" y="321" width="9" height="9" fill="#e30082"/><rect x="914" y="321" width="9" height="9" fill="#e30087"/><rect x="922" y="321" width="9" height="9" fill="#e3008c"/><rect x="930" y="321" width="9" height="9" fill="#e30091"/><rect x="938" y="321" width="9" height="9" fill="#e30096"/><rect x="946" y="321" width="9" height="9" fill="#e2009c"/><rect x="954" y="321" width="9" height="9" fill="#e200a2"/><rect x="962" y="321" width="9" height="9" fill="#e200a8"/><rect x="970" y="321" width="9" height="9" fill="#e200ae"/><rect x="978" y="321" width="9" height="9" fill="#e200b4"/><rect x="986" y="321" width="9" height="9" fill="#e100bb"/><rect x="994" y="321" width="9" height="9" fill="#e100c1"/><rect x="1002" y="321" width="9" height="9" fill="#e100c8"/><rect x="1010" y="321" width="9" height="9" fill="#e000cf"/><rect x="1018" y="321" width="9" height="9" fill="#e000d6"/><rect x="1026" y="321" width="9" height="9" fill="#df00dc"/><rect x="1034" y="321" width="9" height="9" fill="#db00df"/><rect x="1042" y="321" width="9" height="9" fill="#d400de"/><rect x="1050" y="321" width="9" height="9" fill="#cc00dd"/><rect x="1058" y="321" width="9" height="9" fill="#c300dc"/><rect x="1066" y="321" width="9" height="9" fill="#b900db"/><rect x="1074" y="321" width="9" height="9" fill="#ae00da"/><rect x="1082" y="321" width="9" height="9" fill="#a000d8"/><rect x="1090" y="321" width="9" height="9" fill="#8e00d6"/><rect x="1098" y="321" width="9" height="9" fill="#7600d2"/><rect x="1106" y="321" width="9" height="9" fill="#5700ce"/><rect x="1114" y="321" width="9" height="9" fill="#4c00ce"/><rect x="98" y="329" width="9" height="9" fill="#0027c1"/><rect x="106" y="329" width="9" height="9" fill="#001cc1"/><rect x="114" y="329" width="9" height="9" fill="#1b02c5"/><rect x="122" y="329" width="9" height="9" fill="#5200c9"/><rect x="130" y="329" width="9" height="9" fill="#6700cc"/><rect x="138" y="329" width="9" height="9" fill="#7700ce"/><rect x="146" y="329" width="9" height="9" fill="#8500d0"/><rect x="154" y="329" width="9" height="9" fill="#9200d2"/><rect x="162" y="329" width="9" height="9" fill="#9d00d3"/><rect x="170" y="329" width="9" height="9" fill="#a800d5"/><rect x="178" y="329" width="9" height="9" fill="#b100d6"/><rect x="186" y="329" width="9" height="9" fill="#ba00d7"/><rect x="194" y="329" width="9" height="9" fill="#c200d8"/><rect x="202" y="329" width="9" height="9" fill="#ca00d9"/><rect x="210" y="329" width="9" height="9" fill="#d000d9"/><rect x="218" y="329" width="9" height="9" fill="#d700da"/><rect x="226" y="329" width="9" height="9" fill="#db00d8"/><rect x="234" y="329" width="9" height="9" fill="#dc00d2"/><rect x="242" y="329" width="9" height="9" fill="#dc00cc"/><rect x="250" y="329" width="9" height="9" fill="#dd00c6"/><rect x="258" y="329" width="9" height="9" fill="#dd00c0"/><rect x="266" y="329" width="9" height="9" fill="#de00b9"/><rect x="274" y="329" width="9" height="9" fill="#de00b3"/><rect x="282" y="329" width="9" height="9" fill="#de00ad"/><rect x="290" y="329" width="9" height="9" fill="#df00a7"/><rect x="298" y="329" width="9" height="9" fill="#df00a1"/><rect x="306" y="329" width="9" height="9" fill="#df009c"/><rect x="314" y="329" width="9" height="9" fill="#e00096"/><rect x="322" y="329" width="9" height="9" fill="#e00091"/><rect x="330" y="329" width="9" height="9" fill="#e0008b"/><rect x="338" y="329" width="9" height="9" fill="#e00086"/><rect x="346" y="329" width="9" height="9" fill="#e00081"/><rect x="354" y="329" width="9" height="9" fill="#e1007d"/><rect x="362" y="329" width="9" height="9" fill="#e10078"/><rect x="370" y="329" width="9" height="9" fill="#e10073"/><rect x="378" y="329" width="9" height="9" fill="#e1006e"/><rect x="386" y="329" width="9" height="9" fill="#e10068"/><rect x="394" y="329" width="9" height="9" fill="#e10062"/><rect x="402" y="329" width="9" height="9" fill="#e1005c"/><rect x="410" y="329" width="9" height="9" fill="#e10056"/><rect x="418" y="329" width="9" height="9" fill="#e10051"/><rect x="426" y="329" width="9" height="9" fill="#e1004c"/><rect x="434" y="329" width="9" height="9" fill="#e10048"/><rect x="442" y="329" width="9" height="9" fill="#e10044"/><rect x="450" y="329" width="9" height="9" fill="#e00041"/><rect x="458" y="329" width="9" height="9" fill="#e0003e"/><rect x="466" y="329" width="9" height="9" fill="#e0003a"/><rect x="474" y="329" width="9" height="9" fill="#e00038"/><rect x="482" y="329" width="9" height="9" fill="#e00034"/><rect x="490" y="329" width="9" height="9" fill="#df0033"/><rect x="498" y="329" width="9" height="9" fill="#df002d"/><rect x="506" y="329" width="9" height="9" fill="#df002c"/><rect x="514" y="329" width="9" height="9" fill="#df0029"/><rect x="522" y="329" width="9" height="9" fill="#df0025"/><rect x="530" y="329" width="9" height="9" fill="#df0024"/><rect x="538" y="329" width="9" height="9" fill="#de0025"/><rect x="546" y="329" width="9" height="9" fill="#df001c"/><rect x="554" y="329" width="9" height="9" fill="#df001b"/><rect x="562" y="329" width="9" height="9" fill="#df001a"/><rect x="570" y="329" width="9" height="9" fill="#df0019"/><rect x="578" y="329" width="9" height="9" fill="#df0019"/><rect x="586" y="329" width="9" height="9" fill="#df0018"/><rect x="594" y="329" width="9" height="9" fill="#df0017"/><rect x="602" y="329" width="9" height="9" fill="#df0016"/><rect x="610" y="329" width="9" height="9" fill="#df0015"/><rect x="618" y="329" width="9" height="9" fill="#df0014"/><rect x="626" y="329" width="9" height="9" fill="#df0013"/><rect x="634" y="329" width="9" height="9" fill="#de0019"/><rect x="642" y="329" width="9" height="9" fill="#df0017"/><rect x="650" y="329" width="9" height="9" fill="#df0015"/><rect x="658" y="329" width="9" height="9" fill="#df0017"/><rect x="666" y="329" width="9" height="9" fill="#df0018"/><rect x="674" y="329" width="9" height="9" fill="#df0017"/><rect x="682" y="329" width="9" height="9" fill="#df001a"/><rect x="690" y="329" width="9" height="9" fill="#df0018"/><rect x="698" y="329" width="9" height="9" fill="#df001a"/><rect x="706" y="329" width="9" height="9" fill="#e00019"/><rect x="714" y="329" width="9" height="9" fill="#e0001a"/><rect x="722" y="329" width="9" height="9" fill="#e0001a"/><rect x="730" y="329" width="9" height="9" fill="#e1001a"/><rect x="738" y="329" width="9" height="9" fill="#e1001b"/><rect x="746" y="329" width="9" height="9" fill="#e1001c"/><rect x="754" y="329" width="9" height="9" fill="#e1001e"/><rect x="762" y="329" width="9" height="9" fill="#e10020"/><rect x="770" y="329" width="9" height="9" fill="#e20022"/><rect x="778" y="329" width="9" height="9" fill="#e20025"/><rect x="786" y="329" width="9" height="9" fill="#e20028"/><rect x="794" y="329" width="9" height="9" fill="#e2002b"/><rect x="802" y="329" width="9" height="9" fill="#e2002f"/><rect x="810" y="329" width="9" height="9" fill="#e20032"/><rect x="818" y="329" width="9" height="9" fill="#e20037"/><rect x="826" y="329" width="9" height="9" fill="#e2003b"/><rect x="834" y="329" width="9" height="9" fill="#e30040"/><rect x="842" y="329" width="9" height="9" fill="#e30046"/><rect x="850" y="329" width="9" height="9" fill="#e3004b"/><rect x="858" y="329" width="9" height="9" fill="#e30052"/><rect x="866" y="329" width="9" height="9" fill="#e30058"/><rect x="874" y="329" width="9" height="9" fill="#e3005f"/><rect x="882" y="329" width="9" height="9" fill="#e30066"/><rect x="890" y="329" width="9" height="9" fill="#e3006d"/><rect x="898" y="329" width="9" height="9" fill="#e30074"/><rect x="906" y="329" width="9" height="9" fill="#e20079"/><rect x="914" y="329" width="9" height="9" fill="#e2007e"/><rect x="922" y="329" width="9" height="9" fill="#e20083"/><rect x="930" y="329" width="9" height="9" fill="#e20088"/><rect x="938" y="329" width="9" height="9" fill="#e2008e"/><rect x="946" y="329" width="9" height="9" fill="#e20094"/><rect x="954" y="329" width="9" height="9" fill="#e2009a"/><rect x="962" y="329" width="9" height="9" fill="#e100a0"/><rect x="970" y="329" width="9" height="9" fill="#e100a7"/><rect x="978" y="329" width="9" height="9" fill="#e100ad"/><rect x="986" y="329" width="9" height="9" fill="#e000b4"/><rect x="994" y="329" width="9" height="9" fill="#e000bb"/><rect x="1002" y="329" width="9" height="9" fill="#e000c2"/><rect x="1010" y="329" width="9" height="9" fill="#df00c9"/><rect x="1018" y="329" width="9" height="9" fill="#df00d0"/><rect x="1026" y="329" width="9" height="9" fill="#de00d8"/><rect x="1034" y="329" width="9" height="9" fill="#dc00dd"/><rect x="1042" y="329" width="9" height="9" fill="#d500dc"/><rect x="1050" y="329" width="9" height="9" fill="#cd00db"/><rect x="1058" y="329" width="9" height="9" fill="#c400da"/><rect x="1066" y="329" width="9" height="9" fill="#b900d9"/><rect x="1074" y="329" width="9" height="9" fill="#ad00d8"/><rect x="1082" y="329" width="9" height="9" fill="#9d00d6"/><rect x="1090" y="329" width="9" height="9" fill="#8a00d3"/><rect x="1098" y="329" width="9" height="9" fill="#6b00ce"/><rect x="1106" y="329" width="9" height="9" fill="#5a00cc"/><rect x="1114" y="329" width="9" height="9" fill="#5800cd"/><rect x="98" y="337" width="9" height="9" fill="#0012c1"/><rect x="106" y="337" width="9" height="9" fill="#000cc0"/><rect x="114" y="337" width="9" height="9" fill="#0c04c1"/><rect x="122" y="337" width="9" height="9" fill="#4b00c6"/><rect x="130" y="337" width="9" height="9" fill="#6500c9"/><rect x="138" y="337" width="9" height="9" fill="#7700cc"/><rect x="146" y="337" width="9" height="9" fill="#8500ce"/><rect x="154" y="337" width="9" height="9" fill="#9300d0"/><rect x="162" y="337" width="9" height="9" fill="#9e00d1"/><rect x="170" y="337" width="9" height="9" fill="#a900d2"/><rect x="178" y="337" width="9" height="9" fill="#b300d4"/><rect x="186" y="337" width="9" height="9" fill="#bc00d5"/><rect x="194" y="337" width="9" height="9" fill="#c400d6"/><rect x="202" y="337" width="9" height="9" fill="#cb00d7"/><rect x="210" y="337" width="9" height="9" fill="#d200d8"/><rect x="218" y="337" width="9" height="9" fill="#d800d8"/><rect x="226" y="337" width="9" height="9" fill="#d900d2"/><rect x="234" y="337" width="9" height="9" fill="#da00cc"/><rect x="242" y="337" width="9" height="9" fill="#db00c5"/><rect x="250" y="337" width="9" height="9" fill="#db00bf"/><rect x="258" y="337" width="9" height="9" fill="#dc00b8"/><rect x="266" y="337" width="9" height="9" fill="#dc00b2"/><rect x="274" y="337" width="9" height="9" fill="#dd00ab"/><rect x="282" y="337" width="9" height="9" fill="#dd00a5"/><rect x="290" y="337" width="9" height="9" fill="#dd009e"/><rect x="298" y="337" width="9" height="9" fill="#de0098"/><rect x="306" y="337" width="9" height="9" fill="#de0092"/><rect x="314" y="337" width="9" height="9" fill="#df008c"/><rect x="322" y="337" width="9" height="9" fill="#df0087"/><rect x="330" y="337" width="9" height="9" fill="#df0081"/><rect x="338" y="337" width="9" height="9" fill="#df007c"/><rect x="346" y="337" width="9" height="9" fill="#e00077"/><rect x="354" y="337" width="9" height="9" fill="#e00071"/><rect x="362" y="337" width="9" height="9" fill="#e0006a"/><rect x="370" y="337" width="9" height="9" fill="#e00062"/><rect x="378" y="337" width="9" height="9" fill="#e0005b"/><rect x="386" y="337" width="9" height="9" fill="#e00054"/><rect x="394" y="337" width="9" height="9" fill="#e1004d"/><rect x="402" y="337" width="9" height="9" fill="#e10046"/><rect x="410" y="337" width="9" height="9" fill="#e10040"/><rect x="418" y="337" width="9" height="9" fill="#e1003a"/><rect x="426" y="337" width="9" height="9" fill="#e10034"/><rect x="434" y="337" width="9" height="9" fill="#e1002f"/><rect x="442" y="337" width="9" height="9" fill="#e1002a"/><rect x="450" y="337" width="9" height="9" fill="#e10026"/><rect x="458" y="337" width="9" height="9" fill="#e10021"/><rect x="466" y="337" width="9" height="9" fill="#e1001d"/><rect x="474" y="337" width="9" height="9" fill="#e1001a"/><rect x="482" y="337" width="9" height="9" fill="#e10017"/><rect x="490" y="337" width="9" height="9" fill="#e10015"/><rect x="498" y="337" width="9" height="9" fill="#e10013"/><rect x="506" y="337" width="9" height="9" fill="#e10012"/><rect x="514" y="337" width="9" height="9" fill="#e10010"/><rect x="522" y="337" width="9" height="9" fill="#e10010"/><rect x="530" y="337" width="9" height="9" fill="#e1000f"/><rect x="538" y="337" width="9" height="9" fill="#e1000e"/><rect x="546" y="337" width="9" height="9" fill="#e1000d"/><rect x="554" y="337" width="9" height="9" fill="#e1000d"/><rect x="562" y="337" width="9" height="9" fill="#e1000c"/><rect x="570" y="337" width="9" height="9" fill="#e1000c"/><rect x="578" y="337" width="9" height="9" fill="#e1000b"/><rect x="586" y="337" width="9" height="9" fill="#e1000b"/><rect x="594" y="337" width="9" height="9" fill="#e1000b"/><rect x="602" y="337" width="9" height="9" fill="#e1000b"/><rect x="610" y="337" width="9" height="9" fill="#e1000a"/><rect x="618" y="337" width="9" height="9" fill="#e1000a"/><rect x="626" y="337" width="9" height="9" fill="#e1000a"/><rect x="634" y="337" width="9" height="9" fill="#e1000a"/><rect x="642" y="337" width="9" height="9" fill="#e1000a"/><rect x="650" y="337" width="9" height="9" fill="#e1000a"/><rect x="658" y="337" width="9" height="9" fill="#e1000a"/><rect x="666" y="337" width="9" height="9" fill="#e1000a"/><rect x="674" y="337" width="9" height="9" fill="#e2000b"/><rect x="682" y="337" width="9" height="9" fill="#e2000b"/><rect x="690" y="337" width="9" height="9" fill="#e2000b"/><rect x="698" y="337" width="9" height="9" fill="#e2000c"/><rect x="706" y="337" width="9" height="9" fill="#e2000c"/><rect x="714" y="337" width="9" height="9" fill="#e2000c"/><rect x="722" y="337" width="9" height="9" fill="#e2000d"/><rect x="730" y="337" width="9" height="9" fill="#e2000e"/><rect x="738" y="337" width="9" height="9" fill="#e2000e"/><rect x="746" y="337" width="9" height="9" fill="#e2000f"/><rect x="754" y="337" width="9" height="9" fill="#e20010"/><rect x="762" y="337" width="9" height="9" fill="#e20011"/><rect x="770" y="337" width="9" height="9" fill="#e20012"/><rect x="778" y="337" width="9" height="9" fill="#e20014"/><rect x="786" y="337" width="9" height="9" fill="#e20017"/><rect x="794" y="337" width="9" height="9" fill="#e2001a"/><rect x="802" y="337" width="9" height="9" fill="#e2001e"/><rect x="810" y="337" width="9" height="9" fill="#e20022"/><rect x="818" y="337" width="9" height="9" fill="#e20027"/><rect x="826" y="337" width="9" height="9" fill="#e2002c"/><rect x="834" y="337" width="9" height="9" fill="#e20031"/><rect x="842" y="337" width="9" height="9" fill="#e20037"/><rect x="850" y="337" width="9" height="9" fill="#e2003d"/><rect x="858" y="337" width="9" height="9" fill="#e20043"/><rect x="866" y="337" width="9" height="9" fill="#e2004a"/><rect x="874" y="337" width="9" height="9" fill="#e20051"/><rect x="882" y="337" width="9" height="9" fill="#e20058"/><rect x="890" y="337" width="9" height="9" fill="#e20060"/><rect x="898" y="337" width="9" height="9" fill="#e20068"/><rect x="906" y="337" width="9" height="9" fill="#e20070"/><rect x="914" y="337" width="9" height="9" fill="#e20076"/><rect x="922" y="337" width="9" height="9" fill="#e1007c"/><rect x="930" y="337" width="9" height="9" fill="#e10081"/><rect x="938" y="337" width="9" height="9" fill="#e10087"/><rect x="946" y="337" width="9" height="9" fill="#e1008d"/><rect x="954" y="337" width="9" height="9" fill="#e10094"/><rect x="962" y="337" width="9" height="9" fill="#e0009a"/><rect x="970" y="337" width="9" height="9" fill="#e000a1"/><rect x="978" y="337" width="9" height="9" fill="#e000a8"/><rect x="986" y="337" width="9" height="9" fill="#df00af"/><rect x="994" y="337" width="9" height="9" fill="#df00b6"/><rect x="1002" y="337" width="9" height="9" fill="#de00bd"/><rect x="1010" y="337" width="9" height="9" fill="#de00c4"/><rect x="1018" y="337" width="9" height="9" fill="#dd00cc"/><rect x="1026" y="337" width="9" height="9" fill="#dc00d3"/><rect x="1034" y="337" width="9" height="9" fill="#db00da"/><rect x="1042" y="337" width="9" height="9" fill="#d400da"/><rect x="1050" y="337" width="9" height="9" fill="#cc00d9"/><rect x="1058" y="337" width="9" height="9" fill="#c200d8"/><rect x="1066" y="337" width="9" height="9" fill="#b700d7"/><rect x="1074" y="337" width="9" height="9" fill="#aa00d5"/><rect x="1082" y="337" width="9" height="9" fill="#9900d2"/><rect x="1090" y="337" width="9" height="9" fill="#7f00ce"/><rect x="1098" y="337" width="9" height="9" fill="#6600ca"/><rect x="1106" y="337" width="9" height="9" fill="#5e00cb"/><rect x="106" y="345" width="9" height="9" fill="#0007bf"/><rect x="114" y="345" width="9" height="9" fill="#0402be"/><rect x="122" y="345" width="9" height="9" fill="#3800c2"/><rect x="130" y="345" width="9" height="9" fill="#6100c6"/><rect x="138" y="345" width="9" height="9" fill="#7400c9"/><rect x="146" y="345" width="9" height="9" fill="#8400cb"/><rect x="154" y="345" width="9" height="9" fill="#9200cd"/><rect x="162" y="345" width="9" height="9" fill="#9e00cf"/><rect x="170" y="345" width="9" height="9" fill="#a900d0"/><rect x="178" y="345" width="9" height="9" fill="#b300d2"/><rect x="186" y="345" width="9" height="9" fill="#bc00d3"/><rect x="194" y="345" width="9" height="9" fill="#c400d4"/><rect x="202" y="345" width="9" height="9" fill="#cc00d5"/><rect x="210" y="345" width="9" height="9" fill="#d300d6"/><rect x="218" y="345" width="9" height="9" fill="#d700d3"/><rect x="226" y="345" width="9" height="9" fill="#d700cd"/><rect x="234" y="345" width="9" height="9" fill="#d800c6"/><rect x="242" y="345" width="9" height="9" fill="#d900bf"/><rect x="250" y="345" width="9" height="9" fill="#d900b8"/><rect x="258" y="345" width="9" height="9" fill="#da00b2"/><rect x="266" y="345" width="9" height="9" fill="#db00ab"/><rect x="274" y="345" width="9" height="9" fill="#db00a4"/><rect x="282" y="345" width="9" height="9" fill="#dc009e"/><rect x="290" y="345" width="9" height="9" fill="#dc0097"/><rect x="298" y="345" width="9" height="9" fill="#dc0091"/><rect x="306" y="345" width="9" height="9" fill="#dd008b"/><rect x="314" y="345" width="9" height="9" fill="#dd0085"/><rect x="322" y="345" width="9" height="9" fill="#de007f"/><rect x="330" y="345" width="9" height="9" fill="#de0079"/><rect x="338" y="345" width="9" height="9" fill="#de0073"/><rect x="346" y="345" width="9" height="9" fill="#df006d"/><rect x="354" y="345" width="9" height="9" fill="#df0064"/><rect x="362" y="345" width="9" height="9" fill="#df005c"/><rect x="370" y="345" width="9" height="9" fill="#df0054"/><rect x="378" y="345" width="9" height="9" fill="#df004c"/><rect x="386" y="345" width="9" height="9" fill="#e00044"/><rect x="394" y="345" width="9" height="9" fill="#e0003d"/><rect x="402" y="345" width="9" height="9" fill="#e00037"/><rect x="410" y="345" width="9" height="9" fill="#e00030"/><rect x="418" y="345" width="9" height="9" fill="#e0002a"/><rect x="426" y="345" width="9" height="9" fill="#e00025"/><rect x="434" y="345" width="9" height="9" fill="#e1001f"/><rect x="442" y="345" width="9" height="9" fill="#e1001a"/><rect x="450" y="345" width="9" height="9" fill="#e10016"/><rect x="458" y="345" width="9" height="9" fill="#e10013"/><rect x="466" y="345" width="9" height="9" fill="#e10011"/><rect x="474" y="345" width="9" height="9" fill="#e10010"/><rect x="482" y="345" width="9" height="9" fill="#e1000f"/><rect x="490" y="345" width="9" height="9" fill="#e1000d"/><rect x="498" y="345" width="9" height="9" fill="#e1000c"/><rect x="506" y="345" width="9" height="9" fill="#e1000b"/><rect x="514" y="345" width="9" height="9" fill="#e1000a"/><rect x="522" y="345" width="9" height="9" fill="#e1000a"/><rect x="530" y="345" width="9" height="9" fill="#e10009"/><rect x="538" y="345" width="9" height="9" fill="#e10008"/><rect x="546" y="345" width="9" height="9" fill="#e10007"/><rect x="554" y="345" width="9" height="9" fill="#e20007"/><rect x="562" y="345" width="9" height="9" fill="#e20006"/><rect x="570" y="345" width="9" height="9" fill="#e20006"/><rect x="578" y="345" width="9" height="9" fill="#e20005"/><rect x="586" y="345" width="9" height="9" fill="#e20005"/><rect x="594" y="345" width="9" height="9" fill="#e20005"/><rect x="602" y="345" width="9" height="9" fill="#e20004"/><rect x="610" y="345" width="9" height="9" fill="#e20004"/><rect x="618" y="345" width="9" height="9" fill="#e20004"/><rect x="626" y="345" width="9" height="9" fill="#e20004"/><rect x="634" y="345" width="9" height="9" fill="#e20004"/><rect x="642" y="345" width="9" height="9" fill="#e20004"/><rect x="650" y="345" width="9" height="9" fill="#e20004"/><rect x="658" y="345" width="9" height="9" fill="#e20005"/><rect x="666" y="345" width="9" height="9" fill="#e20005"/><rect x="674" y="345" width="9" height="9" fill="#e20005"/><rect x="682" y="345" width="9" height="9" fill="#e20005"/><rect x="690" y="345" width="9" height="9" fill="#e20006"/><rect x="698" y="345" width="9" height="9" fill="#e20006"/><rect x="706" y="345" width="9" height="9" fill="#e20007"/><rect x="714" y="345" width="9" height="9" fill="#e20007"/><rect x="722" y="345" width="9" height="9" fill="#e20008"/><rect x="730" y="345" width="9" height="9" fill="#e20009"/><rect x="738" y="345" width="9" height="9" fill="#e2000a"/><rect x="746" y="345" width="9" height="9" fill="#e2000b"/><rect x="754" y="345" width="9" height="9" fill="#e2000c"/><rect x="762" y="345" width="9" height="9" fill="#e2000d"/><rect x="770" y="345" width="9" height="9" fill="#e2000e"/><rect x="778" y="345" width="9" height="9" fill="#e2000f"/><rect x="786" y="345" width="9" height="9" fill="#e20010"/><rect x="794" y="345" width="9" height="9" fill="#e20011"/><rect x="802" y="345" width="9" height="9" fill="#e20013"/><rect x="810" y="345" width="9" height="9" fill="#e20016"/><rect x="818" y="345" width="9" height="9" fill="#e2001b"/><rect x="826" y="345" width="9" height="9" fill="#e20020"/><rect x="834" y="345" width="9" height="9" fill="#e20025"/><rect x="842" y="345" width="9" height="9" fill="#e2002b"/><rect x="850" y="345" width="9" height="9" fill="#e20031"/><rect x="858" y="345" width="9" height="9" fill="#e20038"/><rect x="866" y="345" width="9" height="9" fill="#e2003e"/><rect x="874" y="345" width="9" height="9" fill="#e10046"/><rect x="882" y="345" width="9" height="9" fill="#e1004d"/><rect x="890" y="345" width="9" height="9" fill="#e10055"/><rect x="898" y="345" width="9" height="9" fill="#e1005e"/><rect x="906" y="345" width="9" height="9" fill="#e10067"/><rect x="914" y="345" width="9" height="9" fill="#e1006f"/><rect x="922" y="345" width="9" height="9" fill="#e00076"/><rect x="930" y="345" width="9" height="9" fill="#e0007c"/><rect x="938" y="345" width="9" height="9" fill="#e00082"/><rect x="946" y="345" width="9" height="9" fill="#e00088"/><rect x="954" y="345" width="9" height="9" fill="#df008e"/><rect x="962" y="345" width="9" height="9" fill="#df0095"/><rect x="970" y="345" width="9" height="9" fill="#df009c"/><rect x="978" y="345" width="9" height="9" fill="#de00a3"/><rect x="986" y="345" width="9" height="9" fill="#de00aa"/><rect x="994" y="345" width="9" height="9" fill="#dd00b1"/><rect x="1002" y="345" width="9" height="9" fill="#dc00b9"/><rect x="1010" y="345" width="9" height="9" fill="#dc00c0"/><rect x="1018" y="345" width="9" height="9" fill="#db00c8"/><rect x="1026" y="345" width="9" height="9" fill="#da00d0"/><rect x="1034" y="345" width="9" height="9" fill="#d900d7"/><rect x="1042" y="345" width="9" height="9" fill="#d300d8"/><rect x="1050" y="345" width="9" height="9" fill="#ca00d7"/><rect x="1058" y="345" width="9" height="9" fill="#c000d6"/><rect x="1066" y="345" width="9" height="9" fill="#b300d4"/><rect x="1074" y="345" width="9" height="9" fill="#a400d1"/><rect x="1082" y="345" width="9" height="9" fill="#8f00ce"/><rect x="1090" y="345" width="9" height="9" fill="#7100c9"/><rect x="1098" y="345" width="9" height="9" fill="#6700c9"/><rect x="1106" y="345" width="9" height="9" fill="#6500ca"/><rect x="106" y="353" width="9" height="9" fill="#0701be"/><rect x="114" y="353" width="9" height="9" fill="#0e00bd"/><rect x="122" y="353" width="9" height="9" fill="#2000be"/><rect x="130" y="353" width="9" height="9" fill="#5600c2"/><rect x="138" y="353" width="9" height="9" fill="#6f00c6"/><rect x="146" y="353" width="9" height="9" fill="#8100c8"/><rect x="154" y="353" width="9" height="9" fill="#8f00ca"/><rect x="162" y="353" width="9" height="9" fill="#9c00cc"/><rect x="170" y="353" width="9" height="9" fill="#a800ce"/><rect x="178" y="353" width="9" height="9" fill="#b200cf"/><rect x="186" y="353" width="9" height="9" fill="#bb00d0"/><rect x="194" y="353" width="9" height="9" fill="#c400d2"/><rect x="202" y="353" width="9" height="9" fill="#cb00d3"/><rect x="210" y="353" width="9" height="9" fill="#d200d3"/><rect x="218" y="353" width="9" height="9" fill="#d500cf"/><rect x="226" y="353" width="9" height="9" fill="#d500c8"/><rect x="234" y="353" width="9" height="9" fill="#d600c1"/><rect x="242" y="353" width="9" height="9" fill="#d700ba"/><rect x="250" y="353" width="9" height="9" fill="#d800b3"/><rect x="258" y="353" width="9" height="9" fill="#d800ac"/><rect x="266" y="353" width="9" height="9" fill="#d900a5"/><rect x="274" y="353" width="9" height="9" fill="#d9009e"/><rect x="282" y="353" width="9" height="9" fill="#da0098"/><rect x="290" y="353" width="9" height="9" fill="#da0091"/><rect x="298" y="353" width="9" height="9" fill="#db008b"/><rect x="306" y="353" width="9" height="9" fill="#db0084"/><rect x="314" y="353" width="9" height="9" fill="#dc007e"/><rect x="322" y="353" width="9" height="9" fill="#dc0078"/><rect x="330" y="353" width="9" height="9" fill="#dd0072"/><rect x="338" y="353" width="9" height="9" fill="#dd006b"/><rect x="346" y="353" width="9" height="9" fill="#dd0062"/><rect x="354" y="353" width="9" height="9" fill="#dd0059"/><rect x="362" y="353" width="9" height="9" fill="#de0051"/><rect x="370" y="353" width="9" height="9" fill="#de0048"/><rect x="378" y="353" width="9" height="9" fill="#de0040"/><rect x="386" y="353" width="9" height="9" fill="#df0039"/><rect x="394" y="353" width="9" height="9" fill="#df0032"/><rect x="402" y="353" width="9" height="9" fill="#df002b"/><rect x="410" y="353" width="9" height="9" fill="#df0025"/><rect x="418" y="353" width="9" height="9" fill="#df001f"/><rect x="426" y="353" width="9" height="9" fill="#e00019"/><rect x="434" y="353" width="9" height="9" fill="#e00015"/><rect x="442" y="353" width="9" height="9" fill="#e00012"/><rect x="450" y="353" width="9" height="9" fill="#e00010"/><rect x="458" y="353" width="9" height="9" fill="#e0000f"/><rect x="466" y="353" width="9" height="9" fill="#e0000d"/><rect x="474" y="353" width="9" height="9" fill="#e0000c"/><rect x="482" y="353" width="9" height="9" fill="#e0000b"/><rect x="490" y="353" width="9" height="9" fill="#e10009"/><rect x="498" y="353" width="9" height="9" fill="#e10008"/><rect x="506" y="353" width="9" height="9" fill="#e10007"/><rect x="514" y="353" width="9" height="9" fill="#e10006"/><rect x="522" y="353" width="9" height="9" fill="#e10005"/><rect x="530" y="353" width="9" height="9" fill="#e10005"/><rect x="538" y="353" width="9" height="9" fill="#e10004"/><rect x="546" y="353" width="9" height="9" fill="#e10003"/><rect x="554" y="353" width="9" height="9" fill="#e10003"/><rect x="562" y="353" width="9" height="9" fill="#e10002"/><rect x="570" y="353" width="9" height="9" fill="#e10002"/><rect x="578" y="353" width="9" height="9" fill="#e10001"/><rect x="586" y="353" width="9" height="9" fill="#e10001"/><rect x="594" y="353" width="9" height="9" fill="#e10001"/><rect x="602" y="353" width="9" height="9" fill="#e10001"/><rect x="610" y="353" width="9" height="9" fill="#e20001"/><rect x="618" y="353" width="9" height="9" fill="#e20001"/><rect x="626" y="353" width="9" height="9" fill="#e20001"/><rect x="634" y="353" width="9" height="9" fill="#e20001"/><rect x="642" y="353" width="9" height="9" fill="#e20001"/><rect x="650" y="353" width="9" height="9" fill="#e20001"/><rect x="658" y="353" width="9" height="9" fill="#e20001"/><rect x="666" y="353" width="9" height="9" fill="#e20001"/><rect x="674" y="353" width="9" height="9" fill="#e20001"/><rect x="682" y="353" width="9" height="9" fill="#e20002"/><rect x="690" y="353" width="9" height="9" fill="#e20002"/><rect x="698" y="353" width="9" height="9" fill="#e20003"/><rect x="706" y="353" width="9" height="9" fill="#e20003"/><rect x="714" y="353" width="9" height="9" fill="#e20004"/><rect x="722" y="353" width="9" height="9" fill="#e20005"/><rect x="730" y="353" width="9" height="9" fill="#e20005"/><rect x="738" y="353" width="9" height="9" fill="#e20006"/><rect x="746" y="353" width="9" height="9" fill="#e20007"/><rect x="754" y="353" width="9" height="9" fill="#e20008"/><rect x="762" y="353" width="9" height="9" fill="#e20009"/><rect x="770" y="353" width="9" height="9" fill="#e2000a"/><rect x="778" y="353" width="9" height="9" fill="#e2000b"/><rect x="786" y="353" width="9" height="9" fill="#e2000d"/><rect x="794" y="353" width="9" height="9" fill="#e2000e"/><rect x="802" y="353" width="9" height="9" fill="#e10010"/><rect x="810" y="353" width="9" height="9" fill="#e10011"/><rect x="818" y="353" width="9" height="9" fill="#e10013"/><rect x="826" y="353" width="9" height="9" fill="#e10017"/><rect x="834" y="353" width="9" height="9" fill="#e1001c"/><rect x="842" y="353" width="9" height="9" fill="#e10022"/><rect x="850" y="353" width="9" height="9" fill="#e10028"/><rect x="858" y="353" width="9" height="9" fill="#e1002f"/><rect x="866" y="353" width="9" height="9" fill="#e10036"/><rect x="874" y="353" width="9" height="9" fill="#e0003d"/><rect x="882" y="353" width="9" height="9" fill="#e00045"/><rect x="890" y="353" width="9" height="9" fill="#e0004d"/><rect x="898" y="353" width="9" height="9" fill="#e00056"/><rect x="906" y="353" width="9" height="9" fill="#e0005f"/><rect x="914" y="353" width="9" height="9" fill="#df0068"/><rect x="922" y="353" width="9" height="9" fill="#df0071"/><rect x="930" y="353" width="9" height="9" fill="#df0077"/><rect x="938" y="353" width="9" height="9" fill="#df007d"/><rect x="946" y="353" width="9" height="9" fill="#de0083"/><rect x="954" y="353" width="9" height="9" fill="#de008a"/><rect x="962" y="353" width="9" height="9" fill="#dd0091"/><rect x="970" y="353" width="9" height="9" fill="#dd0098"/><rect x="978" y="353" width="9" height="9" fill="#dc009f"/><rect x="986" y="353" width="9" height="9" fill="#dc00a6"/><rect x="994" y="353" width="9" height="9" fill="#db00ae"/><rect x="1002" y="353" width="9" height="9" fill="#db00b5"/><rect x="1010" y="353" width="9" height="9" fill="#da00bd"/><rect x="1018" y="353" width="9" height="9" fill="#d900c5"/><rect x="1026" y="353" width="9" height="9" fill="#d800cd"/><rect x="1034" y="353" width="9" height="9" fill="#d700d5"/><rect x="1042" y="353" width="9" height="9" fill="#d000d6"/><rect x="1050" y="353" width="9" height="9" fill="#c600d4"/><rect x="1058" y="353" width="9" height="9" fill="#bb00d2"/><rect x="1066" y="353" width="9" height="9" fill="#ad00d0"/><rect x="1074" y="353" width="9" height="9" fill="#9a00cd"/><rect x="1082" y="353" width="9" height="9" fill="#7e00c8"/><rect x="1090" y="353" width="9" height="9" fill="#7400c8"/><rect x="1098" y="353" width="9" height="9" fill="#6c00c8"/><rect x="114" y="361" width="9" height="9" fill="#1a00bd"/><rect x="122" y="361" width="9" height="9" fill="#2500bc"/><rect x="130" y="361" width="9" height="9" fill="#3f00bd"/><rect x="138" y="361" width="9" height="9" fill="#6500c1"/><rect x="146" y="361" width="9" height="9" fill="#7a00c5"/><rect x="154" y="361" width="9" height="9" fill="#8b00c7"/><rect x="162" y="361" width="9" height="9" fill="#9900c9"/><rect x="170" y="361" width="9" height="9" fill="#a500cb"/><rect x="178" y="361" width="9" height="9" fill="#b000cd"/><rect x="186" y="361" width="9" height="9" fill="#b900ce"/><rect x="194" y="361" width="9" height="9" fill="#c200cf"/><rect x="202" y="361" width="9" height="9" fill="#ca00d0"/><rect x="210" y="361" width="9" height="9" fill="#d000d1"/><rect x="218" y="361" width="9" height="9" fill="#d200cb"/><rect x="226" y="361" width="9" height="9" fill="#d300c4"/><rect x="234" y="361" width="9" height="9" fill="#d400bd"/><rect x="242" y="361" width="9" height="9" fill="#d500b6"/><rect x="250" y="361" width="9" height="9" fill="#d600af"/><rect x="258" y="361" width="9" height="9" fill="#d600a8"/><rect x="266" y="361" width="9" height="9" fill="#d700a1"/><rect x="274" y="361" width="9" height="9" fill="#d8009a"/><rect x="282" y="361" width="9" height="9" fill="#d80093"/><rect x="290" y="361" width="9" height="9" fill="#d9008c"/><rect x="298" y="361" width="9" height="9" fill="#d90086"/><rect x="306" y="361" width="9" height="9" fill="#da007f"/><rect x="314" y="361" width="9" height="9" fill="#da0079"/><rect x="322" y="361" width="9" height="9" fill="#db0073"/><rect x="330" y="361" width="9" height="9" fill="#db006c"/><rect x="338" y="361" width="9" height="9" fill="#db0063"/><rect x="346" y="361" width="9" height="9" fill="#dc0059"/><rect x="354" y="361" width="9" height="9" fill="#dc0050"/><rect x="362" y="361" width="9" height="9" fill="#dc0048"/><rect x="370" y="361" width="9" height="9" fill="#dd003f"/><rect x="378" y="361" width="9" height="9" fill="#dd0037"/><rect x="386" y="361" width="9" height="9" fill="#dd0030"/><rect x="394" y="361" width="9" height="9" fill="#dd0029"/><rect x="402" y="361" width="9" height="9" fill="#de0022"/><rect x="410" y="361" width="9" height="9" fill="#de001c"/><rect x="418" y="361" width="9" height="9" fill="#de0016"/><rect x="426" y="361" width="9" height="9" fill="#de0012"/><rect x="434" y="361" width="9" height="9" fill="#df0010"/><rect x="442" y="361" width="9" height="9" fill="#df000f"/><rect x="450" y="361" width="9" height="9" fill="#df000d"/><rect x="458" y="361" width="9" height="9" fill="#df000c"/><rect x="466" y="361" width="9" height="9" fill="#df000a"/><rect x="474" y="361" width="9" height="9" fill="#df0009"/><rect x="482" y="361" width="9" height="9" fill="#e00008"/><rect x="490" y="361" width="9" height="9" fill="#e00006"/><rect x="498" y="361" width="9" height="9" fill="#e00005"/><rect x="506" y="361" width="9" height="9" fill="#e00004"/><rect x="514" y="361" width="9" height="9" fill="#e00003"/><rect x="522" y="361" width="9" height="9" fill="#e00002"/><rect x="530" y="361" width="9" height="9" fill="#e00002"/><rect x="538" y="361" width="9" height="9" fill="#e00001"/><rect x="546" y="361" width="9" height="9" fill="#e00000"/><rect x="554" y="361" width="9" height="9" fill="#e00000"/><rect x="562" y="361" width="9" height="9" fill="#e00000"/><rect x="570" y="361" width="9" height="9" fill="#e10000"/><rect x="578" y="361" width="9" height="9" fill="#e10000"/><rect x="586" y="361" width="9" height="9" fill="#e10000"/><rect x="594" y="361" width="9" height="9" fill="#e10000"/><rect x="602" y="361" width="9" height="9" fill="#e10000"/><rect x="610" y="361" width="9" height="9" fill="#e10000"/><rect x="618" y="361" width="9" height="9" fill="#e10000"/><rect x="626" y="361" width="9" height="9" fill="#e10000"/><rect x="634" y="361" width="9" height="9" fill="#e10000"/><rect x="642" y="361" width="9" height="9" fill="#e10000"/><rect x="650" y="361" width="9" height="9" fill="#e10000"/><rect x="658" y="361" width="9" height="9" fill="#e10000"/><rect x="666" y="361" width="9" height="9" fill="#e10000"/><rect x="674" y="361" width="9" height="9" fill="#e10000"/><rect x="682" y="361" width="9" height="9" fill="#e10000"/><rect x="690" y="361" width="9" height="9" fill="#e10000"/><rect x="698" y="361" width="9" height="9" fill="#e10000"/><rect x="706" y="361" width="9" height="9" fill="#e10001"/><rect x="714" y="361" width="9" height="9" fill="#e10001"/><rect x="722" y="361" width="9" height="9" fill="#e10002"/><rect x="730" y="361" width="9" height="9" fill="#e10003"/><rect x="738" y="361" width="9" height="9" fill="#e10004"/><rect x="746" y="361" width="9" height="9" fill="#e10004"/><rect x="754" y="361" width="9" height="9" fill="#e10005"/><rect x="762" y="361" width="9" height="9" fill="#e10007"/><rect x="770" y="361" width="9" height="9" fill="#e10008"/><rect x="778" y="361" width="9" height="9" fill="#e10009"/><rect x="786" y="361" width="9" height="9" fill="#e1000a"/><rect x="794" y="361" width="9" height="9" fill="#e1000c"/><rect x="802" y="361" width="9" height="9" fill="#e0000d"/><rect x="810" y="361" width="9" height="9" fill="#e0000f"/><rect x="818" y="361" width="9" height="9" fill="#e00010"/><rect x="826" y="361" width="9" height="9" fill="#e00012"/><rect x="834" y="361" width="9" height="9" fill="#e00016"/><rect x="842" y="361" width="9" height="9" fill="#e0001b"/><rect x="850" y="361" width="9" height="9" fill="#e00021"/><rect x="858" y="361" width="9" height="9" fill="#e00028"/><rect x="866" y="361" width="9" height="9" fill="#df002f"/><rect x="874" y="361" width="9" height="9" fill="#df0036"/><rect x="882" y="361" width="9" height="9" fill="#df003e"/><rect x="890" y="361" width="9" height="9" fill="#df0046"/><rect x="898" y="361" width="9" height="9" fill="#de004f"/><rect x="906" y="361" width="9" height="9" fill="#de0058"/><rect x="914" y="361" width="9" height="9" fill="#de0062"/><rect x="922" y="361" width="9" height="9" fill="#de006c"/><rect x="930" y="361" width="9" height="9" fill="#dd0073"/><rect x="938" y="361" width="9" height="9" fill="#dd0079"/><rect x="946" y="361" width="9" height="9" fill="#dc0080"/><rect x="954" y="361" width="9" height="9" fill="#dc0087"/><rect x="962" y="361" width="9" height="9" fill="#dc008d"/><rect x="970" y="361" width="9" height="9" fill="#db0095"/><rect x="978" y="361" width="9" height="9" fill="#da009c"/><rect x="986" y="361" width="9" height="9" fill="#da00a4"/><rect x="994" y="361" width="9" height="9" fill="#d900ab"/><rect x="1002" y="361" width="9" height="9" fill="#d800b3"/><rect x="1010" y="361" width="9" height="9" fill="#d700bb"/><rect x="1018" y="361" width="9" height="9" fill="#d700c3"/><rect x="1026" y="361" width="9" height="9" fill="#d500cb"/><rect x="1034" y="361" width="9" height="9" fill="#d400d3"/><rect x="1042" y="361" width="9" height="9" fill="#cc00d3"/><rect x="1050" y="361" width="9" height="9" fill="#c100d1"/><rect x="1058" y="361" width="9" height="9" fill="#b400cf"/><rect x="1066" y="361" width="9" height="9" fill="#a100cc"/><rect x="1074" y="361" width="9" height="9" fill="#8700c7"/><rect x="1082" y="361" width="9" height="9" fill="#7900c5"/><rect x="1090" y="361" width="9" height="9" fill="#7500c6"/><rect x="122" y="369" width="9" height="9" fill="#3500bc"/><rect x="130" y="369" width="9" height="9" fill="#4a00bc"/><rect x="138" y="369" width="9" height="9" fill="#5500bd"/><rect x="146" y="369" width="9" height="9" fill="#6f00c0"/><rect x="154" y="369" width="9" height="9" fill="#8400c4"/><rect x="162" y="369" width="9" height="9" fill="#9300c6"/><rect x="170" y="369" width="9" height="9" fill="#a100c8"/><rect x="178" y="369" width="9" height="9" fill="#ac00ca"/><rect x="186" y="369" width="9" height="9" fill="#b600cb"/><rect x="194" y="369" width="9" height="9" fill="#bf00cd"/><rect x="202" y="369" width="9" height="9" fill="#c700ce"/><rect x="210" y="369" width="9" height="9" fill="#ce00ce"/><rect x="218" y="369" width="9" height="9" fill="#d000c8"/><rect x="226" y="369" width="9" height="9" fill="#d100c1"/><rect x="234" y="369" width="9" height="9" fill="#d200ba"/><rect x="242" y="369" width="9" height="9" fill="#d300b3"/><rect x="250" y="369" width="9" height="9" fill="#d300ab"/><rect x="258" y="369" width="9" height="9" fill="#d400a4"/><rect x="266" y="369" width="9" height="9" fill="#d5009d"/><rect x="274" y="369" width="9" height="9" fill="#d60096"/><rect x="282" y="369" width="9" height="9" fill="#d6008f"/><rect x="290" y="369" width="9" height="9" fill="#d70088"/><rect x="298" y="369" width="9" height="9" fill="#d70081"/><rect x="306" y="369" width="9" height="9" fill="#d8007b"/><rect x="314" y="369" width="9" height="9" fill="#d80075"/><rect x="322" y="369" width="9" height="9" fill="#d9006e"/><rect x="330" y="369" width="9" height="9" fill="#d90066"/><rect x="338" y="369" width="9" height="9" fill="#da005c"/><rect x="346" y="369" width="9" height="9" fill="#da0052"/><rect x="354" y="369" width="9" height="9" fill="#da0049"/><rect x="362" y="369" width="9" height="9" fill="#db0041"/><rect x="370" y="369" width="9" height="9" fill="#db0038"/><rect x="378" y="369" width="9" height="9" fill="#db0031"/><rect x="386" y="369" width="9" height="9" fill="#dc0029"/><rect x="394" y="369" width="9" height="9" fill="#dc0022"/><rect x="402" y="369" width="9" height="9" fill="#dc001c"/><rect x="410" y="369" width="9" height="9" fill="#dd0016"/><rect x="418" y="369" width="9" height="9" fill="#dd0012"/><rect x="426" y="369" width="9" height="9" fill="#dd0010"/><rect x="434" y="369" width="9" height="9" fill="#dd000e"/><rect x="442" y="369" width="9" height="9" fill="#dd000c"/><rect x="450" y="369" width="9" height="9" fill="#de000b"/><rect x="458" y="369" width="9" height="9" fill="#de0009"/><rect x="466" y="369" width="9" height="9" fill="#de0008"/><rect x="474" y="369" width="9" height="9" fill="#de0007"/><rect x="482" y="369" width="9" height="9" fill="#de0005"/><rect x="490" y="369" width="9" height="9" fill="#de0004"/><rect x="498" y="369" width="9" height="9" fill="#df0003"/><rect x="506" y="369" width="9" height="9" fill="#df0002"/><rect x="514" y="369" width="9" height="9" fill="#df0001"/><rect x="522" y="369" width="9" height="9" fill="#df0000"/><rect x="530" y="369" width="9" height="9" fill="#df0000"/><rect x="538" y="369" width="9" height="9" fill="#df0000"/><rect x="546" y="369" width="9" height="9" fill="#df0000"/><rect x="554" y="369" width="9" height="9" fill="#df0000"/><rect x="562" y="369" width="9" height="9" fill="#df0000"/><rect x="570" y="369" width="9" height="9" fill="#e00000"/><rect x="578" y="369" width="9" height="9" fill="#e00000"/><rect x="586" y="369" width="9" height="9" fill="#e00000"/><rect x="594" y="369" width="9" height="9" fill="#e00000"/><rect x="602" y="369" width="9" height="9" fill="#e00000"/><rect x="610" y="369" width="9" height="9" fill="#e00000"/><rect x="618" y="369" width="9" height="9" fill="#e00000"/><rect x="626" y="369" width="9" height="9" fill="#e00000"/><rect x="634" y="369" width="9" height="9" fill="#e00000"/><rect x="642" y="369" width="9" height="9" fill="#e00000"/><rect x="650" y="369" width="9" height="9" fill="#e00000"/><rect x="658" y="369" width="9" height="9" fill="#e00000"/><rect x="666" y="369" width="9" height="9" fill="#e00000"/><rect x="674" y="369" width="9" height="9" fill="#e00000"/><rect x="682" y="369" width="9" height="9" fill="#e00000"/><rect x="690" y="369" width="9" height="9" fill="#e00000"/><rect x="698" y="369" width="9" height="9" fill="#e00000"/><rect x="706" y="369" width="9" height="9" fill="#e00000"/><rect x="714" y="369" width="9" height="9" fill="#e00000"/><rect x="722" y="369" width="9" height="9" fill="#e00000"/><rect x="730" y="369" width="9" height="9" fill="#e00001"/><rect x="738" y="369" width="9" height="9" fill="#e00001"/><rect x="746" y="369" width="9" height="9" fill="#e00002"/><rect x="754" y="369" width="9" height="9" fill="#e00003"/><rect x="762" y="369" width="9" height="9" fill="#e00005"/><rect x="770" y="369" width="9" height="9" fill="#e00006"/><rect x="778" y="369" width="9" height="9" fill="#e00007"/><rect x="786" y="369" width="9" height="9" fill="#df0008"/><rect x="794" y="369" width="9" height="9" fill="#df000a"/><rect x="802" y="369" width="9" height="9" fill="#df000b"/><rect x="810" y="369" width="9" height="9" fill="#df000d"/><rect x="818" y="369" width="9" height="9" fill="#df000e"/><rect x="826" y="369" width="9" height="9" fill="#df0010"/><rect x="834" y="369" width="9" height="9" fill="#df0012"/><rect x="842" y="369" width="9" height="9" fill="#df0016"/><rect x="850" y="369" width="9" height="9" fill="#de001c"/><rect x="858" y="369" width="9" height="9" fill="#de0023"/><rect x="866" y="369" width="9" height="9" fill="#de002a"/><rect x="874" y="369" width="9" height="9" fill="#de0031"/><rect x="882" y="369" width="9" height="9" fill="#dd0039"/><rect x="890" y="369" width="9" height="9" fill="#dd0041"/><rect x="898" y="369" width="9" height="9" fill="#dd004a"/><rect x="906" y="369" width="9" height="9" fill="#dd0054"/><rect x="914" y="369" width="9" height="9" fill="#dc005d"/><rect x="922" y="369" width="9" height="9" fill="#dc0067"/><rect x="930" y="369" width="9" height="9" fill="#db0070"/><rect x="938" y="369" width="9" height="9" fill="#db0077"/><rect x="946" y="369" width="9" height="9" fill="#db007d"/><rect x="954" y="369" width="9" height="9" fill="#da0084"/><rect x="962" y="369" width="9" height="9" fill="#da008b"/><rect x="970" y="369" width="9" height="9" fill="#d90092"/><rect x="978" y="369" width="9" height="9" fill="#d8009a"/><rect x="986" y="369" width="9" height="9" fill="#d800a2"/><rect x="994" y="369" width="9" height="9" fill="#d700aa"/><rect x="1002" y="369" width="9" height="9" fill="#d600b2"/><rect x="1010" y="369" width="9" height="9" fill="#d500ba"/><rect x="1018" y="369" width="9" height="9" fill="#d400c2"/><rect x="1026" y="369" width="9" height="9" fill="#d300cb"/><rect x="1034" y="369" width="9" height="9" fill="#cf00d1"/><rect x="1042" y="369" width="9" height="9" fill="#c500cf"/><rect x="1050" y="369" width="9" height="9" fill="#b800cd"/><rect x="1058" y="369" width="9" height="9" fill="#a600c9"/><rect x="1066" y="369" width="9" height="9" fill="#8e00c5"/><rect x="1074" y="369" width="9" height="9" fill="#8800c5"/><rect x="1082" y="369" width="9" height="9" fill="#7c00c5"/><rect x="130" y="377" width="9" height="9" fill="#5100bc"/><rect x="138" y="377" width="9" height="9" fill="#5400bb"/><rect x="146" y="377" width="9" height="9" fill="#5e00bb"/><rect x="154" y="377" width="9" height="9" fill="#7600bf"/><rect x="162" y="377" width="9" height="9" fill="#8b00c2"/><rect x="170" y="377" width="9" height="9" fill="#9a00c5"/><rect x="178" y="377" width="9" height="9" fill="#a700c7"/><rect x="186" y="377" width="9" height="9" fill="#b200c8"/><rect x="194" y="377" width="9" height="9" fill="#bb00ca"/><rect x="202" y="377" width="9" height="9" fill="#c400cb"/><rect x="210" y="377" width="9" height="9" fill="#cb00cc"/><rect x="218" y="377" width="9" height="9" fill="#cd00c6"/><rect x="226" y="377" width="9" height="9" fill="#cf00bf"/><rect x="234" y="377" width="9" height="9" fill="#cf00b7"/><rect x="242" y="377" width="9" height="9" fill="#d000b0"/><rect x="250" y="377" width="9" height="9" fill="#d100a9"/><rect x="258" y="377" width="9" height="9" fill="#d200a1"/><rect x="266" y="377" width="9" height="9" fill="#d3009a"/><rect x="274" y="377" width="9" height="9" fill="#d30093"/><rect x="282" y="377" width="9" height="9" fill="#d4008c"/><rect x="290" y="377" width="9" height="9" fill="#d50085"/><rect x="298" y="377" width="9" height="9" fill="#d5007e"/><rect x="306" y="377" width="9" height="9" fill="#d60078"/><rect x="314" y="377" width="9" height="9" fill="#d60071"/><rect x="322" y="377" width="9" height="9" fill="#d7006b"/><rect x="330" y="377" width="9" height="9" fill="#d70061"/><rect x="338" y="377" width="9" height="9" fill="#d80057"/><rect x="346" y="377" width="9" height="9" fill="#d8004d"/><rect x="354" y="377" width="9" height="9" fill="#d90044"/><rect x="362" y="377" width="9" height="9" fill="#d9003b"/><rect x="370" y="377" width="9" height="9" fill="#d90033"/><rect x="378" y="377" width="9" height="9" fill="#da002b"/><rect x="386" y="377" width="9" height="9" fill="#da0024"/><rect x="394" y="377" width="9" height="9" fill="#da001d"/><rect x="402" y="377" width="9" height="9" fill="#db0017"/><rect x="410" y="377" width="9" height="9" fill="#db0012"/><rect x="418" y="377" width="9" height="9" fill="#db0010"/><rect x="426" y="377" width="9" height="9" fill="#db000e"/><rect x="434" y="377" width="9" height="9" fill="#dc000c"/><rect x="442" y="377" width="9" height="9" fill="#dc000b"/><rect x="450" y="377" width="9" height="9" fill="#dc0009"/><rect x="458" y="377" width="9" height="9" fill="#dc0008"/><rect x="466" y="377" width="9" height="9" fill="#dd0006"/><rect x="474" y="377" width="9" height="9" fill="#dd0005"/><rect x="482" y="377" width="9" height="9" fill="#dd0004"/><rect x="490" y="377" width="9" height="9" fill="#dd0002"/><rect x="498" y="377" width="9" height="9" fill="#dd0001"/><rect x="506" y="377" width="9" height="9" fill="#dd0000"/><rect x="514" y="377" width="9" height="9" fill="#de0000"/><rect x="522" y="377" width="9" height="9" fill="#de0000"/><rect x="530" y="377" width="9" height="9" fill="#de0000"/><rect x="538" y="377" width="9" height="9" fill="#de0000"/><rect x="546" y="377" width="9" height="9" fill="#de0000"/><rect x="554" y="377" width="9" height="9" fill="#de0000"/><rect x="562" y="377" width="9" height="9" fill="#de0000"/><rect x="570" y="377" width="9" height="9" fill="#de0000"/><rect x="578" y="377" width="9" height="9" fill="#de0000"/><rect x="586" y="377" width="9" height="9" fill="#de0000"/><rect x="594" y="377" width="9" height="9" fill="#de0000"/><rect x="602" y="377" width="9" height="9" fill="#df0000"/><rect x="610" y="377" width="9" height="9" fill="#df0000"/><rect x="618" y="377" width="9" height="9" fill="#df0000"/><rect x="626" y="377" width="9" height="9" fill="#df0000"/><rect x="634" y="377" width="9" height="9" fill="#df0000"/><rect x="642" y="377" width="9" height="9" fill="#df0000"/><rect x="650" y="377" width="9" height="9" fill="#df0000"/><rect x="658" y="377" width="9" height="9" fill="#df0000"/><rect x="666" y="377" width="9" height="9" fill="#df0000"/><rect x="674" y="377" width="9" height="9" fill="#df0000"/><rect x="682" y="377" width="9" height="9" fill="#df0000"/><rect x="690" y="377" width="9" height="9" fill="#df0000"/><rect x="698" y="377" width="9" height="9" fill="#df0000"/><rect x="706" y="377" width="9" height="9" fill="#df0000"/><rect x="714" y="377" width="9" height="9" fill="#df0000"/><rect x="722" y="377" width="9" height="9" fill="#df0000"/><rect x="730" y="377" width="9" height="9" fill="#df0000"/><rect x="738" y="377" width="9" height="9" fill="#df0000"/><rect x="746" y="377" width="9" height="9" fill="#df0001"/><rect x="754" y="377" width="9" height="9" fill="#de0002"/><rect x="762" y="377" width="9" height="9" fill="#de0003"/><rect x="770" y="377" width="9" height="9" fill="#de0004"/><rect x="778" y="377" width="9" height="9" fill="#de0005"/><rect x="786" y="377" width="9" height="9" fill="#de0007"/><rect x="794" y="377" width="9" height="9" fill="#de0008"/><rect x="802" y="377" width="9" height="9" fill="#de000a"/><rect x="810" y="377" width="9" height="9" fill="#de000b"/><rect x="818" y="377" width="9" height="9" fill="#de000d"/><rect x="826" y="377" width="9" height="9" fill="#dd000f"/><rect x="834" y="377" width="9" height="9" fill="#dd0011"/><rect x="842" y="377" width="9" height="9" fill="#dd0013"/><rect x="850" y="377" width="9" height="9" fill="#dd0019"/><rect x="858" y="377" width="9" height="9" fill="#dd001f"/><rect x="866" y="377" width="9" height="9" fill="#dc0026"/><rect x="874" y="377" width="9" height="9" fill="#dc002e"/><rect x="882" y="377" width="9" height="9" fill="#dc0036"/><rect x="890" y="377" width="9" height="9" fill="#db003e"/><rect x="898" y="377" width="9" height="9" fill="#db0047"/><rect x="906" y="377" width="9" height="9" fill="#db0050"/><rect x="914" y="377" width="9" height="9" fill="#da005a"/><rect x="922" y="377" width="9" height="9" fill="#da0065"/><rect x="930" y="377" width="9" height="9" fill="#d9006e"/><rect x="938" y="377" width="9" height="9" fill="#d90075"/><rect x="946" y="377" width="9" height="9" fill="#d8007c"/><rect x="954" y="377" width="9" height="9" fill="#d80083"/><rect x="962" y="377" width="9" height="9" fill="#d7008a"/><rect x="970" y="377" width="9" height="9" fill="#d70091"/><rect x="978" y="377" width="9" height="9" fill="#d60099"/><rect x="986" y="377" width="9" height="9" fill="#d500a1"/><rect x="994" y="377" width="9" height="9" fill="#d400a9"/><rect x="1002" y="377" width="9" height="9" fill="#d300b1"/><rect x="1010" y="377" width="9" height="9" fill="#d200ba"/><rect x="1018" y="377" width="9" height="9" fill="#d100c3"/><rect x="1026" y="377" width="9" height="9" fill="#cf00cb"/><rect x="1034" y="377" width="9" height="9" fill="#c800cd"/><rect x="1042" y="377" width="9" height="9" fill="#bb00cb"/><rect x="1050" y="377" width="9" height="9" fill="#a700c7"/><rect x="1058" y="377" width="9" height="9" fill="#9500c4"/><rect x="1066" y="377" width="9" height="9" fill="#8d00c3"/><rect x="1074" y="377" width="9" height="9" fill="#8800c4"/><rect x="138" y="385" width="9" height="9" fill="#5700ba"/><rect x="146" y="385" width="9" height="9" fill="#5e00ba"/><rect x="154" y="385" width="9" height="9" fill="#6600ba"/><rect x="162" y="385" width="9" height="9" fill="#7a00bd"/><rect x="170" y="385" width="9" height="9" fill="#9000c1"/><rect x="178" y="385" width="9" height="9" fill="#9f00c3"/><rect x="186" y="385" width="9" height="9" fill="#ab00c5"/><rect x="194" y="385" width="9" height="9" fill="#b600c7"/><rect x="202" y="385" width="9" height="9" fill="#bf00c8"/><rect x="210" y="385" width="9" height="9" fill="#c700c9"/><rect x="218" y="385" width="9" height="9" fill="#cb00c5"/><rect x="226" y="385" width="9" height="9" fill="#cc00bd"/><rect x="234" y="385" width="9" height="9" fill="#cd00b6"/><rect x="242" y="385" width="9" height="9" fill="#ce00af"/><rect x="250" y="385" width="9" height="9" fill="#cf00a7"/><rect x="258" y="385" width="9" height="9" fill="#d000a0"/><rect x="266" y="385" width="9" height="9" fill="#d00098"/><rect x="274" y="385" width="9" height="9" fill="#d10091"/><rect x="282" y="385" width="9" height="9" fill="#d2008a"/><rect x="290" y="385" width="9" height="9" fill="#d20083"/><rect x="298" y="385" width="9" height="9" fill="#d3007c"/><rect x="306" y="385" width="9" height="9" fill="#d40076"/><rect x="314" y="385" width="9" height="9" fill="#d4006f"/><rect x="322" y="385" width="9" height="9" fill="#d50068"/><rect x="330" y="385" width="9" height="9" fill="#d5005d"/><rect x="338" y="385" width="9" height="9" fill="#d60053"/><rect x="346" y="385" width="9" height="9" fill="#d6004a"/><rect x="354" y="385" width="9" height="9" fill="#d70041"/><rect x="362" y="385" width="9" height="9" fill="#d70038"/><rect x="370" y="385" width="9" height="9" fill="#d70030"/><rect x="378" y="385" width="9" height="9" fill="#d80028"/><rect x="386" y="385" width="9" height="9" fill="#d80020"/><rect x="394" y="385" width="9" height="9" fill="#d9001a"/><rect x="402" y="385" width="9" height="9" fill="#d90013"/><rect x="410" y="385" width="9" height="9" fill="#d90011"/><rect x="418" y="385" width="9" height="9" fill="#d9000f"/><rect x="426" y="385" width="9" height="9" fill="#da000d"/><rect x="434" y="385" width="9" height="9" fill="#da000b"/><rect x="442" y="385" width="9" height="9" fill="#da0009"/><rect x="450" y="385" width="9" height="9" fill="#da0008"/><rect x="458" y="385" width="9" height="9" fill="#db0006"/><rect x="466" y="385" width="9" height="9" fill="#db0005"/><rect x="474" y="385" width="9" height="9" fill="#db0003"/><rect x="482" y="385" width="9" height="9" fill="#db0002"/><rect x="490" y="385" width="9" height="9" fill="#dc0001"/><rect x="498" y="385" width="9" height="9" fill="#dc0000"/><rect x="506" y="385" width="9" height="9" fill="#dc0000"/><rect x="514" y="385" width="9" height="9" fill="#dc0000"/><rect x="522" y="385" width="9" height="9" fill="#dc0000"/><rect x="530" y="385" width="9" height="9" fill="#dc0000"/><rect x="538" y="385" width="9" height="9" fill="#dc0000"/><rect x="546" y="385" width="9" height="9" fill="#dd0000"/><rect x="554" y="385" width="9" height="9" fill="#dd0000"/><rect x="562" y="385" width="9" height="9" fill="#dd0000"/><rect x="570" y="385" width="9" height="9" fill="#dd0000"/><rect x="578" y="385" width="9" height="9" fill="#dd0000"/><rect x="586" y="385" width="9" height="9" fill="#dd0000"/><rect x="594" y="385" width="9" height="9" fill="#dd0000"/><rect x="602" y="385" width="9" height="9" fill="#dd0000"/><rect x="610" y="385" width="9" height="9" fill="#dd0000"/><rect x="618" y="385" width="9" height="9" fill="#dd0000"/><rect x="626" y="385" width="9" height="9" fill="#dd0000"/><rect x="634" y="385" width="9" height="9" fill="#dd0000"/><rect x="642" y="385" width="9" height="9" fill="#dd0000"/><rect x="650" y="385" width="9" height="9" fill="#dd0000"/><rect x="658" y="385" width="9" height="9" fill="#dd0000"/><rect x="666" y="385" width="9" height="9" fill="#dd0000"/><rect x="674" y="385" width="9" height="9" fill="#dd0000"/><rect x="682" y="385" width="9" height="9" fill="#dd0000"/><rect x="690" y="385" width="9" height="9" fill="#dd0000"/><rect x="698" y="385" width="9" height="9" fill="#dd0000"/><rect x="706" y="385" width="9" height="9" fill="#dd0000"/><rect x="714" y="385" width="9" height="9" fill="#dd0000"/><rect x="722" y="385" width="9" height="9" fill="#dd0000"/><rect x="730" y="385" width="9" height="9" fill="#dd0000"/><rect x="738" y="385" width="9" height="9" fill="#dd0000"/><rect x="746" y="385" width="9" height="9" fill="#dd0000"/><rect x="754" y="385" width="9" height="9" fill="#dd0001"/><rect x="762" y="385" width="9" height="9" fill="#dd0002"/><rect x="770" y="385" width="9" height="9" fill="#dd0003"/><rect x="778" y="385" width="9" height="9" fill="#dd0004"/><rect x="786" y="385" width="9" height="9" fill="#dc0006"/><rect x="794" y="385" width="9" height="9" fill="#dc0007"/><rect x="802" y="385" width="9" height="9" fill="#dc0009"/><rect x="810" y="385" width="9" height="9" fill="#dc000a"/><rect x="818" y="385" width="9" height="9" fill="#dc000c"/><rect x="826" y="385" width="9" height="9" fill="#dc000e"/><rect x="834" y="385" width="9" height="9" fill="#db0010"/><rect x="842" y="385" width="9" height="9" fill="#db0012"/><rect x="850" y="385" width="9" height="9" fill="#db0016"/><rect x="858" y="385" width="9" height="9" fill="#db001d"/><rect x="866" y="385" width="9" height="9" fill="#da0024"/><rect x="874" y="385" width="9" height="9" fill="#da002c"/><rect x="882" y="385" width="9" height="9" fill="#da0034"/><rect x="890" y="385" width="9" height="9" fill="#d9003c"/><rect x="898" y="385" width="9" height="9" fill="#d90045"/><rect x="906" y="385" width="9" height="9" fill="#d9004f"/><rect x="914" y="385" width="9" height="9" fill="#d80059"/><rect x="922" y="385" width="9" height="9" fill="#d80064"/><rect x="930" y="385" width="9" height="9" fill="#d7006d"/><rect x="938" y="385" width="9" height="9" fill="#d70074"/><rect x="946" y="385" width="9" height="9" fill="#d6007b"/><rect x="954" y="385" width="9" height="9" fill="#d50082"/><rect x="962" y="385" width="9" height="9" fill="#d5008a"/><rect x="970" y="385" width="9" height="9" fill="#d40091"/><rect x="978" y="385" width="9" height="9" fill="#d30099"/><rect x="986" y="385" width="9" height="9" fill="#d200a1"/><rect x="994" y="385" width="9" height="9" fill="#d100aa"/><rect x="1002" y="385" width="9" height="9" fill="#d000b2"/><rect x="1010" y="385" width="9" height="9" fill="#ce00bb"/><rect x="1018" y="385" width="9" height="9" fill="#cd00c4"/><rect x="1026" y="385" width="9" height="9" fill="#c800ca"/><rect x="1034" y="385" width="9" height="9" fill="#ba00c8"/><rect x="1042" y="385" width="9" height="9" fill="#a600c3"/><rect x="1050" y="385" width="9" height="9" fill="#9a00c2"/><rect x="1058" y="385" width="9" height="9" fill="#9500c2"/><rect x="1066" y="385" width="9" height="9" fill="#9000c3"/><rect x="146" y="393" width="9" height="9" fill="#6100ba"/><rect x="154" y="393" width="9" height="9" fill="#6500b9"/><rect x="162" y="393" width="9" height="9" fill="#6e00b9"/><rect x="170" y="393" width="9" height="9" fill="#7d00bb"/><rect x="178" y="393" width="9" height="9" fill="#9100be"/><rect x="186" y="393" width="9" height="9" fill="#a200c1"/><rect x="194" y="393" width="9" height="9" fill="#ae00c3"/><rect x="202" y="393" width="9" height="9" fill="#b900c5"/><rect x="210" y="393" width="9" height="9" fill="#c200c6"/><rect x="218" y="393" width="9" height="9" fill="#c800c4"/><rect x="226" y="393" width="9" height="9" fill="#c900bd"/><rect x="234" y="393" width="9" height="9" fill="#ca00b5"/><rect x="242" y="393" width="9" height="9" fill="#cb00ae"/><rect x="250" y="393" width="9" height="9" fill="#cc00a6"/><rect x="258" y="393" width="9" height="9" fill="#cd009f"/><rect x="266" y="393" width="9" height="9" fill="#ce0097"/><rect x="274" y="393" width="9" height="9" fill="#cf0090"/><rect x="282" y="393" width="9" height="9" fill="#cf0089"/><rect x="290" y="393" width="9" height="9" fill="#d00082"/><rect x="298" y="393" width="9" height="9" fill="#d1007b"/><rect x="306" y="393" width="9" height="9" fill="#d10074"/><rect x="314" y="393" width="9" height="9" fill="#d2006e"/><rect x="322" y="393" width="9" height="9" fill="#d30066"/><rect x="330" y="393" width="9" height="9" fill="#d3005b"/><rect x="338" y="393" width="9" height="9" fill="#d40051"/><rect x="346" y="393" width="9" height="9" fill="#d40048"/><rect x="354" y="393" width="9" height="9" fill="#d5003e"/><rect x="362" y="393" width="9" height="9" fill="#d50036"/><rect x="370" y="393" width="9" height="9" fill="#d5002d"/><rect x="378" y="393" width="9" height="9" fill="#d60026"/><rect x="386" y="393" width="9" height="9" fill="#d6001e"/><rect x="394" y="393" width="9" height="9" fill="#d70017"/><rect x="402" y="393" width="9" height="9" fill="#d70012"/><rect x="410" y="393" width="9" height="9" fill="#d70010"/><rect x="418" y="393" width="9" height="9" fill="#d8000e"/><rect x="426" y="393" width="9" height="9" fill="#d8000c"/><rect x="434" y="393" width="9" height="9" fill="#d8000a"/><rect x="442" y="393" width="9" height="9" fill="#d80008"/><rect x="450" y="393" width="9" height="9" fill="#d90007"/><rect x="458" y="393" width="9" height="9" fill="#d90005"/><rect x="466" y="393" width="9" height="9" fill="#d90004"/><rect x="474" y="393" width="9" height="9" fill="#d90003"/><rect x="482" y="393" width="9" height="9" fill="#da0001"/><rect x="490" y="393" width="9" height="9" fill="#da0000"/><rect x="498" y="393" width="9" height="9" fill="#da0000"/><rect x="506" y="393" width="9" height="9" fill="#da0000"/><rect x="514" y="393" width="9" height="9" fill="#da0000"/><rect x="522" y="393" width="9" height="9" fill="#da0000"/><rect x="530" y="393" width="9" height="9" fill="#db0000"/><rect x="538" y="393" width="9" height="9" fill="#db0000"/><rect x="546" y="393" width="9" height="9" fill="#db0000"/><rect x="554" y="393" width="9" height="9" fill="#db0000"/><rect x="562" y="393" width="9" height="9" fill="#db0000"/><rect x="570" y="393" width="9" height="9" fill="#db0000"/><rect x="578" y="393" width="9" height="9" fill="#db0000"/><rect x="586" y="393" width="9" height="9" fill="#db0000"/><rect x="594" y="393" width="9" height="9" fill="#db0000"/><rect x="602" y="393" width="9" height="9" fill="#dc0000"/><rect x="610" y="393" width="9" height="9" fill="#dc0000"/><rect x="618" y="393" width="9" height="9" fill="#dc0000"/><rect x="626" y="393" width="9" height="9" fill="#dc0000"/><rect x="634" y="393" width="9" height="9" fill="#dc0000"/><rect x="642" y="393" width="9" height="9" fill="#dc0000"/><rect x="650" y="393" width="9" height="9" fill="#dc0000"/><rect x="658" y="393" width="9" height="9" fill="#dc0000"/><rect x="666" y="393" width="9" height="9" fill="#dc0000"/><rect x="674" y="393" width="9" height="9" fill="#dc0000"/><rect x="682" y="393" width="9" height="9" fill="#dc0000"/><rect x="690" y="393" width="9" height="9" fill="#dc0000"/><rect x="698" y="393" width="9" height="9" fill="#dc0000"/><rect x="706" y="393" width="9" height="9" fill="#dc0000"/><rect x="714" y="393" width="9" height="9" fill="#dc0000"/><rect x="722" y="393" width="9" height="9" fill="#dc0000"/><rect x="730" y="393" width="9" height="9" fill="#db0000"/><rect x="738" y="393" width="9" height="9" fill="#db0000"/><rect x="746" y="393" width="9" height="9" fill="#db0000"/><rect x="754" y="393" width="9" height="9" fill="#db0000"/><rect x="762" y="393" width="9" height="9" fill="#db0001"/><rect x="770" y="393" width="9" height="9" fill="#db0003"/><rect x="778" y="393" width="9" height="9" fill="#db0004"/><rect x="786" y="393" width="9" height="9" fill="#db0005"/><rect x="794" y="393" width="9" height="9" fill="#db0007"/><rect x="802" y="393" width="9" height="9" fill="#da0008"/><rect x="810" y="393" width="9" height="9" fill="#da000a"/><rect x="818" y="393" width="9" height="9" fill="#da000c"/><rect x="826" y="393" width="9" height="9" fill="#da000d"/><rect x="834" y="393" width="9" height="9" fill="#da000f"/><rect x="842" y="393" width="9" height="9" fill="#d90011"/><rect x="850" y="393" width="9" height="9" fill="#d90015"/><rect x="858" y="393" width="9" height="9" fill="#d9001c"/><rect x="866" y="393" width="9" height="9" fill="#d80023"/><rect x="874" y="393" width="9" height="9" fill="#d8002b"/><rect x="882" y="393" width="9" height="9" fill="#d80033"/><rect x="890" y="393" width="9" height="9" fill="#d7003c"/><rect x="898" y="393" width="9" height="9" fill="#d70045"/><rect x="906" y="393" width="9" height="9" fill="#d6004f"/><rect x="914" y="393" width="9" height="9" fill="#d60059"/><rect x="922" y="393" width="9" height="9" fill="#d50064"/><rect x="930" y="393" width="9" height="9" fill="#d5006d"/><rect x="938" y="393" width="9" height="9" fill="#d40074"/><rect x="946" y="393" width="9" height="9" fill="#d3007b"/><rect x="954" y="393" width="9" height="9" fill="#d30083"/><rect x="962" y="393" width="9" height="9" fill="#d2008a"/><rect x="970" y="393" width="9" height="9" fill="#d10092"/><rect x="978" y="393" width="9" height="9" fill="#d0009a"/><rect x="986" y="393" width="9" height="9" fill="#cf00a3"/><rect x="994" y="393" width="9" height="9" fill="#ce00ac"/><rect x="1002" y="393" width="9" height="9" fill="#cc00b5"/><rect x="1010" y="393" width="9" height="9" fill="#ca00be"/><rect x="1018" y="393" width="9" height="9" fill="#c600c6"/><rect x="1026" y="393" width="9" height="9" fill="#b700c4"/><rect x="1034" y="393" width="9" height="9" fill="#a700c1"/><rect x="1042" y="393" width="9" height="9" fill="#a000c1"/><rect x="1050" y="393" width="9" height="9" fill="#9900c0"/><rect x="162" y="401" width="9" height="9" fill="#7200b9"/><rect x="170" y="401" width="9" height="9" fill="#7600b9"/><rect x="178" y="401" width="9" height="9" fill="#7f00b9"/><rect x="186" y="401" width="9" height="9" fill="#9000bc"/><rect x="194" y="401" width="9" height="9" fill="#a200bf"/><rect x="202" y="401" width="9" height="9" fill="#b000c1"/><rect x="210" y="401" width="9" height="9" fill="#ba00c3"/><rect x="218" y="401" width="9" height="9" fill="#c300c4"/><rect x="226" y="401" width="9" height="9" fill="#c600be"/><rect x="234" y="401" width="9" height="9" fill="#c700b6"/><rect x="242" y="401" width="9" height="9" fill="#c800ae"/><rect x="250" y="401" width="9" height="9" fill="#c900a7"/><rect x="258" y="401" width="9" height="9" fill="#ca009f"/><rect x="266" y="401" width="9" height="9" fill="#cb0097"/><rect x="274" y="401" width="9" height="9" fill="#cc0090"/><rect x="282" y="401" width="9" height="9" fill="#cd0089"/><rect x="290" y="401" width="9" height="9" fill="#ce0081"/><rect x="298" y="401" width="9" height="9" fill="#ce007a"/><rect x="306" y="401" width="9" height="9" fill="#cf0074"/><rect x="314" y="401" width="9" height="9" fill="#d0006d"/><rect x="322" y="401" width="9" height="9" fill="#d00065"/><rect x="330" y="401" width="9" height="9" fill="#d1005b"/><rect x="338" y="401" width="9" height="9" fill="#d10051"/><rect x="346" y="401" width="9" height="9" fill="#d20047"/><rect x="354" y="401" width="9" height="9" fill="#d2003e"/><rect x="362" y="401" width="9" height="9" fill="#d30035"/><rect x="370" y="401" width="9" height="9" fill="#d3002d"/><rect x="378" y="401" width="9" height="9" fill="#d40025"/><rect x="386" y="401" width="9" height="9" fill="#d4001d"/><rect x="394" y="401" width="9" height="9" fill="#d40016"/><rect x="402" y="401" width="9" height="9" fill="#d50011"/><rect x="410" y="401" width="9" height="9" fill="#d5000f"/><rect x="418" y="401" width="9" height="9" fill="#d6000d"/><rect x="426" y="401" width="9" height="9" fill="#d6000b"/><rect x="434" y="401" width="9" height="9" fill="#d6000a"/><rect x="442" y="401" width="9" height="9" fill="#d60008"/><rect x="450" y="401" width="9" height="9" fill="#d70006"/><rect x="458" y="401" width="9" height="9" fill="#d70005"/><rect x="466" y="401" width="9" height="9" fill="#d70003"/><rect x="474" y="401" width="9" height="9" fill="#d70002"/><rect x="482" y="401" width="9" height="9" fill="#d80001"/><rect x="490" y="401" width="9" height="9" fill="#d80000"/><rect x="498" y="401" width="9" height="9" fill="#d80000"/><rect x="506" y="401" width="9" height="9" fill="#d80000"/><rect x="514" y="401" width="9" height="9" fill="#d80000"/><rect x="522" y="401" width="9" height="9" fill="#d90000"/><rect x="530" y="401" width="9" height="9" fill="#d90000"/><rect x="538" y="401" width="9" height="9" fill="#d90000"/><rect x="546" y="401" width="9" height="9" fill="#d90000"/><rect x="554" y="401" width="9" height="9" fill="#d90000"/><rect x="562" y="401" width="9" height="9" fill="#d90000"/><rect x="570" y="401" width="9" height="9" fill="#d90000"/><rect x="578" y="401" width="9" height="9" fill="#da0000"/><rect x="586" y="401" width="9" height="9" fill="#da0000"/><rect x="594" y="401" width="9" height="9" fill="#da0000"/><rect x="602" y="401" width="9" height="9" fill="#da0000"/><rect x="610" y="401" width="9" height="9" fill="#da0000"/><rect x="618" y="401" width="9" height="9" fill="#da0000"/><rect x="626" y="401" width="9" height="9" fill="#da0000"/><rect x="634" y="401" width="9" height="9" fill="#da0000"/><rect x="642" y="401" width="9" height="9" fill="#da0000"/><rect x="650" y="401" width="9" height="9" fill="#da0000"/><rect x="658" y="401" width="9" height="9" fill="#da0000"/><rect x="666" y="401" width="9" height="9" fill="#da0000"/><rect x="674" y="401" width="9" height="9" fill="#da0000"/><rect x="682" y="401" width="9" height="9" fill="#da0000"/><rect x="690" y="401" width="9" height="9" fill="#da0000"/><rect x="698" y="401" width="9" height="9" fill="#da0000"/><rect x="706" y="401" width="9" height="9" fill="#da0000"/><rect x="714" y="401" width="9" height="9" fill="#da0000"/><rect x="722" y="401" width="9" height="9" fill="#da0000"/><rect x="730" y="401" width="9" height="9" fill="#da0000"/><rect x="738" y="401" width="9" height="9" fill="#da0000"/><rect x="746" y="401" width="9" height="9" fill="#d90000"/><rect x="754" y="401" width="9" height="9" fill="#d90000"/><rect x="762" y="401" width="9" height="9" fill="#d90001"/><rect x="770" y="401" width="9" height="9" fill="#d90002"/><rect x="778" y="401" width="9" height="9" fill="#d90004"/><rect x="786" y="401" width="9" height="9" fill="#d90005"/><rect x="794" y="401" width="9" height="9" fill="#d90006"/><rect x="802" y="401" width="9" height="9" fill="#d80008"/><rect x="810" y="401" width="9" height="9" fill="#d8000a"/><rect x="818" y="401" width="9" height="9" fill="#d8000b"/><rect x="826" y="401" width="9" height="9" fill="#d8000d"/><rect x="834" y="401" width="9" height="9" fill="#d7000f"/><rect x="842" y="401" width="9" height="9" fill="#d70011"/><rect x="850" y="401" width="9" height="9" fill="#d70016"/><rect x="858" y="401" width="9" height="9" fill="#d6001d"/><rect x="866" y="401" width="9" height="9" fill="#d60024"/><rect x="874" y="401" width="9" height="9" fill="#d6002c"/><rect x="882" y="401" width="9" height="9" fill="#d50034"/><rect x="890" y="401" width="9" height="9" fill="#d5003d"/><rect x="898" y="401" width="9" height="9" fill="#d40047"/><rect x="906" y="401" width="9" height="9" fill="#d40051"/><rect x="914" y="401" width="9" height="9" fill="#d3005c"/><rect x="922" y="401" width="9" height="9" fill="#d30066"/><rect x="930" y="401" width="9" height="9" fill="#d2006e"/><rect x="938" y="401" width="9" height="9" fill="#d10076"/><rect x="946" y="401" width="9" height="9" fill="#d0007d"/><rect x="954" y="401" width="9" height="9" fill="#d00084"/><rect x="962" y="401" width="9" height="9" fill="#cf008c"/><rect x="970" y="401" width="9" height="9" fill="#ce0095"/><rect x="978" y="401" width="9" height="9" fill="#cc009d"/><rect x="986" y="401" width="9" height="9" fill="#cb00a6"/><rect x="994" y="401" width="9" height="9" fill="#c900b0"/><rect x="1002" y="401" width="9" height="9" fill="#c700ba"/><rect x="1010" y="401" width="9" height="9" fill="#c000c1"/><rect x="1018" y="401" width="9" height="9" fill="#b200c0"/><rect x="1026" y="401" width="9" height="9" fill="#ad00c0"/><rect x="1034" y="401" width="9" height="9" fill="#a800c0"/><rect x="1042" y="401" width="9" height="9" fill="#a100c0"/><rect x="170" y="409" width="9" height="9" fill="#7800b8"/><rect x="178" y="409" width="9" height="9" fill="#8100b9"/><rect x="186" y="409" width="9" height="9" fill="#8700b9"/><rect x="194" y="409" width="9" height="9" fill="#9000b9"/><rect x="202" y="409" width="9" height="9" fill="#9f00bb"/><rect x="210" y="409" width="9" height="9" fill="#ae00be"/><rect x="218" y="409" width="9" height="9" fill="#ba00c0"/><rect x="226" y="409" width="9" height="9" fill="#c100bf"/><rect x="234" y="409" width="9" height="9" fill="#c300b8"/><rect x="242" y="409" width="9" height="9" fill="#c500b0"/><rect x="250" y="409" width="9" height="9" fill="#c600a8"/><rect x="258" y="409" width="9" height="9" fill="#c700a0"/><rect x="266" y="409" width="9" height="9" fill="#c80098"/><rect x="274" y="409" width="9" height="9" fill="#c90091"/><rect x="282" y="409" width="9" height="9" fill="#ca0089"/><rect x="290" y="409" width="9" height="9" fill="#cb0082"/><rect x="298" y="409" width="9" height="9" fill="#cc007b"/><rect x="306" y="409" width="9" height="9" fill="#cc0074"/><rect x="314" y="409" width="9" height="9" fill="#cd006d"/><rect x="322" y="409" width="9" height="9" fill="#ce0066"/><rect x="330" y="409" width="9" height="9" fill="#ce005c"/><rect x="338" y="409" width="9" height="9" fill="#cf0052"/><rect x="346" y="409" width="9" height="9" fill="#cf0048"/><rect x="354" y="409" width="9" height="9" fill="#d0003f"/><rect x="362" y="409" width="9" height="9" fill="#d00036"/><rect x="370" y="409" width="9" height="9" fill="#d1002d"/><rect x="378" y="409" width="9" height="9" fill="#d10025"/><rect x="386" y="409" width="9" height="9" fill="#d2001e"/><rect x="394" y="409" width="9" height="9" fill="#d20017"/><rect x="402" y="409" width="9" height="9" fill="#d30011"/><rect x="410" y="409" width="9" height="9" fill="#d3000f"/><rect x="418" y="409" width="9" height="9" fill="#d3000d"/><rect x="426" y="409" width="9" height="9" fill="#d4000b"/><rect x="434" y="409" width="9" height="9" fill="#d4000a"/><rect x="442" y="409" width="9" height="9" fill="#d40008"/><rect x="450" y="409" width="9" height="9" fill="#d50006"/><rect x="458" y="409" width="9" height="9" fill="#d50005"/><rect x="466" y="409" width="9" height="9" fill="#d50003"/><rect x="474" y="409" width="9" height="9" fill="#d50002"/><rect x="482" y="409" width="9" height="9" fill="#d60001"/><rect x="490" y="409" width="9" height="9" fill="#d60000"/><rect x="498" y="409" width="9" height="9" fill="#d60000"/><rect x="506" y="409" width="9" height="9" fill="#d60000"/><rect x="514" y="409" width="9" height="9" fill="#d60000"/><rect x="522" y="409" width="9" height="9" fill="#d70000"/><rect x="530" y="409" width="9" height="9" fill="#d70000"/><rect x="538" y="409" width="9" height="9" fill="#d70000"/><rect x="546" y="409" width="9" height="9" fill="#d70000"/><rect x="554" y="409" width="9" height="9" fill="#d70000"/><rect x="562" y="409" width="9" height="9" fill="#d70000"/><rect x="570" y="409" width="9" height="9" fill="#d70000"/><rect x="578" y="409" width="9" height="9" fill="#d80000"/><rect x="586" y="409" width="9" height="9" fill="#d80000"/><rect x="594" y="409" width="9" height="9" fill="#d80000"/><rect x="602" y="409" width="9" height="9" fill="#d80000"/><rect x="610" y="409" width="9" height="9" fill="#d80000"/><rect x="618" y="409" width="9" height="9" fill="#d80000"/><rect x="626" y="409" width="9" height="9" fill="#d80000"/><rect x="634" y="409" width="9" height="9" fill="#d80000"/><rect x="642" y="409" width="9" height="9" fill="#d80000"/><rect x="650" y="409" width="9" height="9" fill="#d80000"/><rect x="658" y="409" width="9" height="9" fill="#d80000"/><rect x="666" y="409" width="9" height="9" fill="#d80000"/><rect x="674" y="409" width="9" height="9" fill="#d80000"/><rect x="682" y="409" width="9" height="9" fill="#d80000"/><rect x="690" y="409" width="9" height="9" fill="#d80000"/><rect x="698" y="409" width="9" height="9" fill="#d80000"/><rect x="706" y="409" width="9" height="9" fill="#d80000"/><rect x="714" y="409" width="9" height="9" fill="#d80000"/><rect x="722" y="409" width="9" height="9" fill="#d80000"/><rect x="730" y="409" width="9" height="9" fill="#d80000"/><rect x="738" y="409" width="9" height="9" fill="#d80000"/><rect x="746" y="409" width="9" height="9" fill="#d70000"/><rect x="754" y="409" width="9" height="9" fill="#d70000"/><rect x="762" y="409" width="9" height="9" fill="#d70001"/><rect x="770" y="409" width="9" height="9" fill="#d70002"/><rect x="778" y="409" width="9" height="9" fill="#d70004"/><rect x="786" y="409" width="9" height="9" fill="#d70005"/><rect x="794" y="409" width="9" height="9" fill="#d60007"/><rect x="802" y="409" width="9" height="9" fill="#d60008"/><rect x="810" y="409" width="9" height="9" fill="#d6000a"/><rect x="818" y="409" width="9" height="9" fill="#d6000c"/><rect x="826" y="409" width="9" height="9" fill="#d5000e"/><rect x="834" y="409" width="9" height="9" fill="#d50010"/><rect x="842" y="409" width="9" height="9" fill="#d50012"/><rect x="850" y="409" width="9" height="9" fill="#d40017"/><rect x="858" y="409" width="9" height="9" fill="#d4001f"/><rect x="866" y="409" width="9" height="9" fill="#d40026"/><rect x="874" y="409" width="9" height="9" fill="#d3002e"/><rect x="882" y="409" width="9" height="9" fill="#d30037"/><rect x="890" y="409" width="9" height="9" fill="#d20040"/><rect x="898" y="409" width="9" height="9" fill="#d2004a"/><rect x="906" y="409" width="9" height="9" fill="#d10055"/><rect x="914" y="409" width="9" height="9" fill="#d00060"/><rect x="922" y="409" width="9" height="9" fill="#d0006a"/><rect x="930" y="409" width="9" height="9" fill="#cf0071"/><rect x="938" y="409" width="9" height="9" fill="#ce0078"/><rect x="946" y="409" width="9" height="9" fill="#cd0080"/><rect x="954" y="409" width="9" height="9" fill="#cc0088"/><rect x="962" y="409" width="9" height="9" fill="#cb0090"/><rect x="970" y="409" width="9" height="9" fill="#c90099"/><rect x="978" y="409" width="9" height="9" fill="#c800a3"/><rect x="986" y="409" width="9" height="9" fill="#c500ad"/><rect x="994" y="409" width="9" height="9" fill="#c200b9"/><rect x="1002" y="409" width="9" height="9" fill="#bd00bf"/><rect x="1010" y="409" width="9" height="9" fill="#b500bf"/><rect x="1018" y="409" width="9" height="9" fill="#b100bf"/><rect x="1026" y="409" width="9" height="9" fill="#ae00bf"/><rect x="186" y="417" width="9" height="9" fill="#8a00b8"/><rect x="194" y="417" width="9" height="9" fill="#9100b9"/><rect x="202" y="417" width="9" height="9" fill="#9500b8"/><rect x="210" y="417" width="9" height="9" fill="#9d00b9"/><rect x="218" y="417" width="9" height="9" fill="#a900bb"/><rect x="226" y="417" width="9" height="9" fill="#b700bd"/><rect x="234" y="417" width="9" height="9" fill="#bf00bb"/><rect x="242" y="417" width="9" height="9" fill="#c100b4"/><rect x="250" y="417" width="9" height="9" fill="#c200ab"/><rect x="258" y="417" width="9" height="9" fill="#c400a3"/><rect x="266" y="417" width="9" height="9" fill="#c5009b"/><rect x="274" y="417" width="9" height="9" fill="#c60093"/><rect x="282" y="417" width="9" height="9" fill="#c7008b"/><rect x="290" y="417" width="9" height="9" fill="#c80084"/><rect x="298" y="417" width="9" height="9" fill="#c9007d"/><rect x="306" y="417" width="9" height="9" fill="#c90076"/><rect x="314" y="417" width="9" height="9" fill="#ca006f"/><rect x="322" y="417" width="9" height="9" fill="#cb0068"/><rect x="330" y="417" width="9" height="9" fill="#cc005f"/><rect x="338" y="417" width="9" height="9" fill="#cc0055"/><rect x="346" y="417" width="9" height="9" fill="#cd004b"/><rect x="354" y="417" width="9" height="9" fill="#cd0041"/><rect x="362" y="417" width="9" height="9" fill="#ce0038"/><rect x="370" y="417" width="9" height="9" fill="#ce002f"/><rect x="378" y="417" width="9" height="9" fill="#cf0027"/><rect x="386" y="417" width="9" height="9" fill="#cf001f"/><rect x="394" y="417" width="9" height="9" fill="#d00018"/><rect x="402" y="417" width="9" height="9" fill="#d00012"/><rect x="410" y="417" width="9" height="9" fill="#d10010"/><rect x="418" y="417" width="9" height="9" fill="#d1000e"/><rect x="426" y="417" width="9" height="9" fill="#d1000c"/><rect x="434" y="417" width="9" height="9" fill="#d2000a"/><rect x="442" y="417" width="9" height="9" fill="#d20008"/><rect x="450" y="417" width="9" height="9" fill="#d20006"/><rect x="458" y="417" width="9" height="9" fill="#d30005"/><rect x="466" y="417" width="9" height="9" fill="#d30003"/><rect x="474" y="417" width="9" height="9" fill="#d30002"/><rect x="482" y="417" width="9" height="9" fill="#d30001"/><rect x="490" y="417" width="9" height="9" fill="#d40000"/><rect x="498" y="417" width="9" height="9" fill="#d40000"/><rect x="506" y="417" width="9" height="9" fill="#d40000"/><rect x="514" y="417" width="9" height="9" fill="#d40000"/><rect x="522" y="417" width="9" height="9" fill="#d40000"/><rect x="530" y="417" width="9" height="9" fill="#d50000"/><rect x="538" y="417" width="9" height="9" fill="#d50000"/><rect x="546" y="417" width="9" height="9" fill="#d50000"/><rect x="554" y="417" width="9" height="9" fill="#d50000"/><rect x="562" y="417" width="9" height="9" fill="#d50000"/><rect x="570" y="417" width="9" height="9" fill="#d50000"/><rect x="578" y="417" width="9" height="9" fill="#d50000"/><rect x="586" y="417" width="9" height="9" fill="#d60000"/><rect x="594" y="417" width="9" height="9" fill="#d60000"/><rect x="602" y="417" width="9" height="9" fill="#d60000"/><rect x="610" y="417" width="9" height="9" fill="#d60000"/><rect x="618" y="417" width="9" height="9" fill="#d60000"/><rect x="626" y="417" width="9" height="9" fill="#d60000"/><rect x="634" y="417" width="9" height="9" fill="#d60000"/><rect x="642" y="417" width="9" height="9" fill="#d60000"/><rect x="650" y="417" width="9" height="9" fill="#d60000"/><rect x="658" y="417" width="9" height="9" fill="#d60000"/><rect x="666" y="417" width="9" height="9" fill="#d60000"/><rect x="674" y="417" width="9" height="9" fill="#d60000"/><rect x="682" y="417" width="9" height="9" fill="#d60000"/><rect x="690" y="417" width="9" height="9" fill="#d60000"/><rect x="698" y="417" width="9" height="9" fill="#d60000"/><rect x="706" y="417" width="9" height="9" fill="#d60000"/><rect x="714" y="417" width="9" height="9" fill="#d60000"/><rect x="722" y="417" width="9" height="9" fill="#d60000"/><rect x="730" y="417" width="9" height="9" fill="#d50000"/><rect x="738" y="417" width="9" height="9" fill="#d50000"/><rect x="746" y="417" width="9" height="9" fill="#d50000"/><rect x="754" y="417" width="9" height="9" fill="#d50000"/><rect x="762" y="417" width="9" height="9" fill="#d50001"/><rect x="770" y="417" width="9" height="9" fill="#d50003"/><rect x="778" y="417" width="9" height="9" fill="#d40004"/><rect x="786" y="417" width="9" height="9" fill="#d40006"/><rect x="794" y="417" width="9" height="9" fill="#d40007"/><rect x="802" y="417" width="9" height="9" fill="#d40009"/><rect x="810" y="417" width="9" height="9" fill="#d3000b"/><rect x="818" y="417" width="9" height="9" fill="#d3000c"/><rect x="826" y="417" width="9" height="9" fill="#d3000e"/><rect x="834" y="417" width="9" height="9" fill="#d20010"/><rect x="842" y="417" width="9" height="9" fill="#d20014"/><rect x="850" y="417" width="9" height="9" fill="#d2001b"/><rect x="858" y="417" width="9" height="9" fill="#d10022"/><rect x="866" y="417" width="9" height="9" fill="#d1002a"/><rect x="874" y="417" width="9" height="9" fill="#d00033"/><rect x="882" y="417" width="9" height="9" fill="#d0003c"/><rect x="890" y="417" width="9" height="9" fill="#cf0045"/><rect x="898" y="417" width="9" height="9" fill="#cf0050"/><rect x="906" y="417" width="9" height="9" fill="#ce005b"/><rect x="914" y="417" width="9" height="9" fill="#cd0066"/><rect x="922" y="417" width="9" height="9" fill="#cc006d"/><rect x="930" y="417" width="9" height="9" fill="#cb0075"/><rect x="938" y="417" width="9" height="9" fill="#ca007d"/><rect x="946" y="417" width="9" height="9" fill="#c90085"/><rect x="954" y="417" width="9" height="9" fill="#c7008e"/><rect x="962" y="417" width="9" height="9" fill="#c60097"/><rect x="970" y="417" width="9" height="9" fill="#c300a2"/><rect x="978" y="417" width="9" height="9" fill="#c000ae"/><rect x="986" y="417" width="9" height="9" fill="#be00b7"/><rect x="994" y="417" width="9" height="9" fill="#be00bc"/><rect x="1002" y="417" width="9" height="9" fill="#bd00bf"/><rect x="1010" y="417" width="9" height="9" fill="#b600be"/><rect x="1018" y="417" width="9" height="9" fill="#b300bf"/><rect x="202" y="425" width="9" height="9" fill="#9600b8"/><rect x="210" y="425" width="9" height="9" fill="#9d00b8"/><rect x="218" y="425" width="9" height="9" fill="#a100b8"/><rect x="226" y="425" width="9" height="9" fill="#a600b8"/><rect x="234" y="425" width="9" height="9" fill="#b000b9"/><rect x="242" y="425" width="9" height="9" fill="#ba00b9"/><rect x="250" y="425" width="9" height="9" fill="#be00b1"/><rect x="258" y="425" width="9" height="9" fill="#bf00a8"/><rect x="266" y="425" width="9" height="9" fill="#c100a0"/><rect x="274" y="425" width="9" height="9" fill="#c20097"/><rect x="282" y="425" width="9" height="9" fill="#c3008f"/><rect x="290" y="425" width="9" height="9" fill="#c40087"/><rect x="298" y="425" width="9" height="9" fill="#c50080"/><rect x="306" y="425" width="9" height="9" fill="#c60079"/><rect x="314" y="425" width="9" height="9" fill="#c70072"/><rect x="322" y="425" width="9" height="9" fill="#c8006b"/><rect x="330" y="425" width="9" height="9" fill="#c90064"/><rect x="338" y="425" width="9" height="9" fill="#c90059"/><rect x="346" y="425" width="9" height="9" fill="#ca004f"/><rect x="354" y="425" width="9" height="9" fill="#cb0045"/><rect x="362" y="425" width="9" height="9" fill="#cb003c"/><rect x="370" y="425" width="9" height="9" fill="#cc0033"/><rect x="378" y="425" width="9" height="9" fill="#cc002a"/><rect x="386" y="425" width="9" height="9" fill="#cd0022"/><rect x="394" y="425" width="9" height="9" fill="#cd001b"/><rect x="402" y="425" width="9" height="9" fill="#ce0014"/><rect x="410" y="425" width="9" height="9" fill="#ce0010"/><rect x="418" y="425" width="9" height="9" fill="#ce000e"/><rect x="426" y="425" width="9" height="9" fill="#cf000c"/><rect x="434" y="425" width="9" height="9" fill="#cf000a"/><rect x="442" y="425" width="9" height="9" fill="#d00009"/><rect x="450" y="425" width="9" height="9" fill="#d00007"/><rect x="458" y="425" width="9" height="9" fill="#d00006"/><rect x="466" y="425" width="9" height="9" fill="#d10004"/><rect x="474" y="425" width="9" height="9" fill="#d10003"/><rect x="482" y="425" width="9" height="9" fill="#d10001"/><rect x="490" y="425" width="9" height="9" fill="#d10000"/><rect x="498" y="425" width="9" height="9" fill="#d20000"/><rect x="506" y="425" width="9" height="9" fill="#d20000"/><rect x="514" y="425" width="9" height="9" fill="#d20000"/><rect x="522" y="425" width="9" height="9" fill="#d20000"/><rect x="530" y="425" width="9" height="9" fill="#d20000"/><rect x="538" y="425" width="9" height="9" fill="#d30000"/><rect x="546" y="425" width="9" height="9" fill="#d30000"/><rect x="554" y="425" width="9" height="9" fill="#d30000"/><rect x="562" y="425" width="9" height="9" fill="#d30000"/><rect x="570" y="425" width="9" height="9" fill="#d30000"/><rect x="578" y="425" width="9" height="9" fill="#d30000"/><rect x="586" y="425" width="9" height="9" fill="#d30000"/><rect x="594" y="425" width="9" height="9" fill="#d30000"/><rect x="602" y="425" width="9" height="9" fill="#d30000"/><rect x="610" y="425" width="9" height="9" fill="#d40000"/><rect x="618" y="425" width="9" height="9" fill="#d40000"/><rect x="626" y="425" width="9" height="9" fill="#d40000"/><rect x="634" y="425" width="9" height="9" fill="#d40000"/><rect x="642" y="425" width="9" height="9" fill="#d40000"/><rect x="650" y="425" width="9" height="9" fill="#d40000"/><rect x="658" y="425" width="9" height="9" fill="#d40000"/><rect x="666" y="425" width="9" height="9" fill="#d40000"/><rect x="674" y="425" width="9" height="9" fill="#d40000"/><rect x="682" y="425" width="9" height="9" fill="#d40000"/><rect x="690" y="425" width="9" height="9" fill="#d30000"/><rect x="698" y="425" width="9" height="9" fill="#d30000"/><rect x="706" y="425" width="9" height="9" fill="#d30000"/><rect x="714" y="425" width="9" height="9" fill="#d30000"/><rect x="722" y="425" width="9" height="9" fill="#d30000"/><rect x="730" y="425" width="9" height="9" fill="#d30000"/><rect x="738" y="425" width="9" height="9" fill="#d30000"/><rect x="746" y="425" width="9" height="9" fill="#d30000"/><rect x="754" y="425" width="9" height="9" fill="#d30001"/><rect x="762" y="425" width="9" height="9" fill="#d20002"/><rect x="770" y="425" width="9" height="9" fill="#d20004"/><rect x="778" y="425" width="9" height="9" fill="#d20005"/><rect x="786" y="425" width="9" height="9" fill="#d20007"/><rect x="794" y="425" width="9" height="9" fill="#d10008"/><rect x="802" y="425" width="9" height="9" fill="#d1000a"/><rect x="810" y="425" width="9" height="9" fill="#d1000c"/><rect x="818" y="425" width="9" height="9" fill="#d0000e"/><rect x="826" y="425" width="9" height="9" fill="#d00010"/><rect x="834" y="425" width="9" height="9" fill="#d00012"/><rect x="842" y="425" width="9" height="9" fill="#cf0018"/><rect x="850" y="425" width="9" height="9" fill="#cf0020"/><rect x="858" y="425" width="9" height="9" fill="#ce0027"/><rect x="866" y="425" width="9" height="9" fill="#ce0030"/><rect x="874" y="425" width="9" height="9" fill="#cd0039"/><rect x="882" y="425" width="9" height="9" fill="#cc0043"/><rect x="890" y="425" width="9" height="9" fill="#cc004d"/><rect x="898" y="425" width="9" height="9" fill="#cb0058"/><rect x="906" y="425" width="9" height="9" fill="#ca0063"/><rect x="914" y="425" width="9" height="9" fill="#c9006b"/><rect x="922" y="425" width="9" height="9" fill="#c80073"/><rect x="930" y="425" width="9" height="9" fill="#c7007b"/><rect x="938" y="425" width="9" height="9" fill="#c50084"/><rect x="946" y="425" width="9" height="9" fill="#c3008e"/><rect x="954" y="425" width="9" height="9" fill="#c0009a"/><rect x="962" y="425" width="9" height="9" fill="#be00a4"/><rect x="970" y="425" width="9" height="9" fill="#bd00ac"/><rect x="978" y="425" width="9" height="9" fill="#be00b0"/><rect x="986" y="425" width="9" height="9" fill="#be00b6"/><rect x="994" y="425" width="9" height="9" fill="#be00bb"/><rect x="218" y="433" width="9" height="9" fill="#a200b8"/><rect x="226" y="433" width="9" height="9" fill="#a600b8"/><rect x="234" y="433" width="9" height="9" fill="#aa00b8"/><rect x="242" y="433" width="9" height="9" fill="#af00b7"/><rect x="250" y="433" width="9" height="9" fill="#b600b8"/><rect x="258" y="433" width="9" height="9" fill="#ba00b2"/><rect x="266" y="433" width="9" height="9" fill="#bc00a9"/><rect x="274" y="433" width="9" height="9" fill="#bd009f"/><rect x="282" y="433" width="9" height="9" fill="#bf0096"/><rect x="290" y="433" width="9" height="9" fill="#c0008d"/><rect x="298" y="433" width="9" height="9" fill="#c20085"/><rect x="306" y="433" width="9" height="9" fill="#c3007d"/><rect x="314" y="433" width="9" height="9" fill="#c40076"/><rect x="322" y="433" width="9" height="9" fill="#c4006f"/><rect x="330" y="433" width="9" height="9" fill="#c50068"/><rect x="338" y="433" width="9" height="9" fill="#c60060"/><rect x="346" y="433" width="9" height="9" fill="#c70056"/><rect x="354" y="433" width="9" height="9" fill="#c7004b"/><rect x="362" y="433" width="9" height="9" fill="#c80041"/><rect x="370" y="433" width="9" height="9" fill="#c90038"/><rect x="378" y="433" width="9" height="9" fill="#c90030"/><rect x="386" y="433" width="9" height="9" fill="#ca0027"/><rect x="394" y="433" width="9" height="9" fill="#ca0020"/><rect x="402" y="433" width="9" height="9" fill="#cb0019"/><rect x="410" y="433" width="9" height="9" fill="#cb0012"/><rect x="418" y="433" width="9" height="9" fill="#cc0010"/><rect x="426" y="433" width="9" height="9" fill="#cc000e"/><rect x="434" y="433" width="9" height="9" fill="#cd000c"/><rect x="442" y="433" width="9" height="9" fill="#cd000a"/><rect x="450" y="433" width="9" height="9" fill="#cd0008"/><rect x="458" y="433" width="9" height="9" fill="#ce0007"/><rect x="466" y="433" width="9" height="9" fill="#ce0005"/><rect x="474" y="433" width="9" height="9" fill="#ce0004"/><rect x="482" y="433" width="9" height="9" fill="#ce0002"/><rect x="490" y="433" width="9" height="9" fill="#cf0001"/><rect x="498" y="433" width="9" height="9" fill="#cf0000"/><rect x="506" y="433" width="9" height="9" fill="#cf0000"/><rect x="514" y="433" width="9" height="9" fill="#cf0000"/><rect x="522" y="433" width="9" height="9" fill="#d00000"/><rect x="530" y="433" width="9" height="9" fill="#d00000"/><rect x="538" y="433" width="9" height="9" fill="#d00000"/><rect x="546" y="433" width="9" height="9" fill="#d00000"/><rect x="554" y="433" width="9" height="9" fill="#d00000"/><rect x="562" y="433" width="9" height="9" fill="#d00000"/><rect x="570" y="433" width="9" height="9" fill="#d10000"/><rect x="578" y="433" width="9" height="9" fill="#d10000"/><rect x="586" y="433" width="9" height="9" fill="#d10000"/><rect x="594" y="433" width="9" height="9" fill="#d10000"/><rect x="602" y="433" width="9" height="9" fill="#d10000"/><rect x="610" y="433" width="9" height="9" fill="#d10000"/><rect x="618" y="433" width="9" height="9" fill="#d10000"/><rect x="626" y="433" width="9" height="9" fill="#d10000"/><rect x="634" y="433" width="9" height="9" fill="#d10000"/><rect x="642" y="433" width="9" height="9" fill="#d10000"/><rect x="650" y="433" width="9" height="9" fill="#d10000"/><rect x="658" y="433" width="9" height="9" fill="#d10000"/><rect x="666" y="433" width="9" height="9" fill="#d10000"/><rect x="674" y="433" width="9" height="9" fill="#d10000"/><rect x="682" y="433" width="9" height="9" fill="#d10000"/><rect x="690" y="433" width="9" height="9" fill="#d10000"/><rect x="698" y="433" width="9" height="9" fill="#d10000"/><rect x="706" y="433" width="9" height="9" fill="#d10000"/><rect x="714" y="433" width="9" height="9" fill="#d10000"/><rect x="722" y="433" width="9" height="9" fill="#d10000"/><rect x="730" y="433" width="9" height="9" fill="#d00000"/><rect x="738" y="433" width="9" height="9" fill="#d00000"/><rect x="746" y="433" width="9" height="9" fill="#d00001"/><rect x="754" y="433" width="9" height="9" fill="#d00002"/><rect x="762" y="433" width="9" height="9" fill="#d00004"/><rect x="770" y="433" width="9" height="9" fill="#cf0005"/><rect x="778" y="433" width="9" height="9" fill="#cf0006"/><rect x="786" y="433" width="9" height="9" fill="#cf0008"/><rect x="794" y="433" width="9" height="9" fill="#ce000a"/><rect x="802" y="433" width="9" height="9" fill="#ce000b"/><rect x="810" y="433" width="9" height="9" fill="#ce000d"/><rect x="818" y="433" width="9" height="9" fill="#cd000f"/><rect x="826" y="433" width="9" height="9" fill="#cd0012"/><rect x="834" y="433" width="9" height="9" fill="#cc0018"/><rect x="842" y="433" width="9" height="9" fill="#cc001f"/><rect x="850" y="433" width="9" height="9" fill="#cb0027"/><rect x="858" y="433" width="9" height="9" fill="#cb002f"/><rect x="866" y="433" width="9" height="9" fill="#ca0038"/><rect x="874" y="433" width="9" height="9" fill="#c90042"/><rect x="882" y="433" width="9" height="9" fill="#c8004d"/><rect x="890" y="433" width="9" height="9" fill="#c80058"/><rect x="898" y="433" width="9" height="9" fill="#c60063"/><rect x="906" y="433" width="9" height="9" fill="#c5006c"/><rect x="914" y="433" width="9" height="9" fill="#c40074"/><rect x="922" y="433" width="9" height="9" fill="#c2007e"/><rect x="930" y="433" width="9" height="9" fill="#c00088"/><rect x="938" y="433" width="9" height="9" fill="#be0092"/><rect x="946" y="433" width="9" height="9" fill="#bc009b"/><rect x="954" y="433" width="9" height="9" fill="#bc00a0"/><rect x="962" y="433" width="9" height="9" fill="#bd00a4"/><rect x="970" y="433" width="9" height="9" fill="#bd00ab"/><rect x="978" y="433" width="9" height="9" fill="#bd00af"/><rect x="234" y="441" width="9" height="9" fill="#ac00b7"/><rect x="242" y="441" width="9" height="9" fill="#b000b7"/><rect x="250" y="441" width="9" height="9" fill="#b600b8"/><rect x="258" y="441" width="9" height="9" fill="#b800b5"/><rect x="266" y="441" width="9" height="9" fill="#b800b1"/><rect x="274" y="441" width="9" height="9" fill="#b800aa"/><rect x="282" y="441" width="9" height="9" fill="#b900a2"/><rect x="290" y="441" width="9" height="9" fill="#bb0098"/><rect x="298" y="441" width="9" height="9" fill="#bc008f"/><rect x="306" y="441" width="9" height="9" fill="#be0085"/><rect x="314" y="441" width="9" height="9" fill="#bf007d"/><rect x="322" y="441" width="9" height="9" fill="#c00075"/><rect x="330" y="441" width="9" height="9" fill="#c1006e"/><rect x="338" y="441" width="9" height="9" fill="#c20067"/><rect x="346" y="441" width="9" height="9" fill="#c3005f"/><rect x="354" y="441" width="9" height="9" fill="#c40054"/><rect x="362" y="441" width="9" height="9" fill="#c5004a"/><rect x="370" y="441" width="9" height="9" fill="#c50040"/><rect x="378" y="441" width="9" height="9" fill="#c60037"/><rect x="386" y="441" width="9" height="9" fill="#c7002e"/><rect x="394" y="441" width="9" height="9" fill="#c70026"/><rect x="402" y="441" width="9" height="9" fill="#c8001f"/><rect x="410" y="441" width="9" height="9" fill="#c80018"/><rect x="418" y="441" width="9" height="9" fill="#c90012"/><rect x="426" y="441" width="9" height="9" fill="#c9000f"/><rect x="434" y="441" width="9" height="9" fill="#ca000d"/><rect x="442" y="441" width="9" height="9" fill="#ca000b"/><rect x="450" y="441" width="9" height="9" fill="#ca000a"/><rect x="458" y="441" width="9" height="9" fill="#cb0008"/><rect x="466" y="441" width="9" height="9" fill="#cb0007"/><rect x="474" y="441" width="9" height="9" fill="#cb0005"/><rect x="482" y="441" width="9" height="9" fill="#cc0004"/><rect x="490" y="441" width="9" height="9" fill="#cc0003"/><rect x="498" y="441" width="9" height="9" fill="#cc0001"/><rect x="506" y="441" width="9" height="9" fill="#cc0000"/><rect x="514" y="441" width="9" height="9" fill="#cd0000"/><rect x="522" y="441" width="9" height="9" fill="#cd0000"/><rect x="530" y="441" width="9" height="9" fill="#cd0000"/><rect x="538" y="441" width="9" height="9" fill="#cd0000"/><rect x="546" y="441" width="9" height="9" fill="#cd0000"/><rect x="554" y="441" width="9" height="9" fill="#ce0000"/><rect x="562" y="441" width="9" height="9" fill="#ce0000"/><rect x="570" y="441" width="9" height="9" fill="#ce0000"/><rect x="578" y="441" width="9" height="9" fill="#ce0000"/><rect x="586" y="441" width="9" height="9" fill="#ce0000"/><rect x="594" y="441" width="9" height="9" fill="#ce0000"/><rect x="602" y="441" width="9" height="9" fill="#ce0000"/><rect x="610" y="441" width="9" height="9" fill="#ce0000"/><rect x="618" y="441" width="9" height="9" fill="#ce0000"/><rect x="626" y="441" width="9" height="9" fill="#ce0000"/><rect x="634" y="441" width="9" height="9" fill="#ce0000"/><rect x="642" y="441" width="9" height="9" fill="#ce0000"/><rect x="650" y="441" width="9" height="9" fill="#ce0000"/><rect x="658" y="441" width="9" height="9" fill="#ce0000"/><rect x="666" y="441" width="9" height="9" fill="#ce0000"/><rect x="674" y="441" width="9" height="9" fill="#ce0000"/><rect x="682" y="441" width="9" height="9" fill="#ce0000"/><rect x="690" y="441" width="9" height="9" fill="#ce0000"/><rect x="698" y="441" width="9" height="9" fill="#ce0000"/><rect x="706" y="441" width="9" height="9" fill="#ce0000"/><rect x="714" y="441" width="9" height="9" fill="#ce0000"/><rect x="722" y="441" width="9" height="9" fill="#ce0000"/><rect x="730" y="441" width="9" height="9" fill="#cd0001"/><rect x="738" y="441" width="9" height="9" fill="#cd0002"/><rect x="746" y="441" width="9" height="9" fill="#cd0003"/><rect x="754" y="441" width="9" height="9" fill="#cd0004"/><rect x="762" y="441" width="9" height="9" fill="#cc0005"/><rect x="770" y="441" width="9" height="9" fill="#cc0007"/><rect x="778" y="441" width="9" height="9" fill="#cc0008"/><rect x="786" y="441" width="9" height="9" fill="#cc000a"/><rect x="794" y="441" width="9" height="9" fill="#cb000c"/><rect x="802" y="441" width="9" height="9" fill="#cb000e"/><rect x="810" y="441" width="9" height="9" fill="#ca0010"/><rect x="818" y="441" width="9" height="9" fill="#ca0013"/><rect x="826" y="441" width="9" height="9" fill="#c90019"/><rect x="834" y="441" width="9" height="9" fill="#c90021"/><rect x="842" y="441" width="9" height="9" fill="#c80029"/><rect x="850" y="441" width="9" height="9" fill="#c70032"/><rect x="858" y="441" width="9" height="9" fill="#c6003b"/><rect x="866" y="441" width="9" height="9" fill="#c60046"/><rect x="874" y="441" width="9" height="9" fill="#c40051"/><rect x="882" y="441" width="9" height="9" fill="#c3005d"/><rect x="890" y="441" width="9" height="9" fill="#c20067"/><rect x="898" y="441" width="9" height="9" fill="#c00071"/><rect x="906" y="441" width="9" height="9" fill="#be007a"/><rect x="914" y="441" width="9" height="9" fill="#bd0082"/><rect x="922" y="441" width="9" height="9" fill="#bc0089"/><rect x="930" y="441" width="9" height="9" fill="#bc008f"/><rect x="938" y="441" width="9" height="9" fill="#bd0093"/><rect x="946" y="441" width="9" height="9" fill="#bc009a"/><rect x="954" y="441" width="9" height="9" fill="#bc009f"/><rect x="258" y="449" width="9" height="9" fill="#b800b4"/><rect x="266" y="449" width="9" height="9" fill="#b800b0"/><rect x="274" y="449" width="9" height="9" fill="#b800aa"/><rect x="282" y="449" width="9" height="9" fill="#b800a5"/><rect x="290" y="449" width="9" height="9" fill="#b8009f"/><rect x="298" y="449" width="9" height="9" fill="#b8009a"/><rect x="306" y="449" width="9" height="9" fill="#b90093"/><rect x="314" y="449" width="9" height="9" fill="#ba008a"/><rect x="322" y="449" width="9" height="9" fill="#bb0081"/><rect x="330" y="449" width="9" height="9" fill="#bd0077"/><rect x="338" y="449" width="9" height="9" fill="#be006f"/><rect x="346" y="449" width="9" height="9" fill="#bf0068"/><rect x="354" y="449" width="9" height="9" fill="#c00060"/><rect x="362" y="449" width="9" height="9" fill="#c10056"/><rect x="370" y="449" width="9" height="9" fill="#c2004b"/><rect x="378" y="449" width="9" height="9" fill="#c20041"/><rect x="386" y="449" width="9" height="9" fill="#c30038"/><rect x="394" y="449" width="9" height="9" fill="#c4002f"/><rect x="402" y="449" width="9" height="9" fill="#c40027"/><rect x="410" y="449" width="9" height="9" fill="#c50020"/><rect x="418" y="449" width="9" height="9" fill="#c60019"/><rect x="426" y="449" width="9" height="9" fill="#c60013"/><rect x="434" y="449" width="9" height="9" fill="#c6000f"/><rect x="442" y="449" width="9" height="9" fill="#c7000d"/><rect x="450" y="449" width="9" height="9" fill="#c7000c"/><rect x="458" y="449" width="9" height="9" fill="#c8000a"/><rect x="466" y="449" width="9" height="9" fill="#c80008"/><rect x="474" y="449" width="9" height="9" fill="#c80007"/><rect x="482" y="449" width="9" height="9" fill="#c90006"/><rect x="490" y="449" width="9" height="9" fill="#c90004"/><rect x="498" y="449" width="9" height="9" fill="#c90003"/><rect x="506" y="449" width="9" height="9" fill="#ca0002"/><rect x="514" y="449" width="9" height="9" fill="#ca0001"/><rect x="522" y="449" width="9" height="9" fill="#ca0000"/><rect x="530" y="449" width="9" height="9" fill="#ca0000"/><rect x="538" y="449" width="9" height="9" fill="#cb0000"/><rect x="546" y="449" width="9" height="9" fill="#cb0000"/><rect x="554" y="449" width="9" height="9" fill="#cb0000"/><rect x="562" y="449" width="9" height="9" fill="#cb0000"/><rect x="570" y="449" width="9" height="9" fill="#cb0000"/><rect x="578" y="449" width="9" height="9" fill="#cb0000"/><rect x="586" y="449" width="9" height="9" fill="#cb0000"/><rect x="594" y="449" width="9" height="9" fill="#cb0000"/><rect x="602" y="449" width="9" height="9" fill="#cc0000"/><rect x="610" y="449" width="9" height="9" fill="#cc0000"/><rect x="618" y="449" width="9" height="9" fill="#cc0000"/><rect x="626" y="449" width="9" height="9" fill="#cc0000"/><rect x="634" y="449" width="9" height="9" fill="#cc0000"/><rect x="642" y="449" width="9" height="9" fill="#cc0000"/><rect x="650" y="449" width="9" height="9" fill="#cc0000"/><rect x="658" y="449" width="9" height="9" fill="#cc0000"/><rect x="666" y="449" width="9" height="9" fill="#cc0000"/><rect x="674" y="449" width="9" height="9" fill="#cb0000"/><rect x="682" y="449" width="9" height="9" fill="#cb0000"/><rect x="690" y="449" width="9" height="9" fill="#cb0000"/><rect x="698" y="449" width="9" height="9" fill="#cb0000"/><rect x="706" y="449" width="9" height="9" fill="#cb0000"/><rect x="714" y="449" width="9" height="9" fill="#cb0001"/><rect x="722" y="449" width="9" height="9" fill="#cb0002"/><rect x="730" y="449" width="9" height="9" fill="#ca0003"/><rect x="738" y="449" width="9" height="9" fill="#ca0004"/><rect x="746" y="449" width="9" height="9" fill="#ca0005"/><rect x="754" y="449" width="9" height="9" fill="#ca0006"/><rect x="762" y="449" width="9" height="9" fill="#c90008"/><rect x="770" y="449" width="9" height="9" fill="#c90009"/><rect x="778" y="449" width="9" height="9" fill="#c8000b"/><rect x="786" y="449" width="9" height="9" fill="#c8000d"/><rect x="794" y="449" width="9" height="9" fill="#c8000e"/><rect x="802" y="449" width="9" height="9" fill="#c70011"/><rect x="810" y="449" width="9" height="9" fill="#c60016"/><rect x="818" y="449" width="9" height="9" fill="#c6001d"/><rect x="826" y="449" width="9" height="9" fill="#c50025"/><rect x="834" y="449" width="9" height="9" fill="#c4002e"/><rect x="842" y="449" width="9" height="9" fill="#c30037"/><rect x="850" y="449" width="9" height="9" fill="#c20042"/><rect x="858" y="449" width="9" height="9" fill="#c1004e"/><rect x="866" y="449" width="9" height="9" fill="#bf005b"/><rect x="874" y="449" width="9" height="9" fill="#be0065"/><rect x="882" y="449" width="9" height="9" fill="#bc006e"/><rect x="890" y="449" width="9" height="9" fill="#bc0074"/><rect x="898" y="449" width="9" height="9" fill="#bc0079"/><rect x="906" y="449" width="9" height="9" fill="#bb007f"/><rect x="914" y="449" width="9" height="9" fill="#bc0083"/><rect x="922" y="449" width="9" height="9" fill="#bb0089"/><rect x="930" y="449" width="9" height="9" fill="#bc008d"/></g></g></g><g font-family="Liberation Sans,sans-serif" font-weight="bold" font-size="121" fill="#fff" fill-opacity=".022" letter-spacing="1"><text x="-80" y="97">arnold</text><text x="535" y="97">arnold</text><text x="1145" y="97">arnold</text><text x="207" y="448">arnold</text><text x="805" y="448">arnold</text></g></svg>
<!-- wireframe remnants under region -->
<svg class="abs" style="left:330px;top:455px" width="600" height="7" viewBox="330 455 600 7"><path d="M345 455.5L400 458M360 456L432 460M425 461L432 456M440 456L560 457.5M470 458L600 460M640 456v5M646 456v5M660 457L760 456M700 459L860 456M760 460L900 456" stroke="#111" stroke-width="1" fill="none"/></svg>
<!-- handles -->
<div class="hd" style="left:76px;top:26px"></div>
<div class="hd" style="left:625px;top:26px"></div>
<div class="hd" style="left:1175px;top:26px"></div>
<div class="hd" style="left:76px;top:239px"></div>
<div class="hd" style="left:76px;top:454px"></div>
<div class="hd" style="left:625px;top:454px"></div>
<svg class="abs" style="left:78px;top:34px" width="6" height="10"><polygon points="0,0 5,0 5,9" fill="#e0a070"/></svg>
<svg class="abs" style="left:78px;top:445px" width="6" height="10"><polygon points="0.5,9 5,9 5,0.5" fill="#e0a070"/></svg>
<!-- property panel -->
<div id="pp"><div class="in"></div>
<!-- coords inside are relative to panel origin (1124,63) -->
<div class="abs" style="left:3px;top:3px;width:217px;height:15px;background:#61758e;border-radius:7px 0 0 0;box-shadow:0 1px 0 #4c5a6d"></div>
<div class="abs" style="left:274px;top:3px;width:5px;height:15px;background:#61758e"></div>
<div class="lbl ui" style="left:13px;top:3px;font:bold 11px/16px 'DejaVu Sans Condensed','DejaVu Sans',sans-serif;color:#fff;letter-spacing:.05px">Material : Gradient1 (General)</div>
<!-- title round icons -->
<div class="ico" style="left:221px;top:3px;width:17px;height:15px;border-radius:6px"></div>
<div class="ico" style="left:239px;top:3px;width:17px;height:15px;border-radius:6px;background:#c4c1bf"></div>
<div class="ico" style="left:257px;top:3px;width:17px;height:15px;border-radius:6px"></div>
<svg class="abs" style="left:221px;top:3px" width="54" height="15" viewBox="0 0 54 15">
<circle cx="8.4" cy="7.3" r="6.3" fill="#3c3a39"/><circle cx="6.1" cy="6" r="1.5" fill="#c9c6c4"/><circle cx="10.3" cy="6" r="1.5" fill="#c9c6c4"/>
<circle cx="26.5" cy="7.3" r="6.3" fill="#3c3a39"/><path d="M26.5 7.3 L22 3.5 A5 5 0 0 0 21.5 8.5Z M26.5 7.3 L31.5 5 A5 5 0 0 1 30 11.5Z M26.5 7.3 L24 12.5 A5 5 0 0 0 27.5 12.8Z" fill="#c9c6c4"/>
<circle cx="44.6" cy="7.3" r="6.3" fill="#3c3a39"/><path d="M44.6 2.6a2.8 2.8 0 0 1 1.6 5.1l1 4h-5.2l1-4a2.8 2.8 0 0 1 1.6-5.1z" fill="#c9c6c4"/>
</svg>
<div class="ico" style="left:280px;top:3px;width:14px;height:15px;border-radius:2px"></div>
<div class="abs" style="left:284px;top:13px;width:5px;height:2px;background:#222"></div>
<div class="ico" style="left:296px;top:3px;width:32px;height:15px;border-radius:2px"></div>
<div class="lbl" style="left:307px;top:1px;font:bold 13px/16px 'DejaVu Sans',sans-serif;color:#1a1a1a">x</div>
<!-- toolbar -->
<div class="abs" style="left:6px;top:23px;width:57px;height:22px;border-radius:6px;box-shadow:1px 1px 0 #8a8785,-1px -1px 0 #c4c1bf;background:#b0adab"></div>
<div class="abs" style="left:8px;top:25px;width:18px;height:18px;border-radius:5px;border:1.5px solid #2c2c2c;background:#b8b5b3"></div>
<svg class="abs" style="left:8px;top:25px" width="18" height="18" viewBox="0 0 18 18"><circle cx="6.2" cy="6" r="2.6" fill="none" stroke="#222" stroke-width="1.8"/><path d="M8 8L14 13.5M11 11L9.6 12.6M13 12.6L11.6 14.2" stroke="#222" stroke-width="1.8" fill="none"/></svg>
<div class="ico" style="left:30px;top:26px;width:12px;height:16px;border-radius:2px"></div>
<div class="ico" style="left:45px;top:26px;width:12px;height:16px;border-radius:2px"></div>
<svg class="abs" style="left:30px;top:26px" width="28" height="16"><polygon points="8,4 8,12 3,8" fill="#111"/><polygon points="19,4 19,12 24,8" fill="#111"/></svg>
<!-- nav arrows -->
<div class="abs" style="left:186px;top:25px;width:21px;height:18px;border:2px solid #4a4847;background:#b5b2b0"></div>
<div class="abs" style="left:208px;top:25px;width:21px;height:18px;border:2px solid #4a4847;background:#b5b2b0"></div>
<div class="abs" style="left:230px;top:25px;width:22px;height:18px;border:2px solid #8d8a88;background:#b5b2b0"></div>
<svg class="abs" style="left:186px;top:25px" width="66" height="18" viewBox="0 0 66 18"><path d="M10.5 3.5L17 10H13.5V13.5H7.5V10H4z" fill="#4a4847"/><path d="M26 9L34 4.5V7.5H39V10.5H34V13.5z" fill="#4a4847"/><path d="M61 9L53 4.5V7.5H48V10.5H53V13.5z" fill="#8d8a88"/></svg>
<div class="ico" style="left:267px;top:25px;width:16px;height:18px"></div>
<div class="ico" style="left:287px;top:25px;width:18px;height:18px"></div>
<div class="ico" style="left:308px;top:25px;width:17px;height:18px"></div>
<svg class="abs" style="left:267px;top:25px" width="60" height="18" viewBox="0 0 60 18"><path d="M5 11V7.5a3.6 3.6 0 0 1 7.2 0V15" fill="none" stroke="#4a4847" stroke-width="2.6"/><polygon points="1,9.5 9,9.5 5,15" fill="#4a4847"/>
<path d="M23 4l2 9 8 1 2-9z" fill="#5a5857"/><path d="M23 4l3-1.5 9 2.5" fill="none" stroke="#e4e2e0" stroke-width="1.5"/><path d="M23 4l2 9" stroke="#e4e2e0" stroke-width="1.5"/><polygon points="37,11 37,16 32,16" fill="#333"/></svg>
<div class="lbl" style="left:311px;top:23px;font:bold 17px/20px 'DejaVu Sans',sans-serif;color:#4a4847">?</div>
<div class="abs" style="left:3px;top:50px;width:326px;height:1px;background:#8f8c8a;box-shadow:0 1px 0 #bebbb9"></div>
<!-- section header -->
<svg class="abs" style="left:6px;top:57px" width="9" height="6"><polygon points="0,0.5 8.5,0.5 4.2,5.5" fill="#2a2a2a"/></svg>
<div class="lbl" style="left:17px;top:53px;font:bold 11px/16px 'DejaVu Sans Condensed','DejaVu Sans',sans-serif;color:#2b2623">Gradient1</div>
<div class="ico" style="left:312px;top:53px;width:15px;height:15px"></div>
<div class="lbl" style="left:316px;top:52px;font:bold 12px/16px 'DejaVu Sans',sans-serif;color:#4a4847">?</div>
<!-- tabs -->
<div class="abs" style="left:3px;top:69px;width:326px;height:17px;background:#c5c3c1"></div>
<div class="abs" style="left:4px;top:70px;width:95px;height:17px;background:#aca8a5;border-radius:5px 0 0 0;box-shadow:1px 0 0 #8b8886,inset 1px 1px 0 #d0cdcb"></div>
<div class="lbl" style="left:9px;top:71px;font:bold 11px/16px 'DejaVu Sans Condensed','DejaVu Sans',sans-serif;color:#15110f">RGBA Gradient</div>
<div class="lbl" style="left:106px;top:71px;font:bold 11px/16px 'DejaVu Sans Condensed','DejaVu Sans',sans-serif;color:#2a2623">Alpha Gradient</div>
<div class="lbl" style="left:204.5px;top:71px;font:bold 11px/16px 'DejaVu Sans Condensed','DejaVu Sans',sans-serif;color:#2a2623">Input</div>
<!-- name row -->
<div class="lbl" style="left:32px;top:96px;font:11px/14px 'Liberation Sans',sans-serif;color:#10102a;letter-spacing:-.5px">Name</div>
<div class="dots" style="left:62px;top:107px;width:32px"></div>
<div class="fld" style="left:98px;top:94px;width:224px;height:16px"></div>
<div class="lbl" style="left:102px;top:96px;font:12px/14px 'Liberation Sans',sans-serif;color:#fff">Gradient1</div>
<!-- gradient bar -->
<div class="abs" style="left:37px;top:122px;width:282px;height:20px;border:1px solid #000;background:linear-gradient(90deg,#f00 0%,#ff0030 5%,#ff00c8 15%,#f0f 20%,#c800ff 24%,#5000ff 31%,#1400ff 33.5%,#00f 35%,#0014ff 36.5%,#0050ff 39%,#00c8ff 46%,#0ff 50%,#00ffc8 54%,#00ff3c 62%,#0f0 65%,#3cff00 68%,#c8ff00 76%,#ff0 81%,#ff0 100%)"></div>
<svg class="abs" style="left:30px;top:114px" width="300" height="40" viewBox="0 0 300 40">
<g fill="#fff" stroke="#000" stroke-width="1"><circle cx="35" cy="5" r="2.6"/><circle cx="83.9" cy="5" r="2.6"/><circle cx="126.2" cy="5" r="2.6"/><circle cx="169.1" cy="5" r="2.6"/><circle cx="213.1" cy="5" r="2.6"/></g>
<g stroke="#000" stroke-width="1">
<polygon points="3.5,28 7.5,23.5 11.5,28" fill="#b9b6b4"/><rect x="3" y="28" width="9" height="9" fill="#f00" stroke="none"/>
<polygon points="59.5,28 63.5,23.5 67.5,28" fill="#b9b6b4"/><rect x="59.5" y="28.5" width="8" height="8" fill="#f0f"/>
<polygon points="101.5,28 105.5,23.5 109.5,28" fill="#b9b6b4"/><rect x="101.5" y="28.5" width="8" height="8" fill="#00f"/>
<polygon points="144.5,28 148.5,23.5 152.5,28" fill="#b9b6b4"/><rect x="144.5" y="28.5" width="8" height="8" fill="#0ff"/>
<polygon points="186.5,28 190.5,23.5 194.5,28" fill="#b9b6b4"/><rect x="186.5" y="28.5" width="8" height="8" fill="#0f0"/>
<polygon points="231.5,28 235.5,23.5 239.5,28" fill="#b9b6b4"/><rect x="231.5" y="28.5" width="8" height="8" fill="#ff0"/>
</g></svg>
<!-- color sliders -->
<div class="an" style="left:14px;top:162px"></div>
<div class="abs" style="left:35px;top:159px;width:22px;height:22px;background:#000;box-shadow:1px 1px 0 #777"></div>
<div class="lbl" style="left:39px;top:158px;font:bold 21px/24px 'DejaVu Sans',sans-serif;color:#fff">?</div>
<div class="btn" style="left:33px;top:187px;width:26px;height:24px;font:10px/25px 'Liberation Sans',sans-serif;color:#2a3358">RGB</div>
<div class="lbl" style="left:64px;top:159px;font:bold 12px/14px 'DejaVu Sans',sans-serif;color:#000">R</div>
<div class="lbl" style="left:64px;top:173px;font:bold 12px/14px 'DejaVu Sans',sans-serif;color:#000">G</div>
<div class="lbl" style="left:64px;top:187px;font:bold 12px/14px 'DejaVu Sans',sans-serif;color:#000">B</div>
<div class="lbl" style="left:64px;top:201px;font:bold 12px/14px 'DejaVu Sans',sans-serif;color:#000">A</div>
<div class="abs" style="left:77px;top:157px;width:223px;height:60px;background:#383534;border-radius:6px;border:1px solid #161616;box-shadow:0 1px 0 #c9c6c4"></div>
<div class="abs" style="left:116px;top:158px;width:180px;height:58px;background:#000"></div>
<div class="lbl" style="left:82px;top:159px;font:12px/14px 'Liberation Sans',sans-serif;color:#fff">1.000</div>
<div class="lbl" style="left:82px;top:173px;font:12px/14px 'Liberation Sans',sans-serif;color:#fff">0.000</div>
<div class="lbl" style="left:82px;top:187px;font:12px/14px 'Liberation Sans',sans-serif;color:#fff">0.000</div>
<div class="lbl" style="left:82px;top:201px;font:12px/14px 'Liberation Sans',sans-serif;color:#fff">1.000</div>
<div class="abs" style="left:117px;top:160px;width:178px;height:12px;background:linear-gradient(90deg,#000,#f00)"></div>
<div class="abs" style="left:117px;top:174px;width:178px;height:12px;background:linear-gradient(90deg,#f00,#ff0)"></div>
<div class="abs" style="left:117px;top:188px;width:178px;height:12px;background:linear-gradient(90deg,#f00,#f0f)"></div>
<div class="abs" style="left:117px;top:202px;width:178px;height:12px;background:linear-gradient(90deg,rgba(40,0,0,.55),rgba(200,0,0,.6) 50%,rgba(255,0,0,.95) 95%),conic-gradient(#1a1a1a 25%,#cfcfcf 0 50%,#1a1a1a 0 75%,#cfcfcf 0) 12px 0/24px 12px"></div>
<svg class="abs" style="left:116px;top:158px" width="182" height="58" viewBox="0 0 182 58"><g fill="#b9b6b4"><polygon points="179,9 179,14 174,14"/><polygon points="1,23 1,28 6,28"/><polygon points="1,37 1,42 6,42"/><polygon points="179,51 179,56 174,56"/></g></svg>
<div class="abs" style="left:305px;top:158px;width:14px;height:16px;border:1px solid #3c3c3c;border-radius:4.5px;background:#bab7b5"></div>
<svg class="abs" style="left:305px;top:158px" width="14" height="16" viewBox="0 0 14 16"><g fill="#2b2b2b"><rect x="0.5" y="7.2" width="4.5" height="2.1"/><rect x="4.4" y="4" width="3.4" height="8.4" rx="1"/><rect x="7.5" y="5.1" width="3.3" height="1.4"/><rect x="7.5" y="10" width="3.3" height="1.4"/></g></svg>
<!-- pos row -->
<div class="an" style="left:13px;top:226px"></div>
<div class="lbl" style="left:32px;top:224px;font:12px/14px 'Liberation Sans',sans-serif;color:#464646;letter-spacing:.6px">Pos</div>
<div class="fld" style="left:61px;top:225px;width:38px;height:18px;border-radius:4px;border:1px solid #1c1c1c"></div>
<div class="lbl" style="left:64px;top:227px;font:12px/14px 'Liberation Sans',sans-serif;color:#fff">0</div>
<div class="btn" style="left:115px;top:224px;width:55px;height:21px;font:bold 11px/21px 'DejaVu Sans Condensed','DejaVu Sans',sans-serif;color:#24304f">Cubic</div>
<!-- animation group -->
<div class="abs" style="left:8px;top:257px;width:314px;height:55px;border:1px solid #7c7977;border-radius:6px;box-shadow:inset 1px 1px 0 #bab7b5"></div>
<div class="lbl" style="left:15px;top:251px;padding:0 2px;background:#aca8a5;font:bold 11px/16px 'DejaVu Sans Condensed','DejaVu Sans',sans-serif;color:#33384a">Animation</div>
<div class="btn" style="left:16px;top:266px;width:135px;height:19px;font:11px/21px 'DejaVu Sans Condensed','DejaVu Sans',sans-serif;letter-spacing:-.2px">Key All</div>
<div class="btn" style="left:156px;top:266px;width:135px;height:19px;font:11px/21px 'DejaVu Sans Condensed','DejaVu Sans',sans-serif;letter-spacing:-.2px">Remove keys</div>
<div class="btn" style="left:16px;top:288px;width:135px;height:19px;font:11px/21px 'DejaVu Sans Condensed','DejaVu Sans',sans-serif;letter-spacing:-.2px">Reset</div>
<div class="btn" style="left:156px;top:288px;width:135px;height:19px;font:11px/21px 'DejaVu Sans Condensed','DejaVu Sans',sans-serif;letter-spacing:-.2px">Remove Shaders</div>
<!-- gradient type -->
<div class="an" style="left:14px;top:324px"></div>
<div class="lbl" style="left:32px;top:322.5px;font:11px/13.5px 'DejaVu Sans Condensed','DejaVu Sans',sans-serif;color:#3d4252;letter-spacing:-.2px;white-space:normal;width:50px">Gradient type</div>
<div class="dots" style="left:79px;top:333px;width:14px"></div>
<div class="abs" style="left:98px;top:321px;width:223px;height:16px;background:#848180;border-radius:8px;box-shadow:0 -1px 0 #6c6967,0 1px 0 #c2bfbd"></div>
<div class="lbl" style="left:105px;top:324px;font:12px/14px 'Liberation Sans',sans-serif;color:#cfd0d6">Vertical</div>
<div class="abs" style="left:306px;top:321px;width:15px;height:16px;border-radius:8px;background:#9f9c9a"></div>
<svg class="abs" style="left:309px;top:326px" width="9" height="7"><polygon points="0,0 9,0 4.5,6.5" fill="#807d7b"/></svg>
<!-- invert / clip -->
<div class="an" style="left:14px;top:354px"></div>
<div class="lbl" style="left:32px;top:353px;font:11px/14px 'DejaVu Sans Condensed','DejaVu Sans',sans-serif;color:#0c0c28;letter-spacing:-.2px">Invert Direction</div>
<div class="dots" style="left:110px;top:363px;width:192px"></div>
<div class="abs" style="left:305px;top:350px;width:15px;height:15px;background:#c6c3c1;border-radius:3px;box-shadow:inset 1px 1px 0 #a9a6a4,1px 1px 0 #b6b3b1"></div>
<div class="an" style="left:14px;top:376px"></div>
<div class="lbl" style="left:32px;top:374.5px;font:11px/14px 'DejaVu Sans Condensed','DejaVu Sans',sans-serif;color:#0c0c28;letter-spacing:-.2px">Clip</div>
<div class="dots" style="left:50px;top:385px;width:252px"></div>
<div class="abs" style="left:305px;top:372px;width:15px;height:15px;background:#c6c3c1;border-radius:3px;box-shadow:inset 1px 1px 0 #a9a6a4,1px 1px 0 #b6b3b1"></div>
<div class="lbl" style="left:17px;top:392px;font:bold 11px/16px 'DejaVu Sans Condensed','DejaVu Sans',sans-serif;color:#33384a">Preset</div>
</div>
<!-- render tree window (page coords) -->
<div class="abs" style="left:16px;top:461px;width:1458px;height:330px;background:#aca8a5;border-left:1px solid #4e4e4e;border-top:1px solid #4e4e4e"></div>
<div class="abs" style="left:17px;top:462px;width:1457px;height:3px;background:linear-gradient(#d8d5d3,#b9b6b4)"></div>
<div class="abs" style="left:17px;top:462px;width:3px;height:329px;background:#c4c1bf"></div>
<div class="abs" style="left:1468px;top:465px;width:3px;height:326px;background:#c6c3c1"></div><div class="abs" style="left:1471px;top:462px;width:3px;height:329px;background:#505050"></div>
<div class="abs" style="left:20px;top:465px;width:1379px;height:15px;background:#61758e;border-radius:7px 0 0 0;box-shadow:0 1px 0 #4c5a6d"></div>
<div class="lbl" style="left:30px;top:465px;font:bold 11px/16px 'DejaVu Sans Condensed','DejaVu Sans',sans-serif;color:#fff;letter-spacing:.1px">Render Tree</div>
<div class="ico" style="left:1400px;top:465px;width:15px;height:15px;border-radius:2px"></div>
<div class="abs" style="left:1405px;top:475px;width:5px;height:2px;background:#222"></div>
<div class="ico" style="left:1417px;top:465px;width:16px;height:15px;border-radius:2px"></div>
<div class="abs" style="left:1421px;top:467px;width:10px;height:9px;border:1.500px solid #222;border-top-width:2px"></div>
<div class="ico" style="left:1435px;top:465px;width:31px;height:15px;border-radius:2px"></div>
<div class="lbl" style="left:1445.500px;top:465px;font:bold 12.500px/16px 'DejaVu Sans',sans-serif;color:#111">X</div>
<div class="abs" style="left:20px;top:482px;width:1447px;height:1px;background:#c2bfbd"></div>
<div class="menu abs" style="left:0;top:488px;width:320px;height:14px">
<span style="left:28px">Show</span><span style="left:68px">Tools</span><span style="left:107px">Nodes</span><span style="left:151px;">Clips</span><span style="left:187px;letter-spacing:-.3px">Compounds</span><span style="left:257px">User Tools</span></div>
<!-- toolbar group 1 -->
<div class="abs" style="left:322px;top:484px;width:52px;height:25px;background:#aeaba9;box-shadow:inset 1px 1px 0 #c6c3c1,inset -1px -1px 0 #8a8785"></div>
<div class="abs" style="left:325px;top:487px;width:10px;height:19px;border-radius:3px;background:#a4a19f;box-shadow:inset 1px 1px 1px #8e8b89,inset -1px -1px 1px #bbb8b6"></div>
<div class="abs" style="left:337px;top:487px;width:10px;height:19px;border-radius:3px;background:#a4a19f;box-shadow:inset 1px 1px 1px #8e8b89,inset -1px -1px 1px #bbb8b6"></div>
<div class="abs" style="left:349px;top:487px;width:10px;height:19px;border-radius:3px;background:#a4a19f;box-shadow:inset 1px 1px 1px #8e8b89,inset -1px -1px 1px #bbb8b6"></div>
<div class="abs" style="left:361px;top:487px;width:10px;height:19px;border-radius:3px;background:#a4a19f;box-shadow:inset 1px 1px 1px #8e8b89,inset -1px -1px 1px #bbb8b6"></div>
<!-- toolbar group 2 -->
<div class="abs" style="left:375px;top:484px;width:174px;height:25px;background:#aeaba9;box-shadow:inset 1px 1px 0 #c6c3c1,inset -1px -1px 0 #8a8785"></div>
<div class="ico" style="left:380px;top:487px;width:21px;height:19px;background:#d2d0ce"></div>
<div class="ico" style="left:405px;top:487px;width:20px;height:19px"></div>
<div class="ico" style="left:429px;top:487px;width:20px;height:19px"></div>
<div class="ico" style="left:453px;top:487px;width:19px;height:19px"></div>
<div class="ico" style="left:477px;top:487px;width:19px;height:19px"></div>
<div class="ico" style="left:500px;top:487px;width:20px;height:19px"></div>
<div class="ico" style="left:525px;top:487px;width:20px;height:19px"></div>
<svg class="abs" style="left:380px;top:487px" width="166" height="19" viewBox="0 0 166 19">
<rect x="5" y="9" width="11" height="8" fill="#2e2c2c"/><path d="M7.3 9V7a3.2 3.2 0 0 1 6.4 0V9" fill="none" stroke="#2e2c2c" stroke-width="1.8"/><rect x="9.8" y="11.5" width="1.5" height="3.5" fill="#d2d0ce"/>
<path d="M29 9.5a5.5 6 0 0 1 9-4.5M41 9.500a5.5 6 0 0 1-9 4.500" fill="none" stroke="#3a3838" stroke-width="2"/><polygon points="36,2 41,6.500 35,8" fill="#3a3838"/><polygon points="34,17 29,12.500 35,11" fill="#3a3838"/>
<rect x="51" y="3" width="16" height="14" rx="4" fill="#3f3d3d"/><path d="M62.500 7.500a4 4 0 1 0 0 5" fill="none" stroke="#c8c5c3" stroke-width="2.300"/>
<circle cx="82" cy="10.500" r="6.500" fill="#3d57b5"/><path d="M78 6c2-2 5-1 6 1s-2 3-3 5-4-1-4-3z" fill="#5fae5a"/><path d="M84 12c2 0 3 1 2 3" stroke="#5fae5a" stroke-width="2" fill="none"/><path d="M88.500 1.500v5M86 4h5" stroke="#fff" stroke-width="1.200"/>
<circle cx="106" cy="11" r="6.500" fill="#7d7b7a"/><circle cx="104" cy="9" r="3" fill="#a9a6a4"/><path d="M106 5.500q.5-3 2-4" stroke="#3a3838" stroke-width="1.300" fill="none"/>
<path d="M122 9.500L129 3.500V7H138V12H129V15.500z" fill="#aeb4d8" stroke="#2c3a96" stroke-width="1.800"/>
</svg>
<div class="lbl" style="left:528px;top:485px;font:bold 19px/22px 'DejaVu Sans',sans-serif;color:#454342">?</div>
<!-- path dropdowns -->
<div class="abs" style="left:549px;top:484px;width:489px;height:25px;box-shadow:inset 1px 1px 0 #c6c3c1,inset -1px -1px 0 #8a8785"></div>
<div class="fld" style="left:552px;top:488px;width:480px;height:17px;border-radius:9px"></div>
<div class="lbl" style="left:560px;top:491px;font:12px/14px 'Liberation Sans',sans-serif;color:#fff">DefaultLib.Material</div>
<div class="abs" style="left:1017px;top:489px;width:14px;height:14px;border-radius:7px;background:#f4f4f4"></div>
<svg class="abs" style="left:1020px;top:493px" width="9" height="7"><polygon points="0,0 8.5,0 4.2,6.500" fill="#111"/></svg>
<div class="abs" style="left:1038px;top:484px;width:345px;height:25px;box-shadow:inset 1px 1px 0 #c6c3c1,inset -1px -1px 0 #8a8785"></div>
<div class="abs" style="left:1041px;top:488px;width:252px;height:17px;border-radius:9px;background:#848180;box-shadow:0 -1px 0 #6c6967,0 1px 0 #c2bfbd"></div>
<div class="abs" style="left:1279px;top:489px;width:14px;height:14px;border-radius:7px;background:#9f9c9a"></div>
<svg class="abs" style="left:1282px;top:493px" width="9" height="7"><polygon points="0,0 8.500,0 4.200,6.500" fill="#807d7b"/></svg>
<div class="btn" style="left:1299px;top:487px;width:34px;height:19px;font:11px/21px 'DejaVu Sans Condensed','DejaVu Sans',sans-serif;color:#858280">Edit</div>
<div class="btn" style="left:1337px;top:487px;width:40px;height:19px;font:11px/21px 'DejaVu Sans Condensed','DejaVu Sans',sans-serif;color:#858280;text-align:left;padding-left:6px">New</div>
<svg class="abs" style="left:1366px;top:496px" width="7" height="7"><polygon points="6.500,0 6.500,6.500 0,6.500" fill="#2a2a2a"/></svg>
<div id="grid"></div><div class="abs" style="left:20px;top:509px;width:1447px;height:1px;background:#bdbab8"></div>
<svg class="abs" style="left:0;top:509px" width="1474" height="282" viewBox="0 509 1474 282">
<path d="M288 610.4C305.9 610.4 302.6 663.1 320.5 663.1" stroke="#d8cf2c" stroke-width="1.5" fill="none"/>
<path d="M293 707.3C308.1 707.3 305.4 678.9 320.5 678.9" stroke="#d8cf2c" stroke-width="1.5" fill="none"/>
<path d="M567 631.2C573.3 631.2 572.2 614.3 578.5 614.3" stroke="#2edc50" stroke-width="1.5" fill="none"/>
<path d="M765 598.3C780.1 598.3 777.4 614.3 792.5 614.3" stroke="#2edc50" stroke-width="1.5" fill="none"/>
<path d="M902 598.3C935.8 598.3 935.8 669 969.5 669" stroke="#d21919" stroke-width="1.5" fill="none"/>
<path d="M1160 637.2C1202.5 637.2 1202.5 603.8 1245 603.8" stroke="#d21919" stroke-width="1.5" fill="none"/>
</svg>
<div class="node" style="left:116px;top:581px;width:169px;height:75px">
<div class="nt" style="left:8.4px;top:3.2px;letter-spacing:0px">Vector_State_Origin</div>
<div class="mi" style="left:143.0px;top:3.4px"></div>
<div class="pl" style="right:8px;top:21.8px">out</div>
<div class="port" style="left:162.5px;top:24.4px;background:#e6dc2e"></div>
<div class="pl" style="left:8px;top:37.8px">mode</div>
<div class="port" style="left:-4.5px;top:40.4px;background:#0a7a0a"></div>
<div class="dl" style="top:51.0px"></div>
<svg class="abs" style="left:4px;top:56.8px" width="9" height="8"><polygon points="0.3,0.3 8,0.3 4.1,7.6" fill="#000"/></svg>
<div class="nt" style="left:13.6px;top:53.4px;font-size:11px;letter-spacing:-.6px">Layers</div>
</div>
<div class="node" style="left:49px;top:678px;width:241px;height:75px">
<div class="nt" style="left:8.0px;top:3.2px;letter-spacing:0px">Vector_State_IntersectionPoint</div>
<div class="mi" style="left:215.0px;top:3.4px"></div>
<div class="pl" style="right:8px;top:21.7px">out</div>
<div class="port" style="left:234.5px;top:24.3px;background:#e6dc2e"></div>
<div class="pl" style="left:8px;top:37.4px">mode</div>
<div class="port" style="left:-4.5px;top:40.0px;background:#0a7a0a"></div>
<div class="dl" style="top:51.0px"></div>
<svg class="abs" style="left:4px;top:56.9px" width="9" height="8"><polygon points="0.3,0.3 8,0.3 4.1,7.6" fill="#000"/></svg>
<div class="nt" style="left:13.6px;top:53.5px;font-size:11px;letter-spacing:-.6px">Layers</div>
</div>
<div class="node" style="left:324px;top:602px;width:240px;height:107px">
<div class="nt" style="left:8.0px;top:3.1px;letter-spacing:-0.3px">Vector-Scalar-Distance-between</div>
<div class="mi" style="left:214.5px;top:3.3px"></div>
<div class="pl" style="right:8px;top:21.6px">out</div>
<div class="port" style="left:233.5px;top:24.2px;background:#2ee650"></div>
<div class="pl" style="left:8px;top:37.4px">mode</div>
<div class="port" style="left:-4.5px;top:40.0px;background:#0a7a0a"></div>
<div class="pl" style="left:8px;top:53.5px">vector_input1</div>
<div class="port" style="left:-4.5px;top:56.1px;background:#e6dc2e"></div>
<div class="pl" style="left:8px;top:69.3px">vector_input2</div>
<div class="port" style="left:-4.5px;top:71.9px;background:#e6dc2e"></div>
<div class="dl" style="top:82.9px"></div>
<svg class="abs" style="left:4px;top:88.9px" width="9" height="8"><polygon points="0.3,0.3 8,0.3 4.1,7.6" fill="#000"/></svg>
<div class="nt" style="left:13.6px;top:85.5px;font-size:11px;letter-spacing:-.6px">Layers</div>
</div>
<div class="node" style="left:582px;top:569px;width:180px;height:139px">
<div class="nt" style="left:7.7px;top:3.4px;letter-spacing:-0.1px">Scalar_Change_Range</div>
<div class="mi" style="left:154.0px;top:3.6px"></div>
<div class="pl" style="right:8px;top:21.7px">out</div>
<div class="port" style="left:173.5px;top:24.3px;background:#2ee650"></div>
<div class="pl" style="left:8px;top:37.7px">input</div>
<div class="port" style="left:-4.5px;top:40.3px;background:#2ee650"></div>
<div class="pl" style="left:8px;top:53.8px">oldrange_min</div>
<div class="port" style="left:-4.5px;top:56.4px;background:#2ee650"></div>
<div class="pl" style="left:8px;top:69.8px">oldrange_max</div>
<div class="port" style="left:-4.5px;top:72.4px;background:#2ee650"></div>
<div class="pl" style="left:8px;top:85.8px">newrange_min</div>
<div class="port" style="left:-4.5px;top:88.4px;background:#2ee650"></div>
<div class="pl" style="left:8px;top:101.9px">newrange_max</div>
<div class="port" style="left:-4.5px;top:104.5px;background:#2ee650"></div>
<div class="dl" style="top:115.0px"></div>
<svg class="abs" style="left:4px;top:121.0px" width="9" height="8"><polygon points="0.3,0.3 8,0.3 4.1,7.6" fill="#000"/></svg>
<div class="nt" style="left:13.6px;top:117.6px;font-size:11px;letter-spacing:-.6px">Layers</div>
</div>
<div class="node" style="left:796px;top:569px;width:103px;height:59px">
<div class="nt" style="left:7.8px;top:3.4px;letter-spacing:-0.3px">Gradient1</div>
<div class="mi" style="left:77.3px;top:3.6px;background:linear-gradient(#b9c9c1 0 3px,#555 3px 4px,#8a9690 4px 6px,#555 6px 7px,#6a7570 7px)"></div>
<div class="pl" style="right:8px;top:21.7px">out</div>
<div class="port" style="left:96.5px;top:24.3px;background:#dc1414"></div>
<div class="pl" style="left:8px;top:37.7px">input</div>
<div class="port" style="left:-4.5px;top:40.3px;background:#2ee650"></div>
</div>
<div class="node" style="left:973px;top:608px;width:185px;height:75px;background:#85a071;border-color:#e6eadf;box-shadow:2px 2px 3px rgba(0,0,0,.45),0 0 0 .5px #6d6d6d">
<div class="nt" style="left:8.2px;top:3.4px;color:#fff;letter-spacing:-.55px">standard</div>
<div class="mi" style="left:158px;top:4px;background:linear-gradient(#cfd6c9 0 3px,#555 3px 4px,#8d8d8d 4px 6px,#555 6px 7px,#777 7px)"></div>
<div class="pl" style="right:8px;top:21.600px">out</div>
<div class="port" style="left:178.500px;top:24.200px;background:#dc1414"></div>
<svg class="abs" style="left:4px;top:41.200px" width="9" height="8"><polygon points="0.3,0.3 8,0.3 4.1,7.6" fill="#000"/></svg>
<div class="nt" style="left:13.600px;top:37.800px;font-size:11px;letter-spacing:-.5px">Diffuse</div>
<div class="pl" style="left:14px;top:53.400px">Kd_color</div>
<div class="port" style="left:-4.500px;top:56px;background:#dc1414"></div>
</div>
<div class="node" style="left:1245px;top:593px;width:95px;height:23px;background:#e2a769;border-radius:10px">
<div class="nt" style="left:8.500px;top:3.400px;letter-spacing:-.5px">Material</div>
<div class="mi" style="left:68.500px;top:4px;width:15px;border-color:#444;background:linear-gradient(#a9a9a9 0 3px,#444 3px 4px,#777 4px 6px,#444 6px 7px,#666 7px)"></div>
</div>
</body></html>
